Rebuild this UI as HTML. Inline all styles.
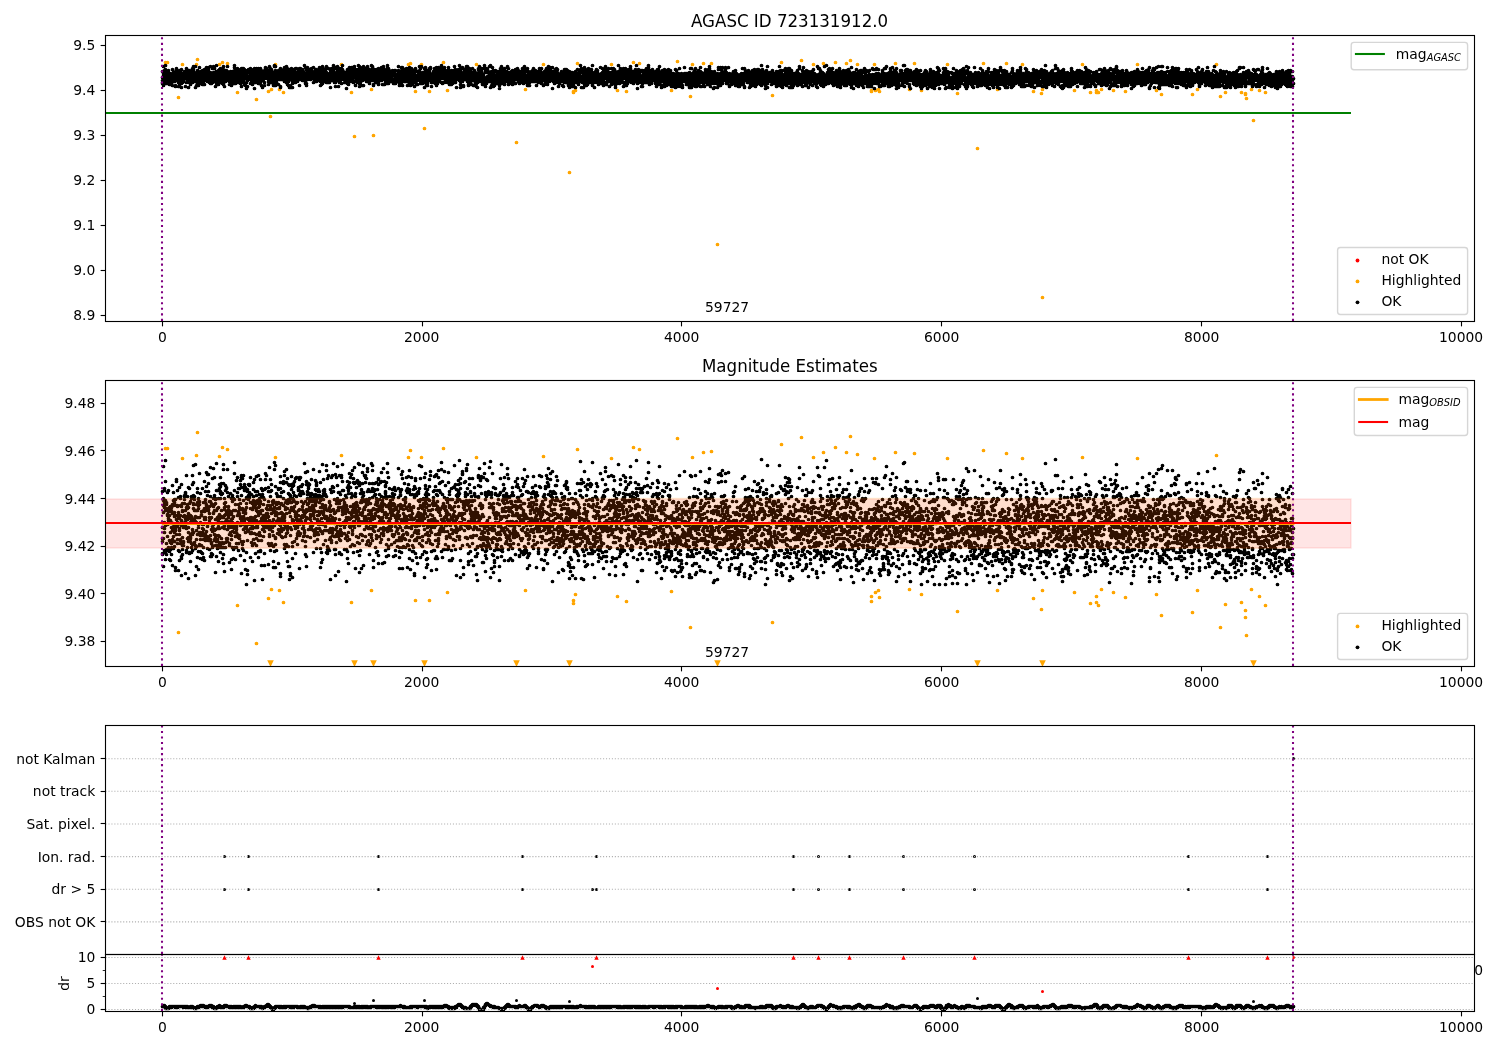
<!DOCTYPE html>
<html><head><meta charset="utf-8"><title>AGASC ID 723131912.0</title>
<style>html,body{margin:0;padding:0;background:#fff}body{width:1500px;height:1050px;overflow:hidden}</style></head>
<body>
<svg width="1500" height="1050" viewBox="0 0 1500 1050" style="display:block;will-change:transform;font-family:'DejaVu Sans','Liberation Sans',sans-serif;font-size:13.889px">
<rect width="1500" height="1050" fill="#fff"/>
<defs>
<clipPath id="c1"><rect x="105.5" y="35.5" width="1369.0" height="286.0"/></clipPath>
<clipPath id="c2"><rect x="105.5" y="380.5" width="1369.0" height="286.0"/></clipPath>
<clipPath id="c3"><rect x="105.5" y="725.5" width="1369.0" height="229.0"/></clipPath>
<clipPath id="c4"><rect x="105.5" y="954.5" width="1369.0" height="57.0"/></clipPath>
</defs>
<g clip-path="url(#c1)">
<g transform="translate(.5 .5)">
<path d="M165 62h0m2 0h0m11 35h0m4-33h0m14 0h0m1-5h0m22 5h0m3-2h0m5 1h0m10 29h0m19 7h0m12-8h0m2 25h0m1-27h0m4-25h0m4 25h0m4 3h0m58-28h0m10 28h0m3 44h0m17-47h0m2 46h0m35-71h0m2-1h0m5 28h0m6-27h0m3 64h0m5-37h0m14-29h0m4 28h0m29-26h0m40 78h0m9-53h0m18-25h0m26 108h0m4-81h0m0 1h0m2-2h0m2-27h0m34 1h0m6 26h0m9 1h0m7-29h0m6 1h0m32 27h0m6-29h0m13 35h0m2-32h0m11-1h0m8 0h0m6 181h0m55-149h0m9-33h0m20-2h0m12 4h0m10-1h0m12-1h0m11 1h0m4-3h0m7 4h0m14 26h0m0 1h0m3-27h0m1 26h0m3-1h0m1 2h0m16-28h0m14 26h0m5-26h0m7 27h0m26-26h0m10 29h0m20 55h0m6-85h0m14 26h0m9-26h0m16 1h0m11 27h0m8 2h0m1-4h0m0 208h0m32-207h0m8-26h0m8 28h0m6-2h0m0 2h0m2 0h0m3-3h0m12 1h0m12 1h0m12-27h0m19 26h0m5 4h0m31 0h0m5-5h0m19-25h0m4 32h0m5-4h0m16 0h0m4 1h0m0 1h0m1 4h0m5-9h0m2 31h0m6-30h0m6 2h0" stroke="#ffa500" stroke-width="3.74" stroke-linecap="round" fill="none"/>
<path d="M162 71h0m0 6h0m0 3h0m0 2h0m0 1h0m1-17h0m0 6h0m0 1h0m0 2h0m0 5h0m0 5h0m1-15h0m0 3h0m0 1h0m0 3h0m0 1h0m0 4h0m1-17h0m0 4h0m0 3h0m0 2h0m0 3h0m0 5h0m0 1h0m1-10h0m0 1h0m0 7h0m0 1h0m0 1h0m1-12h0m0 4h0m0 2h0m0 2h0m0 3h0m1-12h0m0 4h0m0 1h0m0 1h0m0 5h0m1-7h0m0 1h0m0 2h0m0 3h0m0 2h0m0 2h0m1-11h0m0 1h0m0 2h0m0 2h0m0 2h0m0 2h0m0 2h0m1-10h0m0 3h0m0 4h0m0 2h0m1-14h0m0 4h0m0 2h0m0 3h0m0 2h0m0 5h0m1-14h0m0 1h0m0 1h0m0 4h0m0 2h0m0 2h0m1-9h0m0 1h0m0 2h0m0 2h0m0 1h0m0 2h0m0 1h0m1-9h0m0 3h0m0 2h0m0 1h0m0 7h0m0 1h0m1-18h0m0 1h0m0 4h0m0 3h0m0 1h0m0 2h0m1-9h0m0 3h0m0 2h0m0 2h0m0 3h0m1-8h0m0 3h0m0 1h0m0 1h0m0 5h0m0 4h0m1-16h0m0 6h0m0 2h0m0 1h0m0 3h0m0 2h0m1-12h0m0 1h0m0 2h0m0 5h0m1-11h0m0 5h0m0 2h0m0 1h0m0 6h0m0 4h0m1-14h0m0 1h0m0 3h0m0 2h0m0 2h0m0 1h0m1-7h0m0 2h0m0 3h0m0 1h0m1-10h0m0 1h0m0 1h0m0 2h0m0 2h0m1-6h0m0 3h0m0 2h0m0 1h0m0 9h0m1-18h0m0 6h0m0 1h0m0 3h0m0 4h0m1-10h0m0 1h0m0 1h0m0 2h0m0 4h0m0 1h0m1-11h0m0 4h0m0 1h0m0 2h0m0 1h0m0 1h0m0 1h0m0 7h0m1-17h0m0 3h0m0 2h0m0 1h0m0 4h0m0 2h0m1-10h0m0 3h0m0 2h0m0 2h0m0 1h0m0 4h0m1-12h0m0 3h0m0 1h0m0 4h0m0 1h0m0 1h0m1-14h0m0 1h0m0 7h0m0 2h0m0 1h0m0 2h0m0 1h0m1-16h0m0 3h0m0 2h0m0 2h0m0 1h0m0 4h0m1-6h0m0 2h0m0 2h0m0 4h0m0 1h0m1-15h0m0 8h0m0 1h0m0 1h0m0 5h0m0 6h0m1-14h0m0 4h0m0 1h0m0 2h0m0 1h0m0 4h0m1-15h0m0 1h0m0 2h0m0 1h0m0 2h0m0 3h0m0 4h0m1-11h0m0 1h0m0 1h0m0 3h0m0 5h0m0 3h0m1-18h0m0 6h0m0 3h0m0 2h0m0 3h0m1-10h0m0 6h0m0 1h0m0 1h0m0 1h0m0 2h0m0 1h0m1-9h0m0 1h0m0 2h0m0 2h0m0 2h0m0 1h0m1-12h0m0 7h0m0 1h0m0 1h0m0 3h0m0 2h0m1-11h0m0 1h0m0 3h0m0 1h0m0 2h0m0 1h0m0 2h0m1-14h0m0 5h0m0 2h0m0 3h0m0 5h0m1-13h0m0 1h0m0 1h0m0 3h0m0 3h0m0 1h0m1-13h0m0 3h0m0 3h0m0 1h0m0 4h0m0 1h0m1-11h0m0 3h0m0 3h0m0 3h0m0 2h0m0 2h0m1-14h0m0 2h0m0 2h0m0 3h0m0 5h0m0 1h0m1-7h0m0 1h0m0 1h0m0 1h0m0 1h0m0 5h0m1-16h0m0 6h0m0 1h0m0 3h0m0 3h0m0 1h0m0 3h0m1-10h0m0 3h0m0 2h0m0 2h0m0 2h0m0 1h0m1-15h0m0 5h0m0 4h0m0 1h0m0 3h0m0 1h0m1-16h0m0 6h0m0 1h0m0 1h0m0 1h0m0 2h0m0 1h0m1-10h0m0 4h0m0 1h0m0 1h0m0 4h0m0 1h0m0 1h0m1-8h0m0 1h0m0 3h0m0 2h0m0 1h0m0 2h0m0 5h0m1-21h0m0 6h0m0 3h0m0 5h0m0 1h0m0 1h0m0 2h0m1-9h0m0 2h0m0 2h0m0 2h0m0 1h0m1-11h0m0 2h0m0 2h0m0 1h0m0 1h0m0 1h0m0 2h0m0 5h0m1-15h0m0 1h0m0 5h0m0 1h0m0 2h0m0 1h0m0 1h0m1-12h0m0 2h0m0 1h0m0 1h0m0 9h0m0 1h0m1-13h0m0 2h0m0 3h0m0 1h0m0 1h0m0 4h0m1-9h0m0 5h0m0 1h0m0 1h0m0 2h0m0 1h0m0 2h0m1-17h0m0 3h0m0 6h0m0 6h0m0 2h0m0 1h0m1-12h0m0 1h0m0 1h0m0 1h0m0 2h0m0 1h0m0 8h0m1-16h0m0 3h0m0 2h0m0 1h0m0 4h0m0 1h0m1-11h0m0 4h0m0 1h0m0 1h0m0 4h0m1-14h0m0 5h0m0 4h0m0 1h0m0 2h0m0 2h0m1-8h0m0 2h0m0 1h0m0 1h0m0 1h0m1 0h0m0 2h0m0 1h0m0 1h0m0 3h0m1-13h0m0 3h0m0 1h0m0 2h0m0 1h0m0 1h0m1-7h0m0 3h0m0 1h0m0 1h0m0 2h0m0 1h0m0 4h0m0 1h0m1-14h0m0 2h0m0 3h0m0 2h0m0 3h0m1-9h0m0 2h0m0 1h0m0 2h0m0 5h0m0 1h0m1-18h0m0 2h0m0 3h0m0 2h0m0 5h0m0 1h0m0 1h0m0 2h0m1-8h0m0 1h0m0 3h0m0 2h0m0 4h0m1-14h0m0 8h0m0 1h0m0 2h0m0 1h0m1-13h0m0 3h0m0 1h0m0 3h0m0 2h0m0 2h0m1-9h0m0 3h0m0 1h0m0 1h0m0 4h0m0 2h0m0 1h0m1-12h0m0 2h0m0 2h0m0 1h0m0 4h0m0 1h0m1-11h0m0 4h0m0 1h0m0 1h0m0 1h0m0 1h0m0 6h0m1-15h0m0 2h0m0 1h0m0 3h0m0 2h0m0 4h0m0 6h0m1-18h0m0 2h0m0 4h0m0 2h0m0 1h0m0 4h0m1-13h0m0 4h0m0 3h0m0 1h0m0 2h0m0 2h0m0 2h0m1-13h0m0 1h0m0 4h0m0 2h0m0 2h0m0 6h0m1-14h0m0 4h0m0 1h0m0 2h0m0 1h0m0 7h0m1-13h0m0 1h0m0 1h0m0 3h0m0 1h0m0 4h0m0 6h0m1-18h0m0 1h0m0 5h0m0 1h0m0 1h0m0 2h0m0 6h0m1-17h0m0 2h0m0 1h0m0 4h0m0 2h0m1-9h0m0 2h0m0 1h0m0 4h0m1-8h0m0 5h0m0 1h0m0 2h0m0 1h0m0 1h0m0 1h0m0 4h0m1-12h0m0 2h0m0 3h0m0 1h0m0 1h0m0 1h0m0 1h0m1-7h0m0 1h0m0 2h0m0 1h0m0 1h0m0 3h0m0 3h0m1-15h0m0 1h0m0 2h0m0 2h0m0 3h0m0 1h0m0 2h0m1-12h0m0 8h0m0 3h0m0 1h0m0 8h0m1-17h0m0 2h0m0 1h0m0 1h0m0 2h0m0 5h0m1-14h0m0 3h0m0 3h0m0 2h0m0 1h0m0 2h0m0 1h0m0 1h0m1-10h0m0 1h0m0 1h0m0 2h0m0 2h0m0 1h0m0 1h0m1-11h0m0 6h0m0 1h0m0 1h0m0 4h0m0 2h0m0 1h0m1-12h0m0 1h0m0 1h0m0 1h0m0 4h0m0 1h0m1-11h0m0 5h0m0 2h0m0 1h0m0 3h0m0 3h0m1-12h0m0 2h0m0 2h0m0 2h0m0 1h0m0 3h0m0 5h0m1-14h0m0 3h0m0 2h0m0 1h0m0 1h0m0 9h0m1-15h0m0 1h0m0 2h0m0 1h0m0 1h0m0 1h0m0 1h0m1-9h0m0 2h0m0 3h0m0 2h0m0 1h0m0 4h0m0 3h0m1-18h0m0 1h0m0 2h0m0 6h0m0 1h0m1-9h0m0 6h0m0 1h0m0 1h0m0 1h0m1-4h0m0 1h0m0 1h0m0 1h0m0 1h0m0 1h0m1-8h0m0 1h0m0 2h0m0 2h0m0 2h0m0 4h0m0 3h0m1-18h0m0 7h0m0 1h0m0 2h0m0 2h0m0 1h0m0 2h0m1-13h0m0 3h0m0 1h0m0 2h0m0 3h0m0 1h0m0 4h0m1-13h0m0 1h0m0 4h0m0 1h0m0 1h0m0 1h0m0 4h0m1-8h0m0 1h0m0 3h0m0 1h0m0 3h0m1-9h0m0 1h0m0 2h0m0 1h0m0 3h0m0 2h0m0 3h0m0 1h0m1-20h0m0 1h0m0 8h0m0 3h0m0 5h0m1-16h0m0 4h0m0 5h0m0 4h0m0 1h0m0 1h0m0 4h0m1-14h0m0 2h0m0 2h0m0 1h0m0 6h0m1-11h0m0 1h0m0 1h0m0 1h0m0 2h0m0 3h0m1-9h0m0 3h0m0 3h0m0 2h0m0 1h0m0 5h0m1-11h0m0 1h0m0 1h0m0 1h0m0 1h0m0 1h0m0 1h0m1-11h0m0 1h0m0 1h0m0 2h0m0 5h0m0 1h0m0 8h0m0 1h0m1-16h0m0 2h0m0 2h0m0 1h0m0 2h0m0 1h0m1-4h0m0 1h0m0 1h0m0 1h0m0 1h0m1-10h0m0 2h0m0 1h0m0 1h0m0 2h0m0 3h0m1-11h0m0 1h0m0 7h0m0 1h0m0 1h0m0 4h0m1-12h0m0 4h0m0 1h0m0 3h0m0 2h0m0 2h0m1-15h0m0 3h0m0 3h0m0 3h0m0 4h0m0 2h0m0 1h0m1-14h0m0 4h0m0 1h0m0 1h0m0 3h0m0 1h0m0 6h0m1-15h0m0 2h0m0 1h0m0 5h0m0 4h0m0 4h0m1-16h0m0 2h0m0 1h0m0 1h0m0 2h0m0 10h0m0 2h0m1-16h0m0 1h0m0 2h0m0 1h0m0 2h0m0 2h0m0 7h0m0 1h0m1-19h0m0 1h0m0 1h0m0 3h0m0 1h0m0 4h0m1-8h0m0 2h0m0 4h0m0 4h0m0 1h0m0 2h0m0 4h0m1-18h0m0 1h0m0 1h0m0 1h0m0 1h0m0 1h0m0 2h0m1-7h0m0 2h0m0 2h0m0 1h0m0 3h0m0 3h0m1-12h0m0 7h0m0 2h0m0 1h0m0 4h0m1-14h0m0 4h0m0 1h0m0 2h0m0 1h0m0 4h0m1-7h0m0 3h0m0 1h0m0 2h0m0 2h0m1-11h0m0 4h0m0 1h0m0 1h0m0 2h0m1-10h0m0 3h0m0 3h0m0 3h0m0 2h0m0 6h0m1-17h0m0 2h0m0 1h0m0 5h0m0 1h0m0 2h0m1-9h0m0 1h0m0 2h0m0 2h0m0 1h0m1-7h0m0 2h0m0 3h0m0 1h0m0 1h0m0 2h0m0 2h0m1-9h0m0 2h0m0 1h0m0 1h0m0 2h0m0 2h0m1-14h0m0 9h0m0 1h0m0 3h0m0 1h0m1-12h0m0 6h0m0 2h0m0 1h0m0 4h0m0 1h0m0 2h0m1-14h0m0 5h0m0 1h0m0 1h0m0 7h0m0 2h0m1-18h0m0 4h0m0 1h0m0 1h0m0 1h0m0 2h0m0 3h0m1-10h0m0 1h0m0 1h0m0 2h0m0 5h0m1-9h0m0 2h0m0 1h0m0 2h0m1-3h0m0 1h0m0 3h0m0 1h0m0 1h0m0 2h0m1-11h0m0 3h0m0 2h0m0 3h0m0 2h0m1-7h0m0 1h0m0 1h0m0 1h0m0 1h0m0 2h0m1-10h0m0 5h0m0 2h0m0 1h0m0 3h0m0 4h0m1-10h0m0 2h0m0 2h0m0 2h0m0 1h0m0 1h0m1-11h0m0 1h0m0 1h0m0 2h0m0 2h0m0 3h0m1-9h0m0 1h0m0 1h0m0 1h0m0 1h0m0 5h0m0 3h0m1-10h0m0 1h0m0 3h0m0 1h0m0 2h0m0 1h0m0 1h0m1-10h0m0 1h0m0 1h0m0 3h0m0 2h0m0 2h0m1-12h0m0 4h0m0 2h0m0 2h0m0 1h0m0 1h0m0 1h0m1-9h0m0 3h0m0 2h0m0 3h0m0 1h0m0 3h0m0 4h0m1-13h0m0 2h0m0 2h0m0 2h0m0 4h0m0 2h0m1-18h0m0 7h0m0 1h0m0 1h0m0 2h0m0 2h0m0 4h0m1-15h0m0 2h0m0 1h0m0 1h0m0 3h0m0 6h0m1-11h0m0 1h0m0 3h0m0 2h0m0 2h0m1-7h0m0 2h0m0 1h0m0 1h0m0 1h0m0 1h0m0 3h0m1-14h0m0 1h0m0 5h0m0 3h0m0 1h0m0 2h0m0 4h0m1-14h0m0 6h0m0 2h0m0 5h0m0 1h0m1-14h0m0 6h0m0 2h0m0 2h0m0 3h0m1-8h0m0 1h0m0 3h0m0 1h0m0 2h0m0 2h0m1-12h0m0 3h0m0 2h0m0 1h0m0 2h0m0 1h0m0 8h0m1-19h0m0 3h0m0 3h0m0 2h0m0 4h0m1-12h0m0 2h0m0 6h0m0 2h0m0 1h0m1-14h0m0 5h0m0 1h0m0 3h0m0 2h0m0 2h0m1-6h0m0 3h0m0 1h0m0 1h0m0 2h0m0 3h0m1-15h0m0 8h0m0 1h0m0 2h0m0 1h0m0 3h0m0 4h0m1-18h0m0 4h0m0 1h0m0 4h0m0 1h0m0 1h0m0 1h0m1-14h0m0 3h0m0 3h0m0 1h0m0 1h0m0 3h0m0 1h0m1-7h0m0 3h0m0 3h0m0 2h0m0 7h0m1-18h0m0 3h0m0 2h0m0 3h0m0 4h0m0 2h0m1-11h0m0 1h0m0 2h0m0 3h0m0 1h0m0 2h0m1-12h0m0 6h0m0 4h0m0 1h0m0 4h0m1-18h0m0 4h0m0 1h0m0 4h0m0 1h0m0 2h0m1-6h0m0 1h0m0 2h0m0 2h0m0 1h0m1-4h0m0 4h0m0 2h0m0 3h0m1-10h0m0 1h0m0 1h0m0 1h0m0 1h0m0 1h0m0 3h0m1-8h0m0 1h0m0 2h0m0 1h0m0 3h0m0 3h0m0 6h0m1-19h0m0 1h0m0 4h0m0 5h0m0 1h0m0 2h0m0 1h0m1-14h0m0 1h0m0 1h0m0 4h0m0 1h0m0 2h0m0 6h0m1-17h0m0 2h0m0 6h0m0 1h0m0 1h0m0 3h0m1-12h0m0 2h0m0 3h0m0 3h0m0 1h0m0 1h0m0 3h0m1-14h0m0 4h0m0 1h0m0 3h0m0 1h0m0 1h0m1-10h0m0 4h0m0 3h0m0 1h0m0 3h0m0 1h0m0 2h0m1-13h0m0 1h0m0 4h0m0 1h0m0 1h0m0 1h0m0 6h0m1-16h0m0 3h0m0 6h0m0 1h0m0 1h0m0 4h0m1-12h0m0 2h0m0 1h0m0 1h0m0 1h0m0 11h0m1-15h0m0 3h0m0 1h0m0 1h0m0 1h0m0 3h0m1-10h0m0 4h0m0 2h0m0 1h0m0 4h0m0 2h0m1-17h0m0 4h0m0 6h0m0 1h0m0 1h0m0 2h0m1-13h0m0 3h0m0 1h0m0 4h0m0 3h0m0 3h0m0 3h0m0 3h0m1-15h0m0 2h0m0 2h0m0 1h0m0 3h0m0 3h0m1-12h0m0 1h0m0 1h0m0 1h0m0 6h0m0 6h0m1-18h0m0 2h0m0 3h0m0 3h0m0 2h0m0 2h0m0 1h0m1-14h0m0 5h0m0 1h0m0 2h0m0 2h0m0 9h0m1-17h0m0 5h0m0 1h0m0 2h0m0 2h0m1-10h0m0 1h0m0 3h0m0 2h0m0 1h0m0 4h0m1-11h0m0 4h0m0 1h0m0 3h0m0 1h0m0 4h0m1-15h0m0 1h0m0 4h0m0 2h0m0 4h0m0 3h0m1-10h0m0 2h0m0 2h0m0 1h0m0 1h0m0 1h0m0 1h0m0 2h0m1-11h0m0 3h0m0 1h0m0 4h0m0 1h0m0 1h0m0 2h0m0 2h0m1-12h0m0 2h0m0 2h0m0 1h0m0 1h0m0 3h0m1-15h0m0 9h0m0 1h0m0 3h0m0 1h0m1-13h0m0 1h0m0 2h0m0 1h0m0 2h0m0 4h0m0 2h0m0 2h0m1-9h0m0 3h0m0 1h0m0 1h0m0 1h0m0 1h0m0 6h0m0 1h0m1-16h0m0 1h0m0 1h0m0 1h0m0 2h0m0 2h0m0 2h0m1-7h0m0 2h0m0 1h0m0 1h0m0 2h0m0 4h0m1-12h0m0 3h0m0 1h0m0 4h0m0 2h0m0 3h0m1-12h0m0 2h0m0 1h0m0 1h0m0 8h0m1-14h0m0 1h0m0 6h0m0 3h0m0 5h0m0 1h0m1-13h0m0 1h0m0 2h0m0 2h0m0 3h0m1-10h0m0 4h0m0 3h0m0 2h0m0 2h0m1-13h0m0 2h0m0 3h0m0 1h0m0 1h0m0 3h0m0 2h0m0 1h0m1-8h0m0 1h0m0 1h0m0 2h0m0 8h0m1-18h0m0 6h0m0 4h0m0 1h0m0 1h0m0 1h0m1-10h0m0 4h0m0 2h0m0 3h0m0 6h0m1-14h0m0 1h0m0 1h0m0 3h0m0 7h0m1-13h0m0 3h0m0 1h0m0 3h0m0 2h0m0 3h0m0 2h0m1-18h0m0 2h0m0 6h0m0 2h0m0 3h0m1-10h0m0 8h0m0 1h0m0 1h0m0 2h0m0 1h0m0 1h0m0 1h0m1-13h0m0 2h0m0 1h0m0 1h0m0 2h0m0 1h0m1-5h0m0 2h0m0 1h0m0 1h0m0 1h0m0 1h0m1-5h0m0 2h0m0 2h0m0 1h0m0 3h0m1-11h0m0 1h0m0 1h0m0 1h0m0 2h0m0 4h0m1-8h0m0 1h0m0 1h0m0 1h0m0 5h0m0 4h0m1-13h0m0 1h0m0 2h0m0 2h0m0 4h0m0 1h0m1-10h0m0 4h0m0 2h0m0 1h0m0 5h0m0 1h0m1-9h0m0 2h0m0 1h0m0 1h0m0 2h0m1-5h0m0 1h0m0 2h0m0 2h0m0 1h0m1-15h0m0 4h0m0 2h0m0 1h0m0 1h0m0 2h0m0 3h0m1-4h0m0 2h0m0 2h0m0 1h0m0 1h0m0 1h0m0 1h0m0 2h0m1-14h0m0 2h0m0 1h0m0 3h0m1-10h0m0 3h0m0 3h0m0 1h0m0 2h0m0 4h0m0 2h0m1-15h0m0 1h0m0 10h0m0 1h0m0 1h0m0 1h0m0 4h0m1-13h0m0 2h0m0 1h0m0 1h0m0 1h0m0 2h0m0 2h0m1-12h0m0 4h0m0 2h0m0 1h0m0 4h0m1-8h0m0 1h0m0 3h0m0 2h0m0 2h0m0 1h0m1-13h0m0 2h0m0 4h0m0 1h0m0 1h0m0 1h0m0 1h0m1-8h0m0 1h0m0 5h0m0 3h0m0 2h0m0 4h0m1-17h0m0 1h0m0 2h0m0 2h0m0 1h0m0 3h0m0 4h0m1-14h0m0 3h0m0 1h0m0 2h0m0 2h0m0 5h0m0 2h0m0 1h0m1-12h0m0 3h0m0 1h0m0 1h0m0 9h0m1-17h0m0 6h0m0 1h0m0 1h0m0 1h0m0 1h0m0 1h0m1-8h0m0 4h0m0 2h0m0 2h0m0 2h0m0 1h0m0 2h0m1-14h0m0 3h0m0 1h0m0 2h0m0 5h0m0 1h0m1-12h0m0 2h0m0 4h0m0 2h0m0 2h0m0 6h0m1-18h0m0 1h0m0 1h0m0 1h0m0 6h0m0 1h0m0 2h0m0 2h0m1-11h0m0 4h0m0 2h0m0 3h0m0 3h0m1-12h0m0 4h0m0 1h0m0 1h0m0 2h0m0 5h0m1-13h0m0 1h0m0 2h0m0 1h0m0 1h0m0 2h0m0 1h0m1-13h0m0 4h0m0 3h0m0 2h0m0 1h0m0 1h0m0 2h0m0 1h0m1-12h0m0 4h0m0 1h0m0 2h0m0 1h0m0 7h0m1-17h0m0 7h0m0 1h0m0 1h0m0 1h0m0 5h0m1-9h0m0 2h0m0 2h0m0 1h0m0 2h0m0 1h0m0 1h0m0 2h0m1-11h0m0 1h0m0 2h0m0 2h0m1-9h0m0 6h0m0 1h0m0 1h0m0 2h0m0 4h0m0 5h0m1-20h0m0 3h0m0 1h0m0 1h0m0 3h0m0 2h0m0 2h0m1-8h0m0 1h0m0 1h0m0 1h0m0 6h0m0 2h0m0 2h0m0 1h0m1-15h0m0 5h0m0 2h0m0 1h0m0 5h0m0 2h0m1-14h0m0 1h0m0 1h0m0 1h0m0 2h0m0 1h0m0 2h0m0 1h0m1-12h0m0 2h0m0 2h0m0 1h0m0 3h0m0 1h0m0 2h0m0 1h0m1-13h0m0 1h0m0 6h0m0 1h0m0 1h0m0 2h0m0 2h0m1-4h0m0 1h0m0 1h0m0 4h0m0 4h0m1-13h0m0 1h0m0 1h0m0 1h0m0 1h0m0 4h0m1-10h0m0 1h0m0 1h0m0 4h0m0 5h0m1-14h0m0 2h0m0 6h0m0 2h0m0 4h0m1-14h0m0 2h0m0 3h0m0 3h0m0 1h0m0 2h0m0 1h0m0 3h0m1-16h0m0 4h0m0 2h0m0 1h0m0 5h0m0 4h0m0 2h0m1-15h0m0 1h0m0 2h0m0 3h0m0 1h0m0 4h0m0 2h0m1-16h0m0 1h0m0 6h0m0 3h0m0 2h0m0 1h0m0 1h0m1-12h0m0 1h0m0 4h0m0 1h0m0 3h0m0 1h0m1-10h0m0 2h0m0 3h0m0 1h0m0 2h0m0 1h0m1-13h0m0 2h0m0 9h0m0 1h0m0 1h0m0 4h0m1-13h0m0 2h0m0 2h0m0 3h0m0 1h0m0 6h0m1-10h0m0 1h0m0 2h0m0 2h0m0 4h0m1-15h0m0 5h0m0 2h0m0 2h0m0 2h0m0 4h0m1-12h0m0 3h0m0 1h0m0 1h0m0 2h0m0 4h0m1-9h0m0 2h0m0 1h0m0 2h0m0 2h0m0 1h0m1-8h0m0 1h0m0 2h0m0 1h0m0 1h0m0 1h0m0 4h0m1-15h0m0 2h0m0 3h0m0 4h0m0 3h0m0 2h0m1-10h0m0 2h0m0 1h0m0 1h0m0 1h0m0 3h0m0 5h0m1-12h0m0 1h0m0 3h0m0 1h0m0 2h0m1-9h0m0 2h0m0 2h0m0 2h0m0 2h0m0 4h0m0 2h0m1-12h0m0 2h0m0 1h0m0 1h0m0 3h0m0 4h0m1-13h0m0 5h0m0 1h0m0 2h0m0 2h0m0 1h0m1-15h0m0 4h0m0 3h0m0 1h0m0 4h0m1-9h0m0 4h0m0 2h0m0 1h0m0 1h0m0 3h0m0 2h0m1-12h0m0 2h0m0 4h0m0 1h0m0 1h0m0 9h0m1-16h0m0 1h0m0 4h0m0 2h0m0 1h0m1-10h0m0 1h0m0 1h0m0 3h0m0 1h0m0 3h0m1-13h0m0 6h0m0 1h0m0 3h0m0 1h0m0 2h0m0 1h0m0 1h0m1-12h0m0 1h0m0 1h0m0 7h0m0 4h0m0 3h0m0 3h0m1-15h0m0 3h0m0 2h0m0 1h0m1-11h0m0 1h0m0 7h0m0 1h0m0 5h0m1-9h0m0 1h0m0 1h0m0 2h0m0 1h0m0 8h0m0 1h0m1-17h0m0 3h0m0 1h0m0 1h0m0 1h0m0 1h0m0 2h0m1-9h0m0 2h0m0 1h0m0 5h0m0 2h0m1-13h0m0 1h0m0 4h0m0 1h0m0 1h0m0 1h0m0 5h0m1-13h0m0 4h0m0 1h0m0 2h0m0 4h0m0 2h0m0 2h0m1-8h0m0 3h0m0 1h0m0 1h0m0 4h0m0 2h0m0 1h0m1-17h0m0 1h0m0 3h0m0 1h0m0 1h0m0 3h0m0 4h0m1-10h0m0 3h0m0 1h0m0 1h0m0 1h0m0 2h0m0 3h0m1-10h0m0 1h0m0 2h0m0 1h0m0 3h0m0 5h0m1-16h0m0 4h0m0 1h0m0 2h0m0 2h0m0 2h0m0 1h0m1-5h0m0 1h0m0 2h0m0 1h0m0 6h0m1-15h0m0 1h0m0 1h0m0 3h0m0 1h0m0 1h0m1-5h0m0 2h0m0 1h0m0 2h0m0 5h0m0 1h0m1-8h0m0 1h0m0 1h0m0 2h0m0 4h0m0 3h0m1-11h0m0 1h0m0 1h0m0 1h0m0 3h0m0 1h0m0 5h0m1-19h0m0 1h0m0 3h0m0 3h0m0 1h0m1-10h0m0 7h0m0 3h0m0 1h0m0 1h0m0 2h0m1-12h0m0 2h0m0 3h0m0 3h0m0 1h0m0 2h0m0 2h0m1-13h0m0 3h0m0 3h0m0 1h0m0 4h0m0 1h0m0 1h0m1-8h0m0 1h0m0 1h0m0 2h0m0 1h0m0 1h0m0 3h0m0 2h0m1-16h0m0 7h0m0 2h0m0 1h0m0 1h0m0 1h0m0 4h0m1-19h0m0 2h0m0 10h0m0 1h0m0 2h0m0 1h0m1-10h0m0 1h0m0 7h0m0 1h0m0 2h0m0 1h0m0 3h0m1-18h0m0 4h0m0 5h0m0 4h0m0 1h0m0 1h0m1-14h0m0 7h0m0 1h0m0 1h0m0 1h0m0 1h0m1-9h0m0 8h0m0 1h0m0 1h0m1-15h0m0 7h0m0 1h0m0 2h0m0 2h0m0 3h0m1-16h0m0 9h0m0 3h0m0 1h0m0 3h0m0 6h0m1-16h0m0 1h0m0 1h0m0 4h0m0 3h0m0 5h0m1-18h0m0 11h0m0 2h0m0 3h0m1-13h0m0 3h0m0 1h0m0 1h0m0 4h0m0 4h0m0 3h0m1-11h0m0 2h0m0 1h0m0 4h0m0 2h0m0 1h0m1-15h0m0 1h0m0 4h0m0 1h0m0 3h0m1-4h0m0 1h0m0 3h0m0 2h0m0 1h0m1-11h0m0 2h0m0 2h0m0 4h0m0 1h0m0 1h0m0 2h0m1-12h0m0 1h0m0 3h0m0 2h0m0 1h0m0 2h0m0 2h0m1-11h0m0 2h0m0 5h0m0 2h0m0 5h0m0 3h0m1-20h0m0 3h0m0 4h0m0 1h0m0 1h0m0 2h0m0 1h0m1-14h0m0 10h0m0 1h0m0 1h0m0 3h0m0 1h0m0 1h0m1-11h0m0 2h0m0 4h0m0 3h0m0 1h0m1-13h0m0 1h0m0 2h0m0 1h0m0 1h0m0 1h0m0 3h0m1-10h0m0 2h0m0 2h0m0 1h0m0 2h0m0 3h0m0 6h0m1-12h0m0 2h0m0 1h0m0 3h0m0 1h0m0 2h0m1-10h0m0 1h0m0 4h0m0 3h0m0 1h0m1-14h0m0 1h0m0 6h0m0 3h0m0 1h0m0 1h0m0 1h0m0 1h0m1-12h0m0 4h0m0 2h0m0 1h0m0 6h0m0 1h0m0 2h0m1-12h0m0 2h0m0 3h0m0 1h0m0 1h0m1-6h0m0 1h0m0 2h0m0 3h0m0 1h0m0 1h0m0 2h0m1-12h0m0 2h0m0 1h0m0 3h0m0 2h0m1-9h0m0 1h0m0 4h0m0 1h0m0 5h0m0 3h0m1-13h0m0 2h0m0 4h0m0 1h0m0 1h0m0 2h0m1-8h0m0 2h0m0 1h0m0 1h0m0 1h0m0 1h0m1-10h0m0 4h0m0 2h0m0 2h0m0 1h0m0 5h0m1-13h0m0 4h0m0 1h0m0 1h0m0 1h0m0 2h0m1-11h0m0 1h0m0 3h0m0 2h0m0 1h0m0 4h0m1-9h0m0 2h0m0 3h0m0 1h0m0 3h0m0 2h0m1-7h0m0 2h0m0 1h0m0 5h0m0 1h0m1-12h0m0 2h0m0 1h0m0 1h0m0 1h0m0 4h0m1-9h0m0 3h0m0 2h0m0 2h0m0 2h0m0 2h0m1-14h0m0 3h0m0 4h0m0 1h0m0 2h0m0 2h0m0 2h0m1-12h0m0 3h0m0 1h0m0 1h0m0 1h0m0 2h0m0 5h0m1-17h0m0 3h0m0 4h0m0 2h0m0 1h0m0 5h0m0 1h0m1-13h0m0 6h0m0 1h0m0 1h0m0 1h0m0 3h0m1-10h0m0 4h0m0 1h0m0 1h0m0 2h0m0 3h0m1-14h0m0 3h0m0 5h0m0 1h0m0 1h0m0 1h0m0 4h0m0 2h0m1-14h0m0 1h0m0 2h0m0 2h0m0 1h0m0 3h0m0 1h0m0 2h0m1-10h0m0 1h0m0 5h0m0 1h0m0 2h0m0 3h0m1-12h0m0 1h0m0 1h0m0 1h0m0 1h0m0 1h0m1-7h0m0 1h0m0 1h0m0 3h0m0 1h0m0 1h0m1-8h0m0 1h0m0 3h0m0 3h0m0 4h0m1-13h0m0 3h0m0 2h0m0 3h0m0 2h0m0 2h0m0 1h0m1-10h0m0 2h0m0 1h0m0 1h0m0 1h0m0 3h0m0 2h0m1-11h0m0 1h0m0 1h0m0 4h0m0 2h0m0 3h0m1-10h0m0 1h0m0 1h0m0 1h0m0 1h0m0 2h0m0 8h0m1-14h0m0 3h0m0 2h0m0 2h0m0 2h0m1-6h0m0 1h0m0 3h0m0 3h0m0 1h0m1-14h0m0 2h0m0 4h0m0 1h0m0 2h0m0 1h0m1-8h0m0 3h0m0 2h0m0 1h0m0 2h0m0 1h0m1-11h0m0 5h0m0 2h0m0 1h0m0 4h0m0 3h0m1-10h0m0 1h0m0 1h0m0 2h0m0 2h0m0 1h0m1-8h0m0 1h0m0 1h0m0 3h0m0 1h0m0 7h0m1-14h0m0 1h0m0 2h0m0 2h0m0 1h0m0 1h0m0 6h0m1-14h0m0 2h0m0 8h0m0 2h0m0 1h0m1-15h0m0 7h0m0 2h0m0 2h0m0 1h0m0 2h0m1-14h0m0 1h0m0 6h0m0 1h0m0 1h0m0 5h0m0 2h0m1-18h0m0 3h0m0 1h0m0 1h0m0 2h0m0 3h0m0 2h0m1-5h0m0 2h0m0 2h0m0 1h0m0 2h0m0 1h0m1-14h0m0 1h0m0 3h0m0 2h0m0 2h0m0 1h0m1-4h0m0 1h0m0 1h0m0 1h0m0 3h0m0 1h0m0 1h0m1-13h0m0 4h0m0 1h0m0 4h0m0 1h0m0 11h0m1-17h0m0 4h0m0 1h0m0 3h0m0 1h0m0 1h0m1-10h0m0 2h0m0 1h0m0 3h0m0 1h0m0 2h0m0 1h0m0 2h0m1-14h0m0 2h0m0 1h0m0 1h0m0 2h0m0 1h0m1-8h0m0 2h0m0 2h0m0 6h0m0 2h0m0 1h0m0 1h0m1-13h0m0 3h0m0 3h0m0 1h0m0 1h0m0 2h0m0 1h0m1-5h0m0 2h0m0 1h0m0 1h0m0 2h0m0 5h0m1-10h0m0 1h0m0 1h0m0 2h0m0 3h0m1-10h0m0 2h0m0 2h0m0 1h0m0 2h0m0 1h0m1-10h0m0 3h0m0 1h0m0 1h0m0 1h0m0 3h0m1-8h0m0 2h0m0 3h0m0 2h0m0 2h0m0 4h0m1-13h0m0 1h0m0 3h0m0 2h0m0 2h0m0 6h0m1-17h0m0 3h0m0 1h0m0 1h0m0 5h0m0 3h0m1-13h0m0 5h0m0 2h0m0 2h0m0 1h0m0 3h0m1-13h0m0 1h0m0 5h0m0 1h0m0 3h0m0 2h0m1-11h0m0 3h0m0 1h0m0 2h0m0 1h0m0 1h0m0 1h0m1-7h0m0 2h0m0 2h0m0 8h0m0 1h0m1-14h0m0 4h0m0 1h0m0 4h0m0 1h0m0 3h0m0 3h0m1-13h0m0 2h0m0 1h0m0 2h0m0 1h0m0 3h0m0 2h0m0 1h0m1-14h0m0 3h0m0 2h0m0 1h0m0 2h0m0 3h0m1-11h0m0 2h0m0 1h0m0 3h0m0 2h0m0 6h0m1-13h0m0 2h0m0 2h0m0 1h0m0 1h0m0 1h0m0 5h0m1-11h0m0 1h0m0 2h0m0 2h0m0 1h0m0 1h0m0 1h0m1-11h0m0 1h0m0 3h0m0 2h0m0 2h0m0 1h0m0 7h0m1-14h0m0 2h0m0 2h0m0 2h0m0 1h0m0 1h0m0 1h0m1-13h0m0 4h0m0 2h0m0 4h0m0 2h0m0 1h0m1-9h0m0 1h0m0 5h0m0 2h0m0 2h0m0 1h0m1-13h0m0 3h0m0 1h0m0 1h0m0 1h0m0 1h0m0 3h0m1-16h0m0 4h0m0 1h0m0 1h0m0 6h0m0 2h0m0 1h0m0 1h0m1-13h0m0 1h0m0 7h0m0 1h0m0 2h0m0 8h0m1-15h0m0 5h0m0 1h0m0 2h0m0 2h0m1-13h0m0 6h0m0 1h0m0 1h0m0 2h0m0 3h0m0 5h0m1-20h0m0 6h0m0 1h0m0 2h0m0 3h0m0 4h0m0 1h0m1-14h0m0 5h0m0 3h0m0 1h0m0 2h0m0 4h0m1-14h0m0 1h0m0 3h0m0 1h0m0 6h0m0 3h0m1-16h0m0 1h0m0 4h0m0 4h0m0 1h0m0 1h0m0 4h0m1-16h0m0 5h0m0 3h0m0 1h0m0 3h0m0 2h0m1-10h0m0 5h0m0 1h0m0 2h0m1-11h0m0 1h0m0 4h0m0 3h0m0 2h0m0 1h0m0 1h0m0 1h0m1-13h0m0 9h0m0 3h0m0 1h0m1-17h0m0 7h0m0 2h0m0 8h0m0 3h0m1-12h0m0 2h0m0 2h0m0 2h0m0 1h0m0 1h0m1-7h0m0 3h0m0 1h0m0 1h0m0 1h0m0 1h0m0 1h0m0 5h0m1-16h0m0 1h0m0 4h0m0 1h0m0 2h0m0 1h0m1-11h0m0 3h0m0 1h0m0 1h0m0 1h0m0 3h0m0 1h0m1-9h0m0 2h0m0 1h0m0 2h0m0 3h0m0 1h0m0 1h0m0 2h0m1-8h0m0 1h0m0 2h0m0 4h0m0 2h0m0 1h0m1-10h0m0 2h0m0 3h0m0 2h0m0 1h0m0 1h0m1-16h0m0 9h0m0 1h0m0 2h0m0 1h0m0 1h0m0 1h0m1-9h0m0 4h0m0 1h0m0 2h0m0 1h0m0 2h0m1-15h0m0 4h0m0 3h0m0 3h0m0 4h0m1-11h0m0 1h0m0 2h0m0 3h0m0 4h0m0 2h0m0 2h0m1-14h0m0 1h0m0 3h0m0 2h0m0 1h0m0 5h0m1-17h0m0 1h0m0 2h0m0 1h0m0 4h0m0 3h0m0 1h0m0 4h0m1-8h0m0 2h0m0 1h0m0 5h0m0 1h0m0 1h0m1-14h0m0 3h0m0 2h0m0 2h0m0 1h0m0 3h0m1-13h0m0 5h0m0 4h0m0 2h0m1-7h0m0 2h0m0 2h0m0 5h0m0 5h0m1-13h0m0 1h0m0 2h0m0 1h0m0 1h0m0 3h0m1-13h0m0 4h0m0 5h0m0 1h0m0 1h0m0 5h0m1-11h0m0 1h0m0 2h0m0 2h0m0 5h0m1-15h0m0 2h0m0 2h0m0 1h0m0 3h0m0 2h0m0 2h0m0 3h0m1-14h0m0 2h0m0 2h0m0 2h0m0 4h0m1-8h0m0 2h0m0 1h0m0 4h0m0 2h0m0 5h0m0 2h0m1-15h0m0 2h0m0 1h0m0 1h0m0 1h0m0 6h0m1-10h0m0 2h0m0 1h0m0 3h0m0 2h0m1-16h0m0 6h0m0 2h0m0 2h0m0 1h0m0 2h0m1-7h0m0 2h0m0 1h0m0 1h0m0 1h0m0 4h0m0 3h0m1-15h0m0 1h0m0 9h0m0 2h0m0 1h0m0 1h0m1-9h0m0 3h0m0 1h0m0 1h0m0 4h0m1-10h0m0 2h0m0 4h0m0 3h0m0 1h0m1-14h0m0 3h0m0 1h0m0 2h0m0 1h0m0 1h0m0 10h0m1-14h0m0 1h0m0 3h0m0 1h0m0 5h0m0 3h0m1-17h0m0 1h0m0 1h0m0 1h0m0 1h0m0 1h0m0 5h0m0 6h0m1-14h0m0 1h0m0 3h0m0 2h0m0 1h0m0 4h0m0 4h0m1-10h0m0 1h0m0 3h0m0 1h0m0 1h0m0 2h0m1-14h0m0 3h0m0 5h0m0 1h0m0 1h0m0 1h0m1-9h0m0 1h0m0 1h0m0 3h0m0 2h0m1-12h0m0 2h0m0 1h0m0 3h0m0 2h0m0 1h0m0 4h0m0 2h0m1-9h0m0 2h0m0 3h0m0 2h0m0 2h0m0 1h0m1-11h0m0 1h0m0 3h0m0 1h0m0 2h0m0 1h0m0 2h0m0 1h0m1-11h0m0 1h0m0 5h0m0 1h0m0 2h0m0 3h0m1-8h0m0 1h0m0 1h0m0 1h0m0 1h0m1-10h0m0 3h0m0 1h0m0 1h0m0 3h0m0 2h0m0 1h0m1-15h0m0 5h0m0 1h0m0 2h0m0 2h0m0 1h0m0 5h0m1-10h0m0 2h0m0 3h0m0 4h0m0 3h0m0 5h0m1-19h0m0 3h0m0 3h0m0 1h0m0 2h0m0 2h0m1-10h0m0 3h0m0 2h0m0 2h0m0 1h0m0 2h0m0 2h0m1-12h0m0 1h0m0 5h0m0 2h0m0 1h0m0 1h0m0 1h0m0 1h0m1-12h0m0 6h0m0 1h0m0 1h0m0 3h0m0 5h0m1-16h0m0 1h0m0 4h0m0 1h0m0 2h0m0 2h0m0 3h0m0 3h0m1-14h0m0 2h0m0 2h0m0 1h0m0 1h0m0 1h0m0 1h0m1-10h0m0 3h0m0 3h0m0 1h0m0 3h0m1-7h0m0 1h0m0 2h0m0 1h0m0 4h0m0 1h0m1-14h0m0 5h0m0 2h0m0 2h0m0 1h0m0 1h0m1-9h0m0 1h0m0 3h0m0 1h0m0 6h0m0 1h0m1-17h0m0 2h0m0 7h0m0 2h0m0 3h0m1-6h0m0 5h0m0 1h0m0 2h0m0 3h0m1-14h0m0 4h0m0 1h0m0 1h0m0 2h0m0 1h0m0 1h0m1-7h0m0 1h0m0 3h0m0 1h0m0 3h0m0 2h0m1-14h0m0 3h0m0 1h0m0 1h0m0 1h0m0 1h0m0 1h0m1-6h0m0 2h0m0 1h0m0 2h0m0 1h0m0 1h0m0 1h0m1-6h0m0 1h0m0 2h0m0 2h0m0 2h0m1-9h0m0 6h0m0 1h0m0 2h0m0 1h0m0 1h0m0 1h0m1-12h0m0 2h0m0 2h0m0 1h0m0 5h0m0 1h0m0 4h0m1-17h0m0 1h0m0 2h0m0 4h0m0 1h0m0 7h0m1-15h0m0 2h0m0 1h0m0 2h0m0 6h0m0 2h0m1-16h0m0 5h0m0 3h0m0 4h0m0 5h0m0 1h0m1-10h0m0 2h0m0 1h0m0 1h0m0 3h0m0 3h0m1-11h0m0 1h0m0 1h0m0 4h0m0 1h0m0 7h0m1-17h0m0 2h0m0 1h0m0 4h0m0 1h0m0 2h0m0 5h0m1-11h0m0 1h0m0 2h0m0 1h0m0 1h0m0 2h0m1-12h0m0 2h0m0 3h0m0 2h0m0 7h0m0 3h0m1-11h0m0 1h0m0 3h0m0 1h0m0 1h0m1-11h0m0 3h0m0 4h0m0 4h0m0 1h0m0 1h0m0 2h0m1-10h0m0 1h0m0 3h0m0 2h0m0 2h0m1-14h0m0 2h0m0 5h0m0 1h0m0 4h0m0 1h0m1-11h0m0 1h0m0 4h0m0 4h0m0 2h0m0 1h0m0 1h0m1-14h0m0 5h0m0 2h0m0 2h0m0 1h0m0 3h0m1-8h0m0 3h0m0 4h0m0 1h0m0 3h0m1-13h0m0 3h0m0 3h0m0 1h0m0 6h0m1-13h0m0 2h0m0 1h0m0 3h0m0 1h0m1-3h0m0 2h0m0 1h0m0 3h0m0 3h0m1-17h0m0 7h0m0 1h0m0 3h0m0 2h0m0 5h0m1-17h0m0 3h0m0 1h0m0 1h0m0 2h0m0 4h0m0 2h0m1-9h0m0 2h0m0 3h0m0 1h0m0 1h0m0 5h0m1-13h0m0 3h0m0 1h0m0 3h0m0 1h0m0 1h0m0 2h0m1-16h0m0 6h0m0 1h0m0 1h0m0 1h0m0 2h0m0 1h0m0 5h0m1-5h0m0 2h0m0 4h0m1-13h0m0 2h0m0 1h0m0 3h0m0 2h0m0 3h0m0 1h0m1-11h0m0 1h0m0 1h0m0 2h0m0 1h0m0 6h0m0 2h0m1-13h0m0 3h0m0 1h0m0 1h0m0 2h0m1-14h0m0 6h0m0 3h0m0 1h0m0 1h0m0 1h0m0 2h0m1-8h0m0 2h0m0 1h0m0 1h0m0 2h0m0 2h0m1-8h0m0 1h0m0 1h0m0 5h0m0 1h0m0 3h0m1-11h0m0 4h0m0 2h0m0 4h0m1-7h0m0 1h0m0 1h0m0 1h0m0 1h0m0 2h0m1-10h0m0 2h0m0 2h0m0 1h0m0 4h0m0 5h0m0 1h0m1-19h0m0 7h0m0 3h0m0 5h0m1-15h0m0 7h0m0 1h0m0 3h0m0 3h0m0 5h0m1-14h0m0 1h0m0 3h0m0 1h0m0 1h0m0 4h0m0 2h0m1-13h0m0 1h0m0 4h0m0 2h0m0 1h0m0 1h0m0 2h0m1-13h0m0 3h0m0 4h0m0 1h0m0 2h0m0 1h0m0 3h0m1-16h0m0 5h0m0 1h0m0 3h0m0 1h0m0 3h0m0 5h0m1-14h0m0 4h0m0 3h0m0 2h0m0 1h0m0 2h0m0 2h0m1-14h0m0 2h0m0 1h0m0 2h0m0 2h0m0 1h0m1-10h0m0 5h0m0 2h0m0 1h0m0 1h0m1-4h0m0 2h0m0 2h0m0 1h0m0 2h0m0 3h0m1-18h0m0 4h0m0 2h0m0 1h0m0 2h0m0 10h0m1-14h0m0 4h0m0 1h0m0 3h0m0 1h0m0 5h0m1-12h0m0 1h0m0 2h0m0 1h0m0 2h0m0 2h0m1-9h0m0 3h0m0 2h0m0 5h0m1-10h0m0 2h0m0 2h0m0 2h0m0 1h0m0 6h0m1-17h0m0 2h0m0 1h0m0 1h0m0 4h0m0 3h0m0 1h0m0 1h0m1-10h0m0 4h0m0 1h0m0 2h0m0 3h0m1-11h0m0 3h0m0 3h0m0 1h0m0 3h0m0 1h0m0 2h0m1-15h0m0 4h0m0 3h0m0 3h0m0 1h0m1-14h0m0 2h0m0 4h0m0 2h0m0 3h0m0 2h0m0 3h0m1-6h0m0 1h0m0 1h0m0 1h0m0 4h0m0 3h0m1-15h0m0 3h0m0 1h0m0 1h0m0 1h0m0 1h0m1-6h0m0 5h0m0 1h0m0 1h0m0 1h0m1-8h0m0 2h0m0 1h0m0 4h0m0 3h0m0 1h0m0 5h0m1-17h0m0 7h0m0 1h0m0 1h0m0 7h0m1-14h0m0 3h0m0 3h0m0 1h0m0 1h0m0 1h0m1-8h0m0 2h0m0 1h0m0 2h0m0 2h0m0 2h0m1-10h0m0 2h0m0 4h0m0 1h0m0 1h0m0 1h0m0 5h0m1-20h0m0 2h0m0 5h0m0 1h0m0 2h0m0 1h0m0 7h0m1-8h0m0 1h0m0 2h0m0 1h0m0 3h0m1-17h0m0 6h0m0 2h0m0 4h0m0 1h0m0 2h0m0 3h0m1-17h0m0 1h0m0 3h0m0 1h0m0 3h0m0 1h0m0 4h0m1-14h0m0 6h0m0 1h0m0 1h0m0 3h0m0 3h0m0 2h0m1-11h0m0 1h0m0 3h0m0 2h0m0 2h0m1-9h0m0 3h0m0 1h0m0 3h0m0 2h0m1-13h0m0 2h0m0 4h0m0 2h0m0 1h0m0 1h0m0 1h0m0 2h0m1-8h0m0 2h0m0 3h0m0 1h0m0 1h0m0 1h0m0 3h0m1-9h0m0 1h0m0 2h0m0 2h0m0 1h0m0 3h0m1-16h0m0 8h0m0 1h0m0 1h0m0 1h0m0 1h0m0 1h0m0 1h0m1-8h0m0 4h0m0 1h0m0 1h0m0 6h0m0 1h0m1-11h0m0 1h0m0 2h0m0 1h0m0 1h0m0 1h0m1-4h0m0 2h0m0 2h0m0 2h0m0 1h0m1-11h0m0 4h0m0 1h0m0 1h0m0 2h0m0 1h0m1-11h0m0 1h0m0 3h0m0 1h0m0 1h0m0 2h0m0 2h0m1-10h0m0 5h0m0 3h0m0 1h0m0 2h0m0 1h0m1-13h0m0 5h0m0 3h0m0 1h0m0 1h0m0 5h0m1-12h0m0 2h0m0 1h0m0 1h0m0 8h0m1-11h0m0 1h0m0 3h0m0 1h0m0 2h0m0 2h0m1-8h0m0 2h0m0 2h0m0 2h0m0 1h0m0 1h0m0 3h0m1-11h0m0 3h0m0 1h0m0 2h0m0 4h0m0 1h0m1-12h0m0 2h0m0 2h0m0 4h0m1-9h0m0 4h0m0 1h0m0 1h0m0 3h0m0 2h0m1-16h0m0 6h0m0 2h0m0 1h0m0 1h0m0 1h0m0 1h0m0 1h0m1-8h0m0 2h0m0 4h0m0 1h0m0 1h0m0 2h0m1-15h0m0 5h0m0 1h0m0 1h0m0 2h0m0 9h0m0 1h0m1-17h0m0 2h0m0 2h0m0 3h0m0 1h0m0 2h0m1-8h0m0 2h0m0 1h0m0 1h0m0 4h0m1-8h0m0 1h0m0 2h0m0 1h0m0 1h0m0 5h0m1-12h0m0 2h0m0 1h0m0 3h0m0 1h0m0 2h0m0 1h0m1-8h0m0 1h0m0 2h0m0 1h0m0 6h0m0 5h0m1-15h0m0 3h0m0 3h0m0 2h0m0 5h0m0 1h0m1-14h0m0 1h0m0 2h0m0 1h0m0 2h0m0 1h0m0 2h0m1-11h0m0 2h0m0 2h0m0 2h0m0 3h0m0 3h0m0 3h0m1-13h0m0 2h0m0 1h0m0 3h0m0 2h0m0 3h0m1-14h0m0 4h0m0 6h0m0 2h0m0 2h0m0 1h0m1-8h0m0 1h0m0 1h0m0 1h0m0 3h0m0 4h0m1-15h0m0 5h0m0 3h0m0 1h0m0 4h0m1-15h0m0 3h0m0 1h0m0 2h0m0 3h0m0 2h0m0 1h0m0 2h0m1-14h0m0 6h0m0 2h0m0 1h0m0 3h0m1-10h0m0 2h0m0 1h0m0 1h0m0 3h0m1-8h0m0 2h0m0 2h0m0 3h0m0 4h0m0 3h0m1-19h0m0 8h0m0 2h0m0 4h0m0 1h0m0 1h0m0 3h0m0 1h0m1-16h0m0 5h0m0 2h0m0 1h0m0 2h0m1-8h0m0 3h0m0 2h0m0 1h0m0 2h0m1-5h0m0 1h0m0 1h0m0 1h0m0 1h0m0 3h0m0 2h0m1-8h0m0 5h0m0 3h0m0 1h0m0 1h0m0 3h0m1-18h0m0 1h0m0 1h0m0 1h0m0 7h0m0 2h0m1-16h0m0 11h0m0 1h0m0 3h0m0 2h0m0 4h0m1-12h0m0 2h0m0 1h0m0 1h0m0 1h0m0 1h0m1-9h0m0 1h0m0 1h0m0 1h0m0 2h0m0 1h0m0 2h0m1-8h0m0 2h0m0 3h0m0 1h0m0 1h0m0 1h0m1-8h0m0 3h0m0 4h0m0 1h0m0 1h0m0 3h0m1-14h0m0 3h0m0 2h0m0 1h0m0 1h0m0 4h0m1-8h0m0 1h0m0 2h0m0 3h0m0 2h0m0 2h0m1-10h0m0 1h0m0 2h0m0 2h0m0 1h0m0 3h0m0 1h0m1-10h0m0 2h0m0 1h0m0 3h0m0 1h0m0 2h0m1-11h0m0 5h0m0 1h0m0 3h0m0 6h0m1-12h0m0 1h0m0 2h0m0 2h0m0 5h0m1-13h0m0 1h0m0 1h0m0 1h0m0 4h0m0 1h0m0 4h0m0 2h0m1-19h0m0 7h0m0 2h0m0 1h0m0 1h0m0 5h0m1-12h0m0 4h0m0 1h0m0 2h0m0 2h0m0 1h0m0 5h0m1-15h0m0 3h0m0 1h0m0 2h0m0 6h0m0 2h0m0 2h0m1-12h0m0 2h0m0 1h0m0 1h0m0 1h0m0 1h0m0 7h0m1-17h0m0 6h0m0 1h0m0 1h0m0 1h0m0 1h0m0 4h0m1-14h0m0 5h0m0 1h0m0 1h0m0 3h0m0 2h0m0 1h0m1-15h0m0 1h0m0 2h0m0 2h0m0 4h0m0 1h0m0 1h0m1-8h0m0 4h0m0 1h0m0 4h0m0 1h0m0 1h0m0 3h0m1-16h0m0 7h0m0 4h0m0 1h0m0 1h0m0 1h0m1-15h0m0 2h0m0 1h0m0 1h0m0 3h0m0 1h0m0 1h0m1-9h0m0 1h0m0 5h0m0 2h0m0 1h0m0 6h0m0 4h0m1-16h0m0 3h0m0 1h0m0 5h0m0 1h0m0 1h0m0 5h0m1-17h0m0 2h0m0 4h0m0 1h0m0 1h0m0 4h0m0 2h0m1-9h0m0 2h0m0 1h0m0 9h0m1-14h0m0 2h0m0 1h0m0 2h0m0 2h0m0 5h0m1-12h0m0 3h0m0 2h0m0 2h0m0 1h0m0 1h0m1-8h0m0 3h0m0 2h0m0 2h0m1-9h0m0 2h0m0 3h0m0 3h0m0 3h0m1-13h0m0 6h0m0 1h0m0 2h0m0 2h0m0 3h0m0 1h0m1-12h0m0 1h0m0 2h0m0 1h0m0 1h0m0 1h0m0 3h0m1-16h0m0 2h0m0 7h0m0 5h0m0 3h0m0 1h0m1-10h0m0 3h0m0 2h0m1-5h0m0 2h0m0 1h0m0 1h0m0 1h0m0 2h0m0 2h0m1-13h0m0 3h0m0 3h0m0 3h0m0 3h0m0 4h0m1-19h0m0 6h0m0 1h0m0 2h0m0 4h0m0 2h0m1-10h0m0 1h0m0 1h0m0 4h0m0 3h0m0 1h0m1-11h0m0 4h0m0 3h0m0 1h0m0 4h0m0 2h0m1-15h0m0 1h0m0 6h0m0 1h0m0 6h0m0 1h0m1-12h0m0 1h0m0 3h0m0 2h0m0 1h0m0 2h0m1-11h0m0 4h0m0 1h0m0 1h0m0 1h0m0 1h0m0 1h0m0 7h0m1-13h0m0 4h0m0 3h0m0 1h0m1-5h0m0 1h0m0 2h0m0 1h0m0 1h0m0 2h0m1-13h0m0 1h0m0 1h0m0 1h0m0 1h0m0 2h0m0 3h0m1-9h0m0 1h0m0 4h0m0 2h0m0 7h0m1-16h0m0 5h0m0 3h0m0 2h0m0 2h0m1-8h0m0 3h0m0 1h0m0 2h0m0 1h0m0 1h0m0 1h0m0 1h0m1-9h0m0 1h0m0 2h0m0 2h0m0 2h0m1-6h0m0 2h0m0 1h0m0 2h0m0 2h0m0 1h0m0 3h0m1-20h0m0 10h0m0 1h0m0 1h0m0 4h0m0 5h0m1-19h0m0 6h0m0 2h0m0 1h0m0 1h0m0 2h0m0 1h0m0 1h0m1-14h0m0 7h0m0 1h0m0 2h0m0 2h0m1-10h0m0 2h0m0 3h0m0 2h0m0 1h0m0 4h0m0 2h0m1-12h0m0 2h0m0 2h0m0 3h0m0 2h0m0 2h0m0 2h0m1-13h0m0 2h0m0 1h0m0 1h0m0 2h0m0 1h0m1-6h0m0 2h0m0 1h0m0 2h0m0 1h0m0 4h0m0 3h0m1-20h0m0 11h0m0 2h0m0 1h0m0 2h0m0 1h0m1-8h0m0 1h0m0 1h0m0 2h0m0 3h0m0 1h0m0 1h0m1-19h0m0 9h0m0 1h0m0 2h0m0 1h0m0 1h0m0 2h0m0 1h0m1-10h0m0 1h0m0 2h0m0 2h0m0 1h0m0 2h0m0 2h0m1-13h0m0 8h0m0 1h0m0 1h0m0 4h0m1-15h0m0 5h0m0 1h0m0 1h0m0 1h0m0 3h0m1-8h0m0 1h0m0 1h0m0 2h0m0 3h0m0 3h0m0 1h0m1-11h0m0 1h0m0 2h0m0 2h0m0 1h0m0 3h0m0 2h0m1-14h0m0 6h0m0 3h0m0 1h0m0 1h0m0 2h0m0 2h0m1-11h0m0 1h0m0 3h0m0 2h0m0 1h0m0 1h0m0 5h0m1-12h0m0 1h0m0 2h0m0 1h0m1-5h0m0 1h0m0 4h0m0 2h0m0 1h0m0 3h0m0 1h0m1-14h0m0 6h0m0 2h0m0 2h0m0 1h0m0 1h0m0 2h0m1-13h0m0 1h0m0 3h0m0 1h0m0 4h0m0 6h0m1-14h0m0 1h0m0 3h0m0 3h0m0 2h0m0 2h0m0 1h0m1-16h0m0 1h0m0 2h0m0 4h0m0 2h0m0 3h0m0 5h0m1-11h0m0 3h0m0 2h0m0 2h0m0 3h0m0 1h0m0 2h0m1-12h0m0 2h0m0 1h0m0 1h0m0 2h0m1-10h0m0 3h0m0 2h0m0 4h0m0 1h0m0 2h0m1-13h0m0 2h0m0 3h0m0 3h0m0 2h0m0 1h0m1-6h0m0 1h0m0 2h0m0 2h0m0 1h0m0 4h0m1-12h0m0 1h0m0 1h0m0 1h0m0 1h0m0 5h0m1-12h0m0 2h0m0 1h0m0 3h0m0 2h0m0 7h0m1-12h0m0 4h0m0 1h0m0 1h0m0 1h0m0 3h0m1-14h0m0 3h0m0 1h0m0 2h0m0 2h0m0 3h0m0 3h0m1-12h0m0 1h0m0 5h0m0 1h0m0 2h0m0 2h0m1-8h0m0 2h0m0 1h0m0 2h0m0 5h0m1-17h0m0 6h0m0 3h0m0 1h0m0 4h0m0 4h0m0 2h0m1-12h0m0 1h0m0 1h0m0 1h0m0 1h0m0 2h0m0 1h0m1-10h0m0 3h0m0 2h0m0 2h0m0 2h0m0 7h0m1-16h0m0 1h0m0 2h0m0 2h0m0 2h0m0 2h0m0 1h0m0 1h0m1-7h0m0 1h0m0 1h0m0 2h0m0 2h0m1-13h0m0 4h0m0 4h0m0 7h0m0 1h0m1-12h0m0 1h0m0 2h0m0 1h0m0 3h0m0 1h0m1-10h0m0 10h0m0 3h0m0 2h0m1-15h0m0 5h0m0 1h0m0 2h0m0 1h0m0 1h0m0 3h0m1-14h0m0 4h0m0 1h0m0 1h0m0 1h0m0 1h0m0 6h0m1-14h0m0 2h0m0 3h0m0 2h0m0 7h0m1-12h0m0 4h0m0 2h0m0 2h0m0 1h0m0 3h0m0 1h0m1-13h0m0 4h0m0 4h0m0 1h0m0 6h0m1-19h0m0 3h0m0 1h0m0 4h0m0 1h0m0 2h0m0 1h0m1-8h0m0 3h0m0 1h0m0 7h0m1-13h0m0 5h0m0 1h0m0 3h0m0 1h0m0 3h0m1-8h0m0 3h0m0 1h0m0 2h0m0 1h0m0 4h0m1-15h0m0 4h0m0 1h0m0 1h0m0 2h0m0 1h0m1-10h0m0 4h0m0 2h0m0 4h0m0 1h0m0 1h0m0 1h0m0 3h0m1-10h0m0 1h0m0 1h0m0 1h0m0 6h0m1-9h0m0 2h0m0 2h0m0 6h0m1-18h0m0 6h0m0 2h0m0 2h0m0 3h0m0 1h0m0 1h0m1-14h0m0 7h0m0 1h0m0 1h0m0 2h0m0 2h0m0 1h0m1-9h0m0 1h0m0 1h0m0 4h0m0 1h0m0 7h0m1-19h0m0 6h0m0 1h0m0 1h0m0 1h0m0 1h0m1-11h0m0 5h0m0 1h0m0 5h0m0 1h0m0 1h0m0 2h0m1-9h0m0 2h0m0 1h0m0 1h0m0 3h0m1-12h0m0 4h0m0 1h0m0 2h0m0 3h0m0 1h0m0 2h0m1-8h0m0 2h0m0 1h0m0 1h0m0 7h0m0 1h0m1-10h0m0 2h0m0 1h0m0 1h0m0 1h0m0 5h0m1-12h0m0 1h0m0 1h0m0 2h0m0 1h0m1-9h0m0 2h0m0 5h0m0 1h0m0 1h0m0 4h0m0 2h0m1-9h0m0 2h0m0 3h0m0 2h0m0 1h0m0 1h0m1-17h0m0 5h0m0 2h0m0 1h0m0 1h0m0 5h0m0 3h0m1-17h0m0 6h0m0 2h0m0 1h0m0 3h0m0 3h0m1-17h0m0 9h0m0 1h0m0 3h0m0 2h0m0 2h0m1-10h0m0 2h0m0 2h0m0 1h0m0 4h0m0 1h0m1-7h0m0 8h0m0 2h0m1-14h0m0 5h0m0 1h0m0 1h0m0 1h0m0 2h0m0 4h0m1-18h0m0 1h0m0 4h0m0 1h0m0 1h0m0 1h0m0 6h0m1-6h0m0 3h0m0 1h0m0 5h0m1-18h0m0 5h0m0 2h0m0 2h0m0 1h0m0 3h0m0 3h0m1-8h0m0 1h0m0 1h0m0 3h0m0 4h0m1-14h0m0 4h0m0 4h0m0 3h0m0 1h0m1-12h0m0 1h0m0 2h0m0 1h0m0 2h0m0 3h0m0 1h0m1-12h0m0 4h0m0 3h0m0 2h0m0 8h0m0 3h0m1-14h0m0 4h0m0 2h0m0 2h0m1-7h0m0 2h0m0 1h0m0 1h0m0 4h0m0 4h0m1-13h0m0 1h0m0 1h0m0 1h0m0 1h0m0 1h0m0 6h0m1-15h0m0 3h0m0 2h0m0 2h0m0 2h0m0 1h0m1-10h0m0 3h0m0 2h0m0 2h0m0 1h0m0 2h0m1-7h0m0 1h0m0 1h0m0 2h0m0 1h0m0 2h0m0 3h0m0 2h0m1-20h0m0 8h0m0 3h0m0 2h0m0 2h0m0 2h0m1-17h0m0 8h0m0 2h0m0 2h0m0 2h0m0 7h0m1-16h0m0 2h0m0 2h0m0 2h0m0 2h0m0 2h0m0 2h0m1-13h0m0 5h0m0 1h0m0 2h0m0 1h0m0 1h0m1-10h0m0 1h0m0 1h0m0 2h0m0 1h0m0 4h0m0 2h0m0 3h0m1-12h0m0 3h0m0 1h0m0 1h0m0 1h0m0 1h0m1-8h0m0 4h0m0 1h0m0 1h0m0 8h0m0 2h0m1-16h0m0 1h0m0 5h0m0 1h0m0 1h0m0 2h0m0 8h0m1-16h0m0 2h0m0 1h0m0 2h0m0 1h0m0 2h0m1-6h0m0 1h0m0 1h0m0 2h0m0 1h0m1-7h0m0 2h0m0 2h0m0 4h0m0 3h0m1-12h0m0 4h0m0 1h0m0 1h0m0 1h0m0 3h0m0 3h0m1-13h0m0 2h0m0 3h0m0 2h0m0 1h0m0 2h0m0 1h0m1-13h0m0 4h0m0 2h0m0 1h0m0 9h0m1-15h0m0 7h0m0 1h0m0 2h0m1-8h0m0 1h0m0 2h0m0 1h0m0 3h0m0 1h0m0 2h0m0 2h0m1-10h0m0 1h0m0 1h0m0 1h0m0 1h0m0 4h0m1-12h0m0 4h0m0 5h0m0 2h0m0 1h0m0 1h0m0 3h0m1-11h0m0 1h0m0 3h0m0 1h0m0 2h0m0 1h0m0 5h0m1-14h0m0 1h0m0 1h0m0 2h0m0 6h0m0 1h0m0 1h0m1-10h0m0 2h0m0 2h0m0 1h0m0 3h0m0 1h0m1-13h0m0 3h0m0 2h0m0 2h0m0 1h0m0 2h0m1-12h0m0 7h0m0 1h0m0 2h0m0 2h0m0 3h0m1-14h0m0 3h0m0 1h0m0 3h0m0 1h0m0 4h0m1-8h0m0 1h0m0 2h0m0 2h0m0 8h0m1-13h0m0 1h0m0 3h0m0 3h0m0 1h0m0 1h0m1-11h0m0 4h0m0 2h0m0 1h0m0 2h0m0 4h0m1-17h0m0 2h0m0 6h0m0 4h0m0 2h0m0 2h0m1-12h0m0 2h0m0 3h0m0 1h0m0 2h0m0 1h0m1-8h0m0 2h0m0 1h0m0 1h0m0 1h0m0 1h0m0 7h0m1-16h0m0 1h0m0 4h0m0 6h0m0 1h0m0 2h0m1-12h0m0 1h0m0 1h0m0 5h0m0 2h0m0 2h0m0 4h0m1-14h0m0 1h0m0 2h0m0 3h0m0 1h0m0 2h0m0 2h0m1-13h0m0 2h0m0 2h0m0 1h0m0 3h0m0 3h0m1-16h0m0 5h0m0 4h0m0 1h0m0 1h0m1-10h0m0 1h0m0 4h0m0 2h0m0 1h0m0 2h0m0 6h0m1-14h0m0 5h0m0 1h0m0 3h0m0 2h0m0 1h0m0 6h0m1-13h0m0 2h0m0 4h0m0 1h0m0 1h0m1-8h0m0 3h0m0 2h0m0 1h0m0 1h0m0 1h0m1-8h0m0 3h0m0 2h0m0 1h0m0 1h0m1-14h0m0 4h0m0 3h0m0 1h0m0 2h0m0 4h0m1-12h0m0 2h0m0 2h0m0 2h0m0 5h0m0 1h0m0 2h0m1-16h0m0 9h0m0 1h0m0 1h0m0 1h0m0 2h0m0 6h0m1-13h0m0 2h0m0 2h0m0 3h0m0 5h0m1-16h0m0 1h0m0 5h0m0 1h0m0 1h0m0 2h0m1-9h0m0 2h0m0 1h0m0 4h0m0 2h0m0 1h0m1-10h0m0 5h0m0 2h0m0 3h0m0 3h0m0 1h0m0 1h0m1-9h0m0 1h0m0 1h0m0 1h0m0 2h0m0 1h0m1-12h0m0 5h0m0 1h0m0 1h0m0 1h0m0 1h0m0 2h0m1-10h0m0 5h0m0 4h0m0 1h0m0 3h0m0 2h0m1-20h0m0 5h0m0 2h0m0 2h0m1-4h0m0 2h0m0 1h0m0 1h0m0 2h0m0 2h0m0 2h0m1-10h0m0 3h0m0 2h0m0 3h0m0 6h0m1-17h0m0 2h0m0 3h0m0 3h0m0 2h0m0 1h0m0 3h0m1-12h0m0 3h0m0 4h0m0 1h0m0 6h0m0 2h0m1-16h0m0 4h0m0 3h0m0 1h0m0 4h0m0 2h0m1-15h0m0 1h0m0 3h0m0 2h0m0 4h0m0 5h0m1-16h0m0 4h0m0 1h0m0 3h0m0 3h0m1-11h0m0 2h0m0 3h0m0 1h0m0 2h0m0 2h0m0 3h0m1-14h0m0 3h0m0 1h0m0 5h0m0 2h0m1-12h0m0 3h0m0 1h0m0 3h0m0 3h0m0 1h0m1-9h0m0 3h0m0 3h0m0 1h0m0 3h0m0 4h0m1-7h0m0 1h0m0 2h0m0 1h0m0 3h0m0 1h0m0 1h0m1-20h0m0 5h0m0 1h0m0 1h0m0 5h0m0 2h0m0 8h0m1-18h0m0 7h0m0 2h0m0 1h0m0 3h0m0 3h0m1-19h0m0 5h0m0 3h0m0 2h0m0 3h0m1-4h0m0 1h0m0 1h0m0 1h0m0 1h0m0 1h0m0 2h0m1-11h0m0 4h0m0 2h0m0 2h0m0 1h0m0 1h0m1-7h0m0 1h0m0 2h0m0 1h0m0 2h0m0 2h0m0 1h0m1-10h0m0 3h0m0 1h0m0 3h0m0 2h0m0 3h0m1-12h0m0 4h0m0 1h0m0 4h0m0 4h0m1-20h0m0 7h0m0 4h0m0 2h0m0 1h0m0 1h0m0 1h0m1-11h0m0 1h0m0 2h0m0 1h0m0 1h0m0 2h0m0 2h0m0 1h0m1-9h0m0 2h0m0 2h0m0 1h0m0 5h0m1-9h0m0 4h0m0 1h0m0 2h0m0 2h0m0 3h0m1-14h0m0 1h0m0 1h0m0 2h0m0 2h0m0 1h0m0 1h0m1-5h0m0 2h0m0 4h0m0 2h0m0 1h0m0 1h0m1-17h0m0 8h0m0 1h0m0 1h0m0 1h0m1-6h0m0 3h0m0 3h0m0 2h0m0 1h0m0 3h0m1-15h0m0 2h0m0 2h0m0 1h0m0 7h0m0 1h0m1-10h0m0 1h0m0 1h0m0 1h0m0 2h0m0 4h0m1-9h0m0 3h0m0 1h0m0 2h0m0 3h0m0 2h0m1-7h0m0 1h0m0 1h0m0 2h0m0 1h0m0 1h0m0 2h0m1-14h0m0 2h0m0 4h0m0 1h0m0 3h0m0 1h0m0 1h0m1-9h0m0 1h0m0 6h0m0 1h0m0 1h0m0 1h0m0 3h0m1-19h0m0 3h0m0 4h0m0 3h0m0 2h0m0 4h0m1-8h0m0 1h0m0 3h0m0 1h0m0 1h0m0 6h0m1-13h0m0 1h0m0 2h0m0 1h0m0 2h0m1-9h0m0 1h0m0 3h0m0 2h0m0 6h0m1-12h0m0 2h0m0 3h0m0 1h0m0 7h0m1-13h0m0 1h0m0 3h0m0 3h0m0 3h0m0 1h0m0 4h0m1-18h0m0 5h0m0 1h0m0 2h0m0 3h0m0 2h0m0 1h0m1-10h0m0 2h0m0 3h0m0 1h0m0 2h0m0 1h0m0 2h0m1-14h0m0 3h0m0 4h0m0 1h0m0 4h0m0 1h0m1-11h0m0 4h0m0 2h0m0 1h0m0 3h0m0 5h0m1-15h0m0 4h0m0 2h0m0 3h0m0 1h0m0 2h0m1-14h0m0 5h0m0 2h0m0 1h0m0 1h0m0 5h0m0 4h0m1-21h0m0 2h0m0 6h0m0 1h0m0 2h0m0 1h0m1-4h0m0 1h0m0 2h0m0 1h0m0 1h0m0 1h0m0 1h0m0 1h0m1-13h0m0 1h0m0 3h0m0 5h0m0 3h0m0 2h0m1-13h0m0 4h0m0 1h0m0 1h0m0 2h0m0 3h0m0 1h0m1-13h0m0 1h0m0 3h0m0 3h0m0 3h0m0 2h0m0 3h0m1-10h0m0 1h0m0 4h0m0 3h0m0 1h0m0 1h0m0 2h0m1-16h0m0 1h0m0 4h0m0 1h0m0 3h0m0 3h0m1-7h0m0 1h0m0 2h0m0 1h0m0 2h0m0 5h0m1-13h0m0 1h0m0 2h0m0 1h0m0 3h0m0 1h0m0 1h0m1-9h0m0 2h0m0 1h0m0 1h0m0 1h0m0 5h0m1-7h0m0 1h0m0 1h0m0 4h0m1-11h0m0 4h0m0 1h0m0 2h0m0 1h0m0 4h0m0 3h0m1-19h0m0 2h0m0 9h0m0 1h0m0 3h0m0 2h0m0 1h0m1-13h0m0 3h0m0 4h0m0 2h0m0 3h0m1-11h0m0 2h0m0 1h0m0 1h0m0 2h0m0 1h0m1-6h0m0 3h0m0 2h0m0 1h0m0 1h0m0 1h0m1-10h0m0 1h0m0 8h0m1-12h0m0 1h0m0 5h0m0 1h0m0 3h0m0 2h0m1-8h0m0 1h0m0 1h0m0 4h0m0 1h0m0 1h0m1-10h0m0 4h0m0 1h0m0 1h0m0 1h0m0 1h0m0 4h0m1-17h0m0 2h0m0 2h0m0 1h0m0 1h0m0 1h0m0 5h0m1-6h0m0 2h0m0 3h0m0 3h0m0 4h0m0 1h0m1-12h0m0 3h0m0 1h0m0 3h0m0 1h0m0 1h0m0 3h0m1-13h0m0 2h0m0 1h0m0 2h0m0 1h0m0 4h0m1-9h0m0 3h0m0 1h0m0 2h0m0 5h0m0 1h0m1-18h0m0 7h0m0 1h0m0 5h0m1-12h0m0 2h0m0 1h0m0 2h0m0 4h0m0 1h0m0 6h0m1-13h0m0 2h0m0 1h0m0 6h0m1-9h0m0 1h0m0 1h0m0 1h0m0 4h0m1-4h0m0 2h0m0 1h0m0 1h0m0 2h0m0 3h0m0 1h0m1-10h0m0 1h0m0 1h0m0 1h0m0 4h0m0 3h0m1-12h0m0 5h0m0 2h0m0 3h0m0 3h0m1-13h0m0 1h0m0 4h0m0 3h0m0 3h0m1-15h0m0 3h0m0 1h0m0 2h0m0 2h0m0 1h0m0 3h0m1-9h0m0 1h0m0 3h0m0 1h0m0 3h0m0 1h0m0 6h0m1-12h0m0 1h0m0 1h0m0 1h0m0 1h0m0 3h0m1-12h0m0 1h0m0 1h0m0 1h0m0 2h0m0 1h0m1-3h0m0 1h0m0 2h0m0 1h0m0 1h0m0 4h0m0 1h0m0 2h0m1-11h0m0 1h0m0 2h0m0 3h0m0 1h0m0 1h0m1-11h0m0 5h0m0 1h0m0 4h0m0 1h0m0 1h0m1-7h0m0 1h0m0 4h0m0 1h0m0 1h0m0 1h0m0 1h0m1-16h0m0 4h0m0 1h0m0 2h0m0 1h0m0 4h0m1-11h0m0 2h0m0 3h0m0 2h0m0 3h0m0 1h0m0 1h0m0 4h0m1-11h0m0 1h0m0 1h0m0 2h0m0 1h0m0 6h0m1-16h0m0 4h0m0 1h0m0 2h0m0 2h0m0 5h0m1-19h0m0 8h0m0 2h0m0 2h0m0 5h0m0 2h0m1-13h0m0 3h0m0 2h0m0 1h0m0 5h0m0 3h0m0 2h0m1-14h0m0 1h0m0 2h0m0 4h0m0 1h0m0 1h0m0 2h0m1-9h0m0 2h0m0 1h0m0 3h0m0 1h0m0 2h0m1-11h0m0 3h0m0 1h0m0 2h0m0 3h0m0 1h0m1-8h0m0 1h0m0 3h0m0 3h0m1-11h0m0 2h0m0 1h0m0 1h0m0 1h0m0 2h0m0 2h0m1-10h0m0 3h0m0 1h0m0 4h0m0 2h0m0 2h0m0 3h0m1-12h0m0 2h0m0 1h0m0 1h0m0 1h0m1-4h0m0 1h0m0 2h0m0 1h0m0 2h0m0 2h0m0 4h0m1-21h0m0 3h0m0 7h0m0 1h0m0 2h0m0 2h0m1-7h0m0 4h0m0 2h0m0 1h0m0 1h0m0 1h0m0 1h0m1-15h0m0 6h0m0 2h0m0 1h0m0 1h0m0 1h0m0 2h0m1-11h0m0 6h0m0 2h0m0 1h0m0 2h0m0 3h0m1-11h0m0 1h0m0 1h0m0 1h0m0 2h0m0 1h0m0 1h0m1-9h0m0 1h0m0 5h0m0 1h0m0 1h0m0 2h0m0 5h0m1-12h0m0 1h0m0 1h0m0 1h0m0 1h0m0 1h0m0 1h0m0 7h0m1-17h0m0 8h0m0 1h0m0 6h0m0 1h0m0 2h0m1-19h0m0 4h0m0 3h0m0 2h0m0 3h0m0 6h0m1-15h0m0 2h0m0 3h0m0 3h0m0 1h0m0 3h0m1-10h0m0 2h0m0 1h0m0 4h0m0 1h0m0 2h0m0 1h0m1-8h0m0 1h0m0 1h0m0 1h0m0 3h0m0 1h0m0 1h0m1-13h0m0 1h0m0 2h0m0 1h0m0 2h0m0 2h0m0 3h0m1-10h0m0 4h0m0 1h0m0 2h0m0 5h0m0 1h0m1-11h0m0 1h0m0 3h0m0 4h0m1-10h0m0 2h0m0 1h0m0 3h0m0 2h0m0 1h0m0 2h0m0 2h0m1-18h0m0 2h0m0 2h0m0 3h0m0 1h0m0 1h0m0 5h0m1-11h0m0 2h0m0 1h0m0 3h0m0 2h0m0 1h0m0 4h0m1-7h0m0 1h0m0 1h0m0 1h0m0 3h0m1-8h0m0 2h0m0 1h0m0 1h0m0 4h0m1-11h0m0 7h0m0 1h0m0 1h0m0 1h0m1-10h0m0 5h0m0 1h0m0 2h0m0 2h0m1-12h0m0 3h0m0 1h0m0 4h0m0 8h0m1-15h0m0 1h0m0 2h0m0 1h0m0 2h0m0 2h0m0 2h0m1-11h0m0 5h0m0 1h0m0 1h0m0 3h0m0 1h0m1-10h0m0 1h0m0 1h0m0 2h0m0 2h0m0 1h0m0 5h0m1-12h0m0 5h0m0 1h0m0 1h0m0 1h0m0 4h0m1-9h0m0 1h0m0 1h0m0 1h0m0 1h0m0 2h0m0 2h0m1-8h0m0 1h0m0 1h0m0 1h0m0 2h0m0 1h0m0 1h0m0 2h0m1-11h0m0 3h0m0 2h0m0 2h0m0 2h0m0 6h0m1-20h0m0 9h0m0 1h0m0 1h0m0 1h0m0 4h0m0 2h0m1-16h0m0 2h0m0 6h0m0 2h0m0 1h0m0 3h0m0 1h0m1-12h0m0 1h0m0 1h0m0 5h0m0 3h0m0 4h0m1-16h0m0 2h0m0 4h0m0 1h0m0 1h0m0 2h0m1-9h0m0 1h0m0 2h0m0 1h0m0 10h0m1-14h0m0 4h0m0 1h0m0 2h0m0 3h0m0 5h0m1-9h0m0 1h0m0 1h0m0 1h0m0 1h0m0 2h0m1-7h0m0 3h0m0 1h0m0 1h0m1-9h0m0 1h0m0 1h0m0 2h0m0 3h0m0 1h0m0 2h0m0 1h0m1-10h0m0 1h0m0 1h0m0 1h0m0 2h0m0 1h0m0 5h0m1-12h0m0 2h0m0 3h0m0 2h0m0 6h0m0 1h0m1-15h0m0 2h0m0 2h0m0 2h0m0 1h0m0 1h0m0 1h0m1-6h0m0 3h0m0 1h0m0 2h0m0 1h0m1-7h0m0 2h0m0 2h0m0 1h0m0 2h0m0 2h0m1-14h0m0 6h0m0 2h0m0 1h0m0 3h0m0 2h0m1-14h0m0 5h0m0 3h0m0 1h0m0 4h0m1-9h0m0 2h0m0 1h0m0 1h0m0 2h0m0 1h0m0 1h0m0 4h0m1-15h0m0 1h0m0 5h0m0 1h0m0 4h0m0 1h0m0 2h0m1-12h0m0 2h0m0 3h0m0 2h0m0 3h0m0 2h0m1-16h0m0 4h0m0 4h0m0 1h0m0 1h0m0 4h0m1-12h0m0 3h0m0 2h0m0 1h0m0 7h0m0 1h0m1-13h0m0 2h0m0 2h0m0 1h0m0 5h0m0 2h0m0 1h0m0 1h0m1-12h0m0 1h0m0 3h0m0 3h0m0 1h0m0 3h0m1-14h0m0 4h0m0 1h0m0 1h0m0 5h0m1-7h0m0 2h0m0 2h0m0 3h0m0 7h0m1-20h0m0 5h0m0 3h0m0 2h0m0 1h0m0 2h0m0 1h0m0 4h0m1-17h0m0 6h0m0 2h0m0 2h0m0 6h0m1-10h0m0 1h0m0 1h0m0 1h0m0 1h0m0 6h0m1-14h0m0 1h0m0 1h0m0 1h0m0 1h0m0 8h0m1-14h0m0 3h0m0 5h0m0 1h0m0 1h0m0 2h0m0 4h0m1-16h0m0 1h0m0 6h0m0 3h0m0 2h0m0 2h0m1-17h0m0 1h0m0 3h0m0 2h0m0 5h0m0 1h0m0 2h0m0 1h0m1-11h0m0 1h0m0 2h0m0 3h0m0 1h0m0 2h0m0 3h0m0 4h0m1-14h0m0 5h0m0 2h0m0 1h0m1-9h0m0 1h0m0 4h0m0 1h0m0 2h0m1-8h0m0 2h0m0 1h0m0 2h0m0 1h0m0 5h0m1-10h0m0 4h0m0 2h0m0 1h0m0 1h0m0 5h0m0 1h0m1-16h0m0 3h0m0 4h0m0 1h0m0 1h0m0 3h0m1-9h0m0 4h0m0 1h0m0 2h0m0 1h0m0 2h0m1-10h0m0 3h0m0 1h0m0 1h0m0 5h0m0 1h0m0 1h0m1-11h0m0 1h0m0 1h0m0 1h0m0 1h0m0 1h0m1-9h0m0 2h0m0 2h0m0 1h0m0 2h0m0 2h0m0 1h0m0 2h0m1-10h0m0 5h0m0 2h0m0 2h0m0 1h0m0 1h0m0 2h0m1-10h0m0 1h0m0 1h0m0 3h0m0 1h0m1-8h0m0 2h0m0 1h0m0 2h0m0 1h0m0 3h0m1-8h0m0 1h0m0 1h0m0 2h0m0 1h0m0 2h0m1-9h0m0 4h0m0 1h0m0 1h0m0 4h0m0 2h0m0 4h0m1-16h0m0 2h0m0 2h0m0 1h0m0 5h0m0 1h0m1-8h0m0 2h0m0 3h0m0 3h0m0 3h0m1-15h0m0 2h0m0 1h0m0 1h0m0 2h0m0 5h0m0 3h0m1-11h0m0 1h0m0 1h0m0 1h0m0 1h0m0 2h0m1-9h0m0 5h0m0 2h0m0 3h0m0 2h0m1-14h0m0 2h0m0 1h0m0 1h0m0 3h0m0 2h0m0 5h0m1-12h0m0 3h0m0 1h0m0 3h0m0 1h0m0 2h0m1-6h0m0 1h0m0 1h0m0 1h0m0 2h0m0 2h0m1-10h0m0 2h0m0 1h0m0 1h0m0 1h0m0 3h0m0 3h0m1-8h0m0 1h0m0 6h0m0 3h0m1-17h0m0 4h0m0 3h0m0 2h0m0 1h0m0 1h0m1-7h0m0 4h0m0 1h0m0 1h0m0 1h0m0 1h0m0 1h0m1-8h0m0 3h0m0 1h0m0 1h0m0 1h0m0 1h0m0 4h0m1-13h0m0 4h0m0 5h0m0 1h0m0 1h0m0 2h0m1-14h0m0 4h0m0 2h0m0 1h0m0 1h0m0 1h0m0 1h0m0 2h0m1-11h0m0 4h0m0 1h0m0 3h0m0 1h0m0 2h0m1-13h0m0 1h0m0 3h0m0 3h0m0 1h0m1-10h0m0 7h0m0 1h0m0 3h0m0 9h0m0 1h0m1-15h0m0 1h0m0 1h0m0 2h0m0 4h0m0 4h0m1-10h0m0 1h0m0 1h0m0 1h0m0 3h0m0 2h0m1-13h0m0 5h0m0 1h0m0 3h0m0 3h0m1-14h0m0 4h0m0 2h0m0 1h0m0 2h0m1-8h0m0 5h0m0 3h0m0 4h0m0 6h0m1-14h0m0 2h0m0 2h0m0 3h0m0 1h0m0 1h0m1-15h0m0 8h0m0 1h0m0 1h0m0 1h0m0 2h0m0 1h0m1-9h0m0 2h0m0 2h0m0 2h0m0 1h0m0 3h0m1-16h0m0 6h0m0 1h0m0 2h0m0 12h0m1-15h0m0 1h0m0 10h0m0 1h0m0 2h0m0 2h0m1-16h0m0 4h0m0 1h0m0 2h0m0 1h0m0 3h0m1-17h0m0 5h0m0 1h0m0 2h0m0 2h0m0 4h0m1-14h0m0 6h0m0 5h0m0 3h0m0 1h0m0 2h0m0 1h0m1-12h0m0 3h0m0 1h0m0 1h0m0 1h0m0 4h0m1-9h0m0 2h0m0 2h0m0 2h0m0 3h0m0 2h0m1-12h0m0 2h0m0 2h0m0 1h0m0 4h0m0 3h0m1-9h0m0 3h0m0 2h0m0 2h0m0 1h0m0 1h0m1-17h0m0 4h0m0 5h0m0 1h0m0 2h0m0 2h0m1-4h0m0 1h0m0 1h0m0 1h0m0 2h0m0 1h0m1-12h0m0 3h0m0 1h0m0 5h0m0 5h0m1-14h0m0 2h0m0 2h0m0 1h0m0 1h0m0 2h0m0 4h0m1-13h0m0 4h0m0 1h0m0 6h0m0 4h0m1-18h0m0 9h0m0 2h0m0 2h0m0 6h0m1-13h0m0 2h0m0 1h0m0 5h0m0 1h0m1-13h0m0 2h0m0 4h0m0 1h0m0 3h0m0 1h0m1-12h0m0 1h0m0 2h0m0 4h0m0 2h0m0 1h0m0 5h0m1-15h0m0 5h0m0 3h0m0 1h0m0 2h0m0 1h0m0 2h0m0 5h0m1-13h0m0 1h0m0 1h0m0 3h0m0 1h0m0 7h0m1-19h0m0 3h0m0 2h0m0 1h0m0 1h0m0 2h0m0 6h0m1-11h0m0 1h0m0 2h0m0 1h0m0 2h0m0 4h0m0 1h0m1-10h0m0 6h0m0 1h0m0 1h0m0 1h0m1-10h0m0 4h0m0 1h0m0 5h0m0 1h0m0 1h0m1-11h0m0 1h0m0 2h0m0 1h0m0 3h0m0 1h0m1-9h0m0 1h0m0 6h0m0 1h0m0 5h0m1-11h0m0 3h0m0 3h0m0 1h0m0 1h0m0 1h0m1-11h0m0 1h0m0 4h0m0 1h0m0 1h0m0 1h0m1-11h0m0 4h0m0 7h0m0 1h0m0 4h0m0 1h0m0 1h0m1-16h0m0 2h0m0 2h0m0 3h0m0 1h0m0 1h0m1-7h0m0 2h0m0 4h0m0 1h0m0 2h0m0 3h0m1-16h0m0 7h0m0 2h0m0 1h0m0 1h0m0 1h0m1-8h0m0 3h0m0 1h0m0 2h0m0 3h0m0 4h0m1-16h0m0 5h0m0 1h0m0 2h0m0 2h0m0 2h0m0 1h0m1-10h0m0 2h0m0 1h0m0 1h0m0 4h0m0 3h0m0 1h0m1-12h0m0 1h0m0 1h0m0 3h0m0 2h0m0 2h0m1-7h0m0 1h0m0 2h0m0 1h0m0 2h0m0 1h0m1-8h0m0 1h0m0 2h0m0 2h0m0 1h0m0 1h0m1-12h0m0 6h0m0 1h0m0 2h0m0 1h0m0 1h0m1-9h0m0 2h0m0 1h0m0 1h0m0 3h0m0 2h0m1-13h0m0 7h0m0 1h0m0 3h0m0 2h0m0 1h0m0 1h0m1-9h0m0 1h0m0 1h0m0 3h0m0 4h0m0 2h0m0 1h0m0 1h0m1-14h0m0 1h0m0 4h0m0 1h0m1-7h0m0 2h0m0 3h0m0 1h0m0 3h0m0 3h0m1-14h0m0 3h0m0 2h0m0 1h0m0 2h0m0 2h0m1-5h0m0 2h0m0 2h0m0 1h0m0 1h0m1-7h0m0 1h0m0 1h0m0 3h0m0 1h0m0 2h0m1-4h0m0 1h0m0 1h0m0 2h0m0 1h0m0 3h0m1-14h0m0 4h0m0 1h0m0 2h0m0 2h0m0 3h0m1-16h0m0 7h0m0 1h0m0 1h0m0 3h0m0 4h0m1-12h0m0 1h0m0 2h0m0 3h0m0 3h0m0 1h0m0 3h0m1-9h0m0 3h0m0 3h0m0 1h0m0 1h0m0 2h0m1-11h0m0 3h0m0 1h0m0 1h0m0 1h0m0 1h0m1-8h0m0 2h0m0 4h0m0 1h0m0 1h0m0 1h0m0 1h0m1-9h0m0 3h0m0 1h0m0 1h0m0 1h0m0 4h0m0 3h0m1-17h0m0 5h0m0 2h0m0 1h0m0 1h0m0 1h0m1-14h0m0 9h0m0 2h0m0 1h0m0 3h0m0 3h0m1-13h0m0 4h0m0 1h0m0 2h0m0 3h0m0 3h0m0 2h0m1-14h0m0 5h0m0 1h0m0 2h0m0 3h0m0 3h0m1-11h0m0 3h0m0 1h0m0 2h0m0 2h0m0 3h0m1-12h0m0 2h0m0 2h0m0 1h0m0 1h0m0 4h0m1-9h0m0 3h0m0 1h0m0 2h0m0 1h0m0 1h0m0 3h0m1-16h0m0 2h0m0 2h0m0 2h0m0 1h0m0 1h0m1-4h0m0 2h0m0 1h0m0 2h0m0 2h0m1-6h0m0 5h0m0 1h0m0 4h0m1-14h0m0 2h0m0 1h0m0 4h0m0 1h0m0 1h0m0 2h0m1-10h0m0 1h0m0 2h0m0 4h0m0 3h0m0 5h0m1-11h0m0 1h0m0 1h0m0 1h0m0 1h0m0 6h0m1-15h0m0 9h0m0 2h0m0 1h0m0 4h0m1-11h0m0 1h0m0 2h0m0 2h0m0 1h0m0 1h0m1-10h0m0 1h0m0 1h0m0 1h0m0 1h0m0 9h0m1-14h0m0 1h0m0 4h0m0 3h0m0 1h0m0 1h0m1-4h0m0 3h0m0 1h0m0 1h0m0 1h0m0 3h0m1-14h0m0 2h0m0 1h0m0 3h0m0 1h0m1-7h0m0 3h0m0 1h0m0 2h0m0 2h0m0 3h0m1-12h0m0 2h0m0 1h0m0 1h0m0 1h0m0 2h0m0 3h0m0 2h0m1-8h0m0 3h0m0 3h0m0 1h0m0 1h0m0 1h0m1-13h0m0 1h0m0 1h0m0 4h0m0 2h0m0 6h0m0 1h0m1-16h0m0 2h0m0 2h0m0 4h0m0 1h0m0 2h0m0 1h0m0 1h0m1-14h0m0 4h0m0 3h0m0 1h0m0 2h0m0 1h0m1-6h0m0 2h0m0 1h0m0 4h0m0 1h0m0 1h0m0 2h0m1-19h0m0 1h0m0 7h0m0 1h0m0 2h0m0 2h0m0 1h0m0 1h0m1-15h0m0 7h0m0 2h0m0 1h0m0 2h0m0 1h0m0 2h0m1-5h0m0 4h0m0 1h0m0 2h0m0 1h0m0 1h0m1-12h0m0 2h0m0 2h0m0 2h0m0 2h0m0 1h0m1-16h0m0 5h0m0 1h0m0 2h0m0 4h0m0 1h0m0 1h0m1-3h0m0 3h0m0 1h0m0 1h0m1-6h0m0 1h0m0 1h0m0 2h0m0 1h0m0 2h0m0 2h0m1-15h0m0 3h0m0 7h0m0 1h0m1-8h0m0 1h0m0 1h0m0 1h0m0 5h0m0 1h0m1-13h0m0 2h0m0 1h0m0 2h0m0 6h0m0 1h0m0 1h0m1-11h0m0 3h0m0 1h0m0 2h0m0 1h0m0 1h0m1-7h0m0 3h0m0 1h0m0 1h0m0 1h0m0 4h0m1-10h0m0 1h0m0 1h0m0 1h0m0 1h0m0 1h0m0 5h0m1-9h0m0 4h0m0 2h0m0 2h0m0 3h0m0 1h0m1-17h0m0 7h0m0 1h0m0 6h0m0 1h0m1-14h0m0 4h0m0 2h0m0 2h0m0 1h0m0 1h0m1-10h0m0 3h0m0 1h0m0 1h0m0 4h0m1-5h0m0 4h0m0 1h0m0 5h0m0 1h0m0 1h0m1-17h0m0 7h0m0 4h0m0 5h0m1-16h0m0 7h0m0 4h0m0 3h0m0 2h0m1-10h0m0 2h0m0 2h0m0 2h0m0 1h0m0 3h0m0 1h0m1-12h0m0 2h0m0 1h0m0 4h0m0 1h0m1-11h0m0 6h0m0 3h0m0 1h0m0 3h0m1-17h0m0 2h0m0 3h0m0 1h0m0 3h0m0 3h0m0 2h0m1-7h0m0 2h0m0 1h0m0 1h0m0 2h0m0 2h0m0 1h0m1-8h0m0 5h0m0 1h0m0 1h0m0 5h0m1-13h0m0 1h0m0 1h0m0 1h0m0 2h0m0 2h0m0 1h0m1-8h0m0 2h0m0 1h0m0 1h0m0 2h0m0 4h0m1-16h0m0 7h0m0 2h0m0 1h0m0 2h0m0 2h0m0 2h0m1-11h0m0 4h0m0 1h0m0 1h0m0 1h0m0 2h0m1-10h0m0 3h0m0 3h0m0 3h0m0 1h0m0 2h0m0 1h0m1-12h0m0 1h0m0 1h0m0 3h0m0 3h0m0 1h0m0 2h0m1-9h0m0 1h0m0 1h0m0 2h0m0 5h0m0 2h0m1-10h0m0 1h0m0 3h0m0 1h0m0 2h0m1-9h0m0 2h0m0 1h0m0 1h0m0 1h0m0 3h0m0 3h0m1-11h0m0 2h0m0 1h0m0 1h0m0 3h0m0 1h0m0 1h0m0 2h0m1-11h0m0 2h0m0 3h0m0 2h0m0 2h0m0 1h0m0 3h0m1-16h0m0 1h0m0 2h0m0 5h0m0 2h0m0 1h0m1-8h0m0 2h0m0 3h0m0 3h0m0 3h0m0 1h0m0 2h0m1-16h0m0 6h0m0 4h0m0 3h0m1-14h0m0 2h0m0 3h0m0 4h0m0 2h0m0 1h0m0 1h0m1-12h0m0 3h0m0 2h0m0 9h0m1-10h0m0 1h0m0 1h0m0 1h0m0 3h0m0 2h0m1-14h0m0 4h0m0 2h0m0 3h0m0 1h0m0 3h0m1-11h0m0 3h0m0 3h0m0 1h0m0 1h0m0 1h0m0 1h0m1-7h0m0 2h0m0 1h0m0 2h0m0 2h0m1-9h0m0 1h0m0 2h0m0 1h0m0 1h0m0 1h0m0 5h0m1-13h0m0 6h0m0 1h0m0 6h0m0 1h0m1-8h0m0 2h0m0 1h0m0 1h0m0 4h0m0 1h0m1-16h0m0 2h0m0 2h0m0 6h0m0 1h0m0 3h0m0 1h0m1-12h0m0 1h0m0 4h0m0 1h0m0 3h0m0 1h0m1-13h0m0 7h0m0 1h0m0 1h0m0 5h0m0 2h0m1-10h0m0 1h0m0 3h0m0 1h0m0 4h0m1-14h0m0 5h0m0 2h0m0 1h0m0 1h0m0 3h0m0 3h0m1-8h0m0 5h0" stroke="#000" stroke-width="3.74" stroke-linecap="round" fill="none"/>
</g>
<path d="M105.5 113H1351" stroke="#008000" stroke-width="2.083"/>
<path d="M162 320.9V35.5" stroke="#800080" stroke-width="2.083" stroke-dasharray="2.083 3.4375" fill="none"/>
<path d="M1293 320.9V35.5" stroke="#800080" stroke-width="2.083" stroke-dasharray="2.083 3.4375" fill="none"/>
</g>
<rect x="105.5" y="35.5" width="1369.0" height="286.0" fill="none" stroke="#000" stroke-width="1.111"/>
<path d="M162.5 321.5v4.861" stroke="#000" stroke-width="1.111"/>
<text x="158" y="342">0</text>
<path d="M422.5 321.5v4.861" stroke="#000" stroke-width="1.111"/>
<text x="404" y="342">2000</text>
<path d="M681.5 321.5v4.861" stroke="#000" stroke-width="1.111"/>
<text x="664" y="342">4000</text>
<path d="M941.5 321.5v4.861" stroke="#000" stroke-width="1.111"/>
<text x="924" y="342">6000</text>
<path d="M1201.5 321.5v4.861" stroke="#000" stroke-width="1.111"/>
<text x="1184" y="342">8000</text>
<path d="M1461.5 321.5v4.861" stroke="#000" stroke-width="1.111"/>
<text x="1439" y="342">10000</text>
<path d="M105.5 45.5h-4.861" stroke="#000" stroke-width="1.111"/>
<text x="95.3" y="50" text-anchor="end">9.5</text>
<path d="M105.5 90.5h-4.861" stroke="#000" stroke-width="1.111"/>
<text x="95.3" y="95" text-anchor="end">9.4</text>
<path d="M105.5 135.5h-4.861" stroke="#000" stroke-width="1.111"/>
<text x="95.3" y="140" text-anchor="end">9.3</text>
<path d="M105.5 180.5h-4.861" stroke="#000" stroke-width="1.111"/>
<text x="95.3" y="185" text-anchor="end">9.2</text>
<path d="M105.5 225.5h-4.861" stroke="#000" stroke-width="1.111"/>
<text x="95.3" y="230" text-anchor="end">9.1</text>
<path d="M105.5 270.5h-4.861" stroke="#000" stroke-width="1.111"/>
<text x="95.3" y="275" text-anchor="end">9.0</text>
<path d="M105.5 315.5h-4.861" stroke="#000" stroke-width="1.111"/>
<text x="95.3" y="320" text-anchor="end">8.9</text>
<text transform="translate(691 27) scale(1 1.08)" font-size="16.667">AGASC ID 723131912.0</text>
<text x="705" y="312">59727</text>
<rect x="1351.2" y="42.4" width="116.4" height="27.3" rx="2.78" fill="#fff" fill-opacity="0.8" stroke="#ccc" stroke-opacity="0.8" stroke-width="1.389"/>
<path d="M1354.9 54H1384.9" stroke="#008000" stroke-width="2.083"/>
<text x="1395.8" y="58.8">mag<tspan font-size="9.9" font-style="italic" dy="1.9">AGASC</tspan></text>
<rect x="1337.6" y="247.5" width="130" height="67" rx="2.78" fill="#fff" fill-opacity="0.8" stroke="#ccc" stroke-opacity="0.8" stroke-width="1.389"/>
<circle cx="1357.5" cy="260.5" r="1.9" fill="#f00"/>
<text x="1381.4" y="264.3">not OK</text>
<circle cx="1357.5" cy="281.4" r="1.9" fill="#ffa500"/>
<text x="1381.4" y="285.2">Highlighted</text>
<circle cx="1357.5" cy="302.3" r="1.9" fill="#000"/>
<text x="1381.4" y="306.1">OK</text>
<g clip-path="url(#c2)">
<g transform="translate(.5 .5)">
<path d="M165 448h0m2 0h0m11 184h0m4-174h0m14-3h0m1-23h0m22 24h0m3-9h0m5 2h0m10 156h0m19 38h0m12-45h0m3-9h0m4-132h0m4 133h0m4 12h0m58-147h0m10 147h0m20-12h0m37-133h0m2-7h0m5 150h0m6-143h0m8 143h0m14-152h0m4 144h0m29-135h0m49 133h0m18-134h0m30 144h0m0 3h0m2-9h0m2-145h0m34 9h0m6 138h0m9 5h0m7-154h0m6 2h0m32 142h0m6-153h0m13 189h0m2-170h0m11-5h0m8-1h0m61 171h0m9-178h0m20-7h0m12 20h0m10-5h0m12-5h0m11 5h0m4-16h0m7 18h0m14 142h0m0 5h0m3-143h0m1 134h0m3-2h0m1 7h0m16-145h0m14 137h0m5-136h0m7 141h0m26-136h0m10 153h0m26-161h0m14 140h0m9-137h0m16 5h0m11 140h0m8 11h0m1-19h0m32 2h0m8-135h0m8 146h0m6-7h0m0 6h0m2 3h0m3-16h0m12 3h0m12 5h0m12-139h0m19 136h0m5 21h0m31-3h0m5-22h0m19-135h0m4 172h0m5-23h0m16-2h0m4 8h0m0 7h0m1 18h0m5-46h0m8 7h0m6 9h0" stroke="#ffa500" stroke-width="3.74" stroke-linecap="round" fill="none"/>
<path d="M162 491h0m0 31h0m0 5h0m0 11h0m0 3h0m0 12h0m0 1h0m1-88h0m0 32h0m0 2h0m0 5h0m0 7h0m0 26h0m0 28h0m1-78h0m0 2h0m0 12h0m0 5h0m0 15h0m0 6h0m0 4h0m0 18h0m1-90h0m0 21h0m0 19h0m0 10h0m0 13h0m0 2h0m0 27h0m0 7h0m1-57h0m0 1h0m0 1h0m0 4h0m0 35h0m0 6h0m0 5h0m1-62h0m0 22h0m0 1h0m0 8h0m0 1h0m0 12h0m0 14h0m1-60h0m0 19h0m0 2h0m0 4h0m0 3h0m0 2h0m0 27h0m1-40h0m0 2h0m0 6h0m0 8h0m0 17h0m0 11h0m0 8h0m1-53h0m0 5h0m0 9h0m0 12h0m0 10h0m0 7h0m0 11h0m1-53h0m0 3h0m0 12h0m0 5h0m0 16h0m0 4h0m0 1h0m0 6h0m1-69h0m0 19h0m0 9h0m0 15h0m0 2h0m0 9h0m0 2h0m0 24h0m1-73h0m0 8h0m0 5h0m0 18h0m0 3h0m0 10h0m0 12h0m1-49h0m0 3h0m0 10h0m0 4h0m0 9h0m0 7h0m0 9h0m0 5h0m1-47h0m0 16h0m0 11h0m0 1h0m0 2h0m0 1h0m0 37h0m0 3h0m1-91h0m0 2h0m0 24h0m0 14h0m0 7h0m0 8h0m1-44h0m0 15h0m0 1h0m0 9h0m0 7h0m0 3h0m0 14h0m0 4h0m1-46h0m0 15h0m0 5h0m0 1h0m0 5h0m0 27h0m0 20h0m1-83h0m0 31h0m0 10h0m0 2h0m0 4h0m0 17h0m0 9h0m1-64h0m0 2h0m0 7h0m0 10h0m0 24h0m0 1h0m0 3h0m1-59h0m0 22h0m0 14h0m0 1h0m0 4h0m0 31h0m0 2h0m0 17h0m1-72h0m0 7h0m0 1h0m0 13h0m0 13h0m0 8h0m0 4h0m0 5h0m1-38h0m0 7h0m0 2h0m0 2h0m0 14h0m0 1h0m0 3h0m1-50h0m0 1h0m0 3h0m0 4h0m0 12h0m0 11h0m0 1h0m1-35h0m0 1h0m0 17h0m0 8h0m0 3h0m0 4h0m0 48h0m1-98h0m0 32h0m0 9h0m0 12h0m0 22h0m0 2h0m1-56h0m0 8h0m0 4h0m0 11h0m0 19h0m0 9h0m1-60h0m0 20h0m0 6h0m0 14h0m0 5h0m0 5h0m0 4h0m0 37h0m1-90h0m0 15h0m0 12h0m0 3h0m0 22h0m0 12h0m0 1h0m1-52h0m0 14h0m0 7h0m0 12h0m0 3h0m0 1h0m0 3h0m0 20h0m1-65h0m0 2h0m0 18h0m0 3h0m0 24h0m0 4h0m0 5h0m1-77h0m0 9h0m0 37h0m0 8h0m0 3h0m0 2h0m0 10h0m0 6h0m1-85h0m0 17h0m0 13h0m0 8h0m0 1h0m0 4h0m0 24h0m1-36h0m0 3h0m0 11h0m0 8h0m0 24h0m0 2h0m1-80h0m0 46h0m0 6h0m0 1h0m0 4h0m0 24h0m0 3h0m0 27h0m1-71h0m0 18h0m0 8h0m0 9h0m0 7h0m0 20h0m1-78h0m0 4h0m0 10h0m0 8h0m0 7h0m0 17h0m0 23h0m1-59h0m0 3h0m0 4h0m0 3h0m0 16h0m0 3h0m0 24h0m0 18h0m1-96h0m0 28h0m0 3h0m0 13h0m0 15h0m0 12h0m0 1h0m1-52h0m0 29h0m0 1h0m0 9h0m0 3h0m0 4h0m0 12h0m0 7h0m1-47h0m0 3h0m0 1h0m0 8h0m0 12h0m0 10h0m0 7h0m1-64h0m0 36h0m0 4h0m0 4h0m0 3h0m0 18h0m0 6h0m1-57h0m0 8h0m0 14h0m0 5h0m0 10h0m0 8h0m0 10h0m1-76h0m0 27h0m0 1h0m0 2h0m0 6h0m0 2h0m0 16h0m0 25h0m1-69h0m0 8h0m0 3h0m0 15h0m0 2h0m0 14h0m0 4h0m0 3h0m1-68h0m0 14h0m0 18h0m0 1h0m0 4h0m0 22h0m0 5h0m1-62h0m0 21h0m0 13h0m0 2h0m0 16h0m0 10h0m0 12h0m1-74h0m0 9h0m0 8h0m0 18h0m0 1h0m0 27h0m0 1h0m0 2h0m1-39h0m0 5h0m0 7h0m0 4h0m0 3h0m0 3h0m0 26h0m1-82h0m0 29h0m0 5h0m0 17h0m0 17h0m0 4h0m0 17h0m1-53h0m0 14h0m0 12h0m0 13h0m0 1h0m0 10h0m0 3h0m1-78h0m0 27h0m0 21h0m0 5h0m0 14h0m0 2h0m0 7h0m1-86h0m0 30h0m0 8h0m0 6h0m0 1h0m0 11h0m0 4h0m1-51h0m0 18h0m0 9h0m0 6h0m0 20h0m0 4h0m0 5h0m0 1h0m1-42h0m0 1h0m0 4h0m0 16h0m0 10h0m0 8h0m0 8h0m0 27h0m1-109h0m0 27h0m0 20h0m0 25h0m0 6h0m0 4h0m0 11h0m1-48h0m0 9h0m0 2h0m0 9h0m0 11h0m0 6h0m0 3h0m1-58h0m0 8h0m0 9h0m0 9h0m0 5h0m0 5h0m0 9h0m0 26h0m1-77h0m0 4h0m0 26h0m0 4h0m0 10h0m0 8h0m0 6h0m1-65h0m0 9h0m0 5h0m0 2h0m0 5h0m0 46h0m0 3h0m0 5h0m1-69h0m0 11h0m0 16h0m0 6h0m0 1h0m0 5h0m0 16h0m1-45h0m0 24h0m0 5h0m0 5h0m0 15h0m0 5h0m0 11h0m1-94h0m0 5h0m0 14h0m0 34h0m0 26h0m0 4h0m0 7h0m0 9h0m1-65h0m0 5h0m0 4h0m0 2h0m0 6h0m0 10h0m0 3h0m0 43h0m1-86h0m0 5h0m0 12h0m0 4h0m0 8h0m0 7h0m0 21h0m0 5h0m1-60h0m0 1h0m0 23h0m0 2h0m0 6h0m0 19h0m0 3h0m1-72h0m0 23h0m0 20h0m0 9h0m0 8h0m0 9h0m0 3h0m1-45h0m0 10h0m0 3h0m0 6h0m0 2h0m0 4h0m0 3h0m0 2h0m1-4h0m0 3h0m0 2h0m0 7h0m0 9h0m0 2h0m0 17h0m1-69h0m0 18h0m0 2h0m0 1h0m0 10h0m0 1h0m0 7h0m0 2h0m1-36h0m0 15h0m0 6h0m0 7h0m0 9h0m0 4h0m0 20h0m0 10h0m1-74h0m0 6h0m0 17h0m0 4h0m0 5h0m0 4h0m0 16h0m1-49h0m0 12h0m0 6h0m0 7h0m0 26h0m0 9h0m1-96h0m0 11h0m0 17h0m0 9h0m0 26h0m0 3h0m0 4h0m0 15h0m1-43h0m0 6h0m0 17h0m0 9h0m0 23h0m1-79h0m0 44h0m0 2h0m0 1h0m0 2h0m0 3h0m0 11h0m0 4h0m1-70h0m0 15h0m0 4h0m0 19h0m0 7h0m0 1h0m0 11h0m0 1h0m1-47h0m0 16h0m0 7h0m0 2h0m0 24h0m0 6h0m0 7h0m1-62h0m0 11h0m0 8h0m0 1h0m0 5h0m0 22h0m0 3h0m1-58h0m0 4h0m0 19h0m0 6h0m0 7h0m0 2h0m0 7h0m0 30h0m1-80h0m0 2h0m0 10h0m0 8h0m0 14h0m0 12h0m0 20h0m0 32h0m1-95h0m0 9h0m0 21h0m0 10h0m0 6h0m0 20h0m0 4h0m1-73h0m0 25h0m0 12h0m0 4h0m0 1h0m0 12h0m0 12h0m0 9h0m1-66h0m0 6h0m0 20h0m0 8h0m0 2h0m0 8h0m0 32h0m1-73h0m0 22h0m0 3h0m0 1h0m0 13h0m0 6h0m0 37h0m1-72h0m0 1h0m0 5h0m0 4h0m0 19h0m0 2h0m0 24h0m0 32h0m1-95h0m0 2h0m0 27h0m0 6h0m0 7h0m0 9h0m0 30h0m0 4h0m1-90h0m0 11h0m0 2h0m0 2h0m0 20h0m0 11h0m0 1h0m1-47h0m0 1h0m0 7h0m0 5h0m0 21h0m0 4h0m1-45h0m0 25h0m0 6h0m0 9h0m0 7h0m0 4h0m0 5h0m0 24h0m1-63h0m0 8h0m0 15h0m0 3h0m0 4h0m0 8h0m0 1h0m0 9h0m1-39h0m0 6h0m0 11h0m0 6h0m0 2h0m0 17h0m0 16h0m1-79h0m0 7h0m0 7h0m0 4h0m0 6h0m0 17h0m0 4h0m0 12h0m1-60h0m0 38h0m0 2h0m0 1h0m0 13h0m0 10h0m0 37h0m1-89h0m0 10h0m0 3h0m0 3h0m0 9h0m0 11h0m0 26h0m1-77h0m0 19h0m0 15h0m0 10h0m0 6h0m0 8h0m0 4h0m0 7h0m1-54h0m0 9h0m0 2h0m0 1h0m0 8h0m0 14h0m0 2h0m0 7h0m1-59h0m0 32h0m0 6h0m0 2h0m0 7h0m0 18h0m0 11h0m0 6h0m1-63h0m0 4h0m0 4h0m0 4h0m0 5h0m0 21h0m0 3h0m1-56h0m0 22h0m0 2h0m0 10h0m0 8h0m0 14h0m0 15h0m0 1h0m1-63h0m0 9h0m0 13h0m0 8h0m0 3h0m0 2h0m0 17h0m0 25h0m1-75h0m0 4h0m0 16h0m0 7h0m0 7h0m0 5h0m0 50h0m1-82h0m0 7h0m0 11h0m0 4h0m0 3h0m0 3h0m0 3h0m0 8h0m1-47h0m0 10h0m0 16h0m0 7h0m0 4h0m0 5h0m0 22h0m0 12h0m1-92h0m0 6h0m0 9h0m0 30h0m0 3h0m0 3h0m1-49h0m0 33h0m0 5h0m0 3h0m0 1h0m0 4h0m0 5h0m0 1h0m1-22h0m0 4h0m0 4h0m0 3h0m0 1h0m0 6h0m0 2h0m0 2h0m1-40h0m0 4h0m0 10h0m0 15h0m0 8h0m0 19h0m0 21h0m1-97h0m0 38h0m0 4h0m0 11h0m0 9h0m0 5h0m0 2h0m0 9h0m1-66h0m0 12h0m0 5h0m0 11h0m0 2h0m0 17h0m0 2h0m0 22h0m1-66h0m0 6h0m0 19h0m0 4h0m0 9h0m0 4h0m0 17h0m1-42h0m0 3h0m0 5h0m0 13h0m0 5h0m0 4h0m0 14h0m1-45h0m0 2h0m0 10h0m0 7h0m0 16h0m0 11h0m0 15h0m0 6h0m1-105h0m0 7h0m0 38h0m0 3h0m0 15h0m0 26h0m1-86h0m0 21h0m0 29h0m0 22h0m0 1h0m0 6h0m0 23h0m1-74h0m0 9h0m0 2h0m0 8h0m0 3h0m0 6h0m0 29h0m1-55h0m0 1h0m0 7h0m0 5h0m0 12h0m0 2h0m0 11h0m1-45h0m0 1h0m0 13h0m0 16h0m0 11h0m0 4h0m0 30h0m1-60h0m0 4h0m0 1h0m0 5h0m0 7h0m0 4h0m0 7h0m0 3h0m1-58h0m0 6h0m0 6h0m0 8h0m0 29h0m0 4h0m0 44h0m0 3h0m1-84h0m0 11h0m0 1h0m0 8h0m0 6h0m0 10h0m0 3h0m0 5h0m1-23h0m0 3h0m0 2h0m0 3h0m0 1h0m0 6h0m0 9h0m1-56h0m0 2h0m0 8h0m0 7h0m0 7h0m0 9h0m0 14h0m0 1h0m1-58h0m0 4h0m0 41h0m0 1h0m0 3h0m0 4h0m0 20h0m0 4h0m1-66h0m0 20h0m0 5h0m0 2h0m0 18h0m0 9h0m0 10h0m1-77h0m0 13h0m0 18h0m0 13h0m0 20h0m0 11h0m0 1h0m0 7h0m1-74h0m0 23h0m0 2h0m0 5h0m0 18h0m0 3h0m0 3h0m0 29h0m1-77h0m0 9h0m0 6h0m0 1h0m0 23h0m0 23h0m0 20h0m1-81h0m0 9h0m0 5h0m0 1h0m0 2h0m0 10h0m0 54h0m0 13h0m1-84h0m0 1h0m0 14h0m0 6h0m0 11h0m0 8h0m0 38h0m0 2h0m1-99h0m0 8h0m0 5h0m0 13h0m0 5h0m0 2h0m0 20h0m1-43h0m0 12h0m0 21h0m0 1h0m0 22h0m0 4h0m0 12h0m0 19h0m1-94h0m0 2h0m0 7h0m0 7h0m0 2h0m0 7h0m0 2h0m0 10h0m1-39h0m0 14h0m0 6h0m0 5h0m0 5h0m0 14h0m0 16h0m1-63h0m0 36h0m0 2h0m0 10h0m0 2h0m0 25h0m1-76h0m0 19h0m0 6h0m0 1h0m0 9h0m0 6h0m0 1h0m0 19h0m1-36h0m0 17h0m0 1h0m0 4h0m0 3h0m0 6h0m0 2h0m0 9h0m1-57h0m0 2h0m0 1h0m0 20h0m0 5h0m0 6h0m0 10h0m1-54h0m0 2h0m0 15h0m0 15h0m0 14h0m0 1h0m0 11h0m0 33h0m1-91h0m0 9h0m0 5h0m0 4h0m0 24h0m0 4h0m0 10h0m1-47h0m0 7h0m0 8h0m0 15h0m0 5h0m1-37h0m0 7h0m0 15h0m0 3h0m0 6h0m0 2h0m0 11h0m0 12h0m1-47h0m0 10h0m0 8h0m0 5h0m0 8h0m0 3h0m0 9h0m1-73h0m0 48h0m0 3h0m0 2h0m0 14h0m0 2h0m0 3h0m1-63h0m0 29h0m0 11h0m0 8h0m0 21h0m0 5h0m0 8h0m1-73h0m0 3h0m0 25h0m0 2h0m0 6h0m0 39h0m0 10h0m1-95h0m0 20h0m0 3h0m0 4h0m0 6h0m0 6h0m0 8h0m0 18h0m1-53h0m0 3h0m0 2h0m0 6h0m0 9h0m0 26h0m1-45h0m0 9h0m0 1h0m0 6h0m0 7h0m0 2h0m0 1h0m1-16h0m0 1h0m0 2h0m0 17h0m0 2h0m0 3h0m0 7h0m0 11h0m1-58h0m0 14h0m0 1h0m0 7h0m0 21h0m0 6h0m0 1h0m1-35h0m0 4h0m0 7h0m0 3h0m0 2h0m0 5h0m0 10h0m1-56h0m0 32h0m0 7h0m0 4h0m0 1h0m0 2h0m0 15h0m0 22h0m1-56h0m0 2h0m0 12h0m0 8h0m0 14h0m0 2h0m0 1h0m0 6h0m1-61h0m0 9h0m0 5h0m0 9h0m0 2h0m0 6h0m0 18h0m1-47h0m0 2h0m0 1h0m0 5h0m0 9h0m0 2h0m0 27h0m0 20h0m1-53h0m0 2h0m0 18h0m0 4h0m0 1h0m0 12h0m0 2h0m0 5h0m1-50h0m0 2h0m0 5h0m0 15h0m0 4h0m0 9h0m0 10h0m1-63h0m0 20h0m0 4h0m0 7h0m0 12h0m0 7h0m0 3h0m0 4h0m1-46h0m0 17h0m0 1h0m0 7h0m0 16h0m0 7h0m0 18h0m0 19h0m1-71h0m0 1h0m0 14h0m0 7h0m0 13h0m0 21h0m0 10h0m1-98h0m0 40h0m0 3h0m0 5h0m0 10h0m0 2h0m0 9h0m0 26h0m1-80h0m0 11h0m0 3h0m0 6h0m0 12h0m0 1h0m0 2h0m0 30h0m1-55h0m0 2h0m0 4h0m0 14h0m0 8h0m0 13h0m1-36h0m0 11h0m0 2h0m0 9h0m0 2h0m0 8h0m0 14h0m1-75h0m0 5h0m0 26h0m0 20h0m0 2h0m0 12h0m0 22h0m1-74h0m0 32h0m0 8h0m0 3h0m0 25h0m0 3h0m0 4h0m1-78h0m0 34h0m0 9h0m0 12h0m0 18h0m1-47h0m0 1h0m0 5h0m0 15h0m0 9h0m0 1h0m0 7h0m0 11h0m1-61h0m0 16h0m0 6h0m0 4h0m0 4h0m0 9h0m0 9h0m0 42h0m1-102h0m0 15h0m0 18h0m0 12h0m0 18h0m0 2h0m1-67h0m0 11h0m0 31h0m0 11h0m0 1h0m0 3h0m0 3h0m1-72h0m0 24h0m0 4h0m0 18h0m0 1h0m0 9h0m0 10h0m1-30h0m0 14h0m0 7h0m0 3h0m0 13h0m0 13h0m1-75h0m0 38h0m0 6h0m0 11h0m0 7h0m0 13h0m0 5h0m0 21h0m1-98h0m0 23h0m0 3h0m0 24h0m0 7h0m0 8h0m1-76h0m0 19h0m0 13h0m0 3h0m0 2h0m0 7h0m0 14h0m0 7h0m1-39h0m0 15h0m0 3h0m0 14h0m0 10h0m0 2h0m0 35h0m1-96h0m0 17h0m0 11h0m0 16h0m0 20h0m0 13h0m0 1h0m1-59h0m0 6h0m0 7h0m0 18h0m0 4h0m0 3h0m0 8h0m1-65h0m0 2h0m0 30h0m0 25h0m0 1h0m0 2h0m0 19h0m1-90h0m0 17h0m0 9h0m0 20h0m0 1h0m0 3h0m0 10h0m1-34h0m0 9h0m0 7h0m0 2h0m0 3h0m0 11h0m0 2h0m1-22h0m0 1h0m0 1h0m0 19h0m0 4h0m0 6h0m0 16h0m1-54h0m0 11h0m0 3h0m0 2h0m0 2h0m0 7h0m0 4h0m0 14h0m1-41h0m0 8h0m0 1h0m0 11h0m0 3h0m0 15h0m0 14h0m0 32h0m1-100h0m0 6h0m0 22h0m0 2h0m0 25h0m0 4h0m0 11h0m0 7h0m1-73h0m0 5h0m0 3h0m0 24h0m0 1h0m0 14h0m0 31h0m1-90h0m0 9h0m0 30h0m0 6h0m0 1h0m0 7h0m0 13h0m1-62h0m0 10h0m0 19h0m0 12h0m0 5h0m0 3h0m0 1h0m0 19h0m1-72h0m0 19h0m0 4h0m0 17h0m0 3h0m0 8h0m1-55h0m0 25h0m0 15h0m0 2h0m0 18h0m0 3h0m0 1h0m0 10h0m1-66h0m0 4h0m0 22h0m0 3h0m0 5h0m0 9h0m0 31h0m1-85h0m0 16h0m0 33h0m0 5h0m0 3h0m0 3h0m0 18h0m1-63h0m0 11h0m0 3h0m0 7h0m0 4h0m0 3h0m0 1h0m0 57h0m1-81h0m0 15h0m0 1h0m0 3h0m0 4h0m0 3h0m0 5h0m0 18h0m1-56h0m0 25h0m0 10h0m0 2h0m0 25h0m0 9h0m1-88h0m0 20h0m0 28h0m0 7h0m0 2h0m0 5h0m0 12h0m1-73h0m0 18h0m0 3h0m0 23h0m0 17h0m0 18h0m0 12h0m0 17h0m1-79h0m0 9h0m0 11h0m0 1h0m0 7h0m0 13h0m0 16h0m1-61h0m0 3h0m0 8h0m0 2h0m0 32h0m0 34h0m1-96h0m0 11h0m0 14h0m0 15h0m0 3h0m0 7h0m0 13h0m0 5h0m1-75h0m0 27h0m0 3h0m0 4h0m0 10h0m0 12h0m0 44h0m1-90h0m0 26h0m0 6h0m0 2h0m0 9h0m0 11h0m1-54h0m0 2h0m0 5h0m0 19h0m0 5h0m0 10h0m0 20h0m1-58h0m0 21h0m0 3h0m0 2h0m0 14h0m0 3h0m0 5h0m0 18h0m1-76h0m0 3h0m0 20h0m0 13h0m0 18h0m0 5h0m0 14h0m1-52h0m0 11h0m0 10h0m0 4h0m0 4h0m0 9h0m0 1h0m0 12h0m1-57h0m0 15h0m0 5h0m0 20h0m0 5h0m0 6h0m0 11h0m0 9h0m1-63h0m0 12h0m0 9h0m0 6h0m0 2h0m0 2h0m0 2h0m0 19h0m1-80h0m0 47h0m0 3h0m0 2h0m0 13h0m0 6h0m0 3h0m1-72h0m0 5h0m0 13h0m0 5h0m0 9h0m0 22h0m0 9h0m0 12h0m1-49h0m0 17h0m0 8h0m0 2h0m0 7h0m0 5h0m0 30h0m0 7h0m1-84h0m0 6h0m0 1h0m0 5h0m0 14h0m0 9h0m0 13h0m1-37h0m0 10h0m0 5h0m0 4h0m0 2h0m0 11h0m0 21h0m1-65h0m0 16h0m0 3h0m0 1h0m0 21h0m0 12h0m0 3h0m0 14h0m1-63h0m0 12h0m0 1h0m0 3h0m0 4h0m0 2h0m0 40h0m1-73h0m0 1h0m0 5h0m0 32h0m0 14h0m0 25h0m0 8h0m1-69h0m0 5h0m0 8h0m0 3h0m0 7h0m0 4h0m0 15h0m1-54h0m0 23h0m0 13h0m0 3h0m0 1h0m0 6h0m0 14h0m1-70h0m0 9h0m0 15h0m0 7h0m0 4h0m0 15h0m0 11h0m0 6h0m1-39h0m0 2h0m0 4h0m0 3h0m0 2h0m0 6h0m0 3h0m0 43h0m1-95h0m0 29h0m0 24h0m0 6h0m0 3h0m0 3h0m0 2h0m1-54h0m0 23h0m0 10h0m0 14h0m0 1h0m0 33h0m1-77h0m0 1h0m0 5h0m0 1h0m0 1h0m0 3h0m0 16h0m0 38h0m1-68h0m0 14h0m0 2h0m0 8h0m0 11h0m0 11h0m0 16h0m0 12h0m1-93h0m0 9h0m0 33h0m0 9h0m0 14h0m0 3h0m1-54h0m0 44h0m0 1h0m0 5h0m0 12h0m0 7h0m0 2h0m0 7h0m1-67h0m0 8h0m0 7h0m0 1h0m0 4h0m0 10h0m0 3h0m0 5h0m1-26h0m0 7h0m0 3h0m0 2h0m0 6h0m0 9h0m0 3h0m1-27h0m0 1h0m0 11h0m0 10h0m0 1h0m0 4h0m0 14h0m1-55h0m0 4h0m0 3h0m0 3h0m0 6h0m0 8h0m0 21h0m0 1h0m1-40h0m0 2h0m0 6h0m0 2h0m0 4h0m0 1h0m0 26h0m0 20h0m1-69h0m0 1h0m0 6h0m0 10h0m0 11h0m0 19h0m0 8h0m1-52h0m0 17h0m0 1h0m0 9h0m0 6h0m0 3h0m0 24h0m0 5h0m1-48h0m0 2h0m0 11h0m0 1h0m0 1h0m0 9h0m0 9h0m1-27h0m0 1h0m0 8h0m0 6h0m0 1h0m0 11h0m0 6h0m1-78h0m0 20h0m0 9h0m0 8h0m0 6h0m0 6h0m0 1h0m0 15h0m1-18h0m0 9h0m0 13h0m0 3h0m0 7h0m0 4h0m0 6h0m0 11h0m1-77h0m0 3h0m0 1h0m0 9h0m0 4h0m0 19h0m1-53h0m0 15h0m0 16h0m0 2h0m0 12h0m0 1h0m0 20h0m0 12h0m1-81h0m0 7h0m0 52h0m0 5h0m0 3h0m0 9h0m0 21h0m1-69h0m0 10h0m0 4h0m0 8h0m0 1h0m0 1h0m0 11h0m0 12h0m1-63h0m0 22h0m0 10h0m0 2h0m0 1h0m0 2h0m0 18h0m1-41h0m0 1h0m0 3h0m0 1h0m0 18h0m0 7h0m0 12h0m0 8h0m1-70h0m0 13h0m0 17h0m0 1h0m0 8h0m0 5h0m0 5h0m0 6h0m1-44h0m0 4h0m0 27h0m0 14h0m0 1h0m0 10h0m0 23h0m1-91h0m0 8h0m0 7h0m0 15h0m0 4h0m0 17h0m0 18h0m1-75h0m0 19h0m0 2h0m0 13h0m0 11h0m0 25h0m0 9h0m0 9h0m1-64h0m0 13h0m0 8h0m0 1h0m0 3h0m0 50h0m1-92h0m0 33h0m0 6h0m0 1h0m0 2h0m0 7h0m0 2h0m0 8h0m1-42h0m0 19h0m0 10h0m0 1h0m0 11h0m0 10h0m0 6h0m0 9h0m1-71h0m0 17h0m0 1h0m0 12h0m0 28h0m0 4h0m1-65h0m0 11h0m0 21h0m0 14h0m0 8h0m0 33h0m0 2h0m1-97h0m0 2h0m0 8h0m0 6h0m0 32h0m0 4h0m0 9h0m0 14h0m1-58h0m0 21h0m0 6h0m0 3h0m0 1h0m0 14h0m0 17h0m1-65h0m0 22h0m0 6h0m0 4h0m0 9h0m0 4h0m0 26h0m1-72h0m0 2h0m0 7h0m0 8h0m0 4h0m0 9h0m0 9h0m0 3h0m1-68h0m0 23h0m0 13h0m0 16h0m0 4h0m0 4h0m0 12h0m0 6h0m1-65h0m0 21h0m0 6h0m0 8h0m0 2h0m0 3h0m0 39h0m1-91h0m0 40h0m0 1h0m0 7h0m0 3h0m0 1h0m0 3h0m0 24h0m1-46h0m0 9h0m0 12h0m0 2h0m0 14h0m0 4h0m0 6h0m0 8h0m1-56h0m0 5h0m0 1h0m0 10h0m0 1h0m0 10h0m1-48h0m0 29h0m0 4h0m0 2h0m0 6h0m0 11h0m0 22h0m0 26h0m1-104h0m0 12h0m0 3h0m0 6h0m0 6h0m0 13h0m0 11h0m0 10h0m1-42h0m0 5h0m0 6h0m0 4h0m0 35h0m0 10h0m0 7h0m0 8h0m1-78h0m0 27h0m0 11h0m0 5h0m0 26h0m0 6h0m1-70h0m0 5h0m0 6h0m0 5h0m0 10h0m0 5h0m0 10h0m0 4h0m1-60h0m0 7h0m0 14h0m0 5h0m0 15h0m0 6h0m0 9h0m0 5h0m1-69h0m0 4h0m0 35h0m0 4h0m0 6h0m0 10h0m0 13h0m1-24h0m0 3h0m0 2h0m0 1h0m0 2h0m0 5h0m0 19h0m0 19h0m1-67h0m0 6h0m0 6h0m0 4h0m0 1h0m0 1h0m0 3h0m0 20h0m1-53h0m0 6h0m0 3h0m0 5h0m0 17h0m0 28h0m1-74h0m0 14h0m0 28h0m0 2h0m0 1h0m0 6h0m0 23h0m1-75h0m0 11h0m0 17h0m0 17h0m0 5h0m0 9h0m0 6h0m0 18h0m1-84h0m0 20h0m0 11h0m0 4h0m0 25h0m0 22h0m0 13h0m1-79h0m0 5h0m0 6h0m0 5h0m0 15h0m0 3h0m0 22h0m0 12h0m1-88h0m0 7h0m0 34h0m0 12h0m0 10h0m0 5h0m0 2h0m0 3h0m1-60h0m0 7h0m0 18h0m0 4h0m0 18h0m0 3h0m0 1h0m1-52h0m0 10h0m0 17h0m0 6h0m0 9h0m0 4h0m0 1h0m1-67h0m0 7h0m0 50h0m0 7h0m0 4h0m0 1h0m0 20h0m1-70h0m0 13h0m0 12h0m0 13h0m0 3h0m0 1h0m0 34h0m1-54h0m0 1h0m0 3h0m0 12h0m0 9h0m0 21h0m1-78h0m0 26h0m0 10h0m0 1h0m0 9h0m0 4h0m0 10h0m0 18h0m1-64h0m0 21h0m0 3h0m0 1h0m0 6h0m0 9h0m0 19h0m1-45h0m0 11h0m0 3h0m0 3h0m0 9h0m0 11h0m0 2h0m1-40h0m0 4h0m0 10h0m0 2h0m0 5h0m0 5h0m0 7h0m0 18h0m1-77h0m0 10h0m0 17h0m0 21h0m0 16h0m0 10h0m0 2h0m1-57h0m0 3h0m0 11h0m0 2h0m0 7h0m0 7h0m0 13h0m0 26h0m1-61h0m0 7h0m0 13h0m0 4h0m0 2h0m0 12h0m1-49h0m0 11h0m0 10h0m0 8h0m0 12h0m0 21h0m0 10h0m1-61h0m0 9h0m0 8h0m0 1h0m0 1h0m0 1h0m0 14h0m0 25h0m1-71h0m0 27h0m0 6h0m0 10h0m0 1h0m0 8h0m0 6h0m1-80h0m0 21h0m0 20h0m0 5h0m0 19h0m1-46h0m0 18h0m0 14h0m0 6h0m0 1h0m0 2h0m0 15h0m0 9h0m1-60h0m0 6h0m0 24h0m0 8h0m0 4h0m0 1h0m0 43h0m1-81h0m0 2h0m0 3h0m0 1h0m0 1h0m0 16h0m0 13h0m0 6h0m1-56h0m0 4h0m0 6h0m0 1h0m0 4h0m0 11h0m0 9h0m0 14h0m1-69h0m0 33h0m0 6h0m0 14h0m0 9h0m0 7h0m0 7h0m0 3h0m1-61h0m0 5h0m0 5h0m0 38h0m0 22h0m0 12h0m0 17h0m1-76h0m0 12h0m0 1h0m0 1h0m0 7h0m0 2h0m0 4h0m1-57h0m0 2h0m0 1h0m0 39h0m0 1h0m0 4h0m0 27h0m1-44h0m0 3h0m0 3h0m0 12h0m0 5h0m0 43h0m0 7h0m1-92h0m0 19h0m0 4h0m0 1h0m0 3h0m0 4h0m0 6h0m0 11h0m1-49h0m0 11h0m0 2h0m0 2h0m0 27h0m0 1h0m0 1h0m0 12h0m1-69h0m0 2h0m0 24h0m0 6h0m0 4h0m0 6h0m0 27h0m1-73h0m0 24h0m0 6h0m0 7h0m0 23h0m0 3h0m0 11h0m0 6h0m1-42h0m0 3h0m0 16h0m0 4h0m0 3h0m0 25h0m0 8h0m0 3h0m1-86h0m0 6h0m0 16h0m0 1h0m0 7h0m0 16h0m0 22h0m1-55h0m0 1h0m0 18h0m0 3h0m0 8h0m0 6h0m0 9h0m0 15h0m1-55h0m0 9h0m0 10h0m0 3h0m0 1h0m0 17h0m0 1h0m0 23h0m1-82h0m0 22h0m0 1h0m0 11h0m0 4h0m0 6h0m0 15h0m0 6h0m1-30h0m0 2h0m0 3h0m0 1h0m0 10h0m0 6h0m0 30h0m1-78h0m0 6h0m0 1h0m0 6h0m0 12h0m0 8h0m0 3h0m0 3h0m1-30h0m0 12h0m0 3h0m0 3h0m0 8h0m0 27h0m0 7h0m1-44h0m0 5h0m0 10h0m0 8h0m0 21h0m0 18h0m1-62h0m0 5h0m0 5h0m0 7h0m0 17h0m0 1h0m0 6h0m0 27h0m1-105h0m0 1h0m0 1h0m0 8h0m0 11h0m0 1h0m0 18h0m0 6h0m1-53h0m0 37h0m0 14h0m0 3h0m0 7h0m0 9h0m1-59h0m0 1h0m0 6h0m0 17h0m0 15h0m0 7h0m0 12h0m0 8h0m1-69h0m0 17h0m0 15h0m0 8h0m0 17h0m0 6h0m0 7h0m1-41h0m0 2h0m0 7h0m0 11h0m0 6h0m0 2h0m0 16h0m0 13h0m1-85h0m0 39h0m0 8h0m0 8h0m0 4h0m0 7h0m0 19h0m1-99h0m0 10h0m0 52h0m0 2h0m0 1h0m0 4h0m0 7h0m0 6h0m1-53h0m0 2h0m0 5h0m0 38h0m0 2h0m0 12h0m0 4h0m0 16h0m1-92h0m0 17h0m0 26h0m0 23h0m0 2h0m0 3h0m0 8h0m1-78h0m0 40h0m0 3h0m0 3h0m0 4h0m0 7h0m0 4h0m1-50h0m0 3h0m0 39h0m0 5h0m0 5h0m0 3h0m1-79h0m0 36h0m0 4h0m0 10h0m0 12h0m0 16h0m1-84h0m0 46h0m0 17h0m0 4h0m0 20h0m0 29h0m1-85h0m0 2h0m0 3h0m0 7h0m0 19h0m0 1h0m0 15h0m0 29h0m1-95h0m0 54h0m0 1h0m0 2h0m0 8h0m0 4h0m0 12h0m1-67h0m0 16h0m0 4h0m0 2h0m0 3h0m0 25h0m0 18h0m0 17h0m1-58h0m0 11h0m0 4h0m0 1h0m0 20h0m0 10h0m0 2h0m0 4h0m1-78h0m0 5h0m0 1h0m0 21h0m0 1h0m0 2h0m0 4h0m0 16h0m1-26h0m0 3h0m0 3h0m0 15h0m0 11h0m0 3h0m0 2h0m1-54h0m0 8h0m0 11h0m0 20h0m0 6h0m0 4h0m0 13h0m1-62h0m0 4h0m0 14h0m0 9h0m0 4h0m0 6h0m0 7h0m0 10h0m1-55h0m0 10h0m0 28h0m0 6h0m0 1h0m0 27h0m0 14h0m1-102h0m0 14h0m0 24h0m0 3h0m0 6h0m0 9h0m0 5h0m1-75h0m0 54h0m0 9h0m0 3h0m0 16h0m0 3h0m0 1h0m0 6h0m1-56h0m0 8h0m0 1h0m0 2h0m0 18h0m0 19h0m0 3h0m1-67h0m0 6h0m0 5h0m0 3h0m0 4h0m0 8h0m0 6h0m0 12h0m1-51h0m0 11h0m0 11h0m0 4h0m0 13h0m0 15h0m0 1h0m0 28h0m1-64h0m0 11h0m0 4h0m0 5h0m0 11h0m0 7h0m0 9h0m1-50h0m0 6h0m0 18h0m0 5h0m0 13h0m0 2h0m0 4h0m1-73h0m0 6h0m0 28h0m0 19h0m0 3h0m0 5h0m0 9h0m1-60h0m0 18h0m0 11h0m0 3h0m0 5h0m0 29h0m0 5h0m0 11h0m1-63h0m0 14h0m0 12h0m0 2h0m0 6h0m0 4h0m0 3h0m1-37h0m0 7h0m0 13h0m0 12h0m0 7h0m0 4h0m0 2h0m0 12h0m1-63h0m0 6h0m0 2h0m0 4h0m0 4h0m0 12h0m0 2h0m0 8h0m1-46h0m0 5h0m0 20h0m0 3h0m0 6h0m0 27h0m0 12h0m1-65h0m0 10h0m0 20h0m0 4h0m0 1h0m0 6h0m0 1h0m0 6h0m1-37h0m0 9h0m0 7h0m0 5h0m0 1h0m0 3h0m0 3h0m0 3h0m1-56h0m0 20h0m0 4h0m0 10h0m0 8h0m0 8h0m0 23h0m1-68h0m0 23h0m0 4h0m0 8h0m0 2h0m0 1h0m0 12h0m1-58h0m0 6h0m0 13h0m0 4h0m0 5h0m0 7h0m0 2h0m0 18h0m1-46h0m0 10h0m0 2h0m0 16h0m0 1h0m0 1h0m0 18h0m0 9h0m1-37h0m0 11h0m0 6h0m0 1h0m0 24h0m0 6h0m0 1h0m1-66h0m0 11h0m0 4h0m0 2h0m0 8h0m0 6h0m0 17h0m1-43h0m0 13h0m0 12h0m0 1h0m0 8h0m0 11h0m0 11h0m0 1h0m1-74h0m0 16h0m0 21h0m0 4h0m0 11h0m0 8h0m0 14h0m1-66h0m0 17h0m0 7h0m0 2h0m0 1h0m0 7h0m0 7h0m0 27h0m1-85h0m0 14h0m0 20h0m0 12h0m0 3h0m0 28h0m0 4h0m0 3h0m1-73h0m0 34h0m0 4h0m0 5h0m0 9h0m0 15h0m1-56h0m0 25h0m0 1h0m0 8h0m0 8h0m0 2h0m0 15h0m0 2h0m1-76h0m0 15h0m0 27h0m0 5h0m0 6h0m0 4h0m0 24h0m0 11h0m1-76h0m0 7h0m0 7h0m0 12h0m0 4h0m0 17h0m0 4h0m0 12h0m1-52h0m0 3h0m0 29h0m0 3h0m0 15h0m0 12h0m1-61h0m0 1h0m0 5h0m0 3h0m0 8h0m0 4h0m0 6h0m1-38h0m0 4h0m0 5h0m0 4h0m0 12h0m0 6h0m0 5h0m0 1h0m1-43h0m0 5h0m0 15h0m0 2h0m0 14h0m0 1h0m0 22h0m1-70h0m0 15h0m0 11h0m0 19h0m0 8h0m0 3h0m0 8h0m0 8h0m1-55h0m0 11h0m0 6h0m0 2h0m0 7h0m0 17h0m0 8h0m1-59h0m0 10h0m0 2h0m0 20h0m0 5h0m0 6h0m0 16h0m1-52h0m0 8h0m0 4h0m0 4h0m0 7h0m0 9h0m0 1h0m0 42h0m1-72h0m0 15h0m0 9h0m0 2h0m0 8h0m0 2h0m0 11h0m1-33h0m0 1h0m0 2h0m0 1h0m0 14h0m0 21h0m0 3h0m0 2h0m1-78h0m0 11h0m0 23h0m0 4h0m0 12h0m0 3h0m0 3h0m1-44h0m0 19h0m0 7h0m0 2h0m0 3h0m0 13h0m0 5h0m1-60h0m0 28h0m0 8h0m0 4h0m0 5h0m0 21h0m0 17h0m1-58h0m0 7h0m0 6h0m0 11h0m0 11h0m0 2h0m1-42h0m0 8h0m0 7h0m0 14h0m0 5h0m0 38h0m0 1h0m1-75h0m0 3h0m0 14h0m0 9h0m0 7h0m0 2h0m0 31h0m1-74h0m0 2h0m0 10h0m0 1h0m0 41h0m0 9h0m0 5h0m1-79h0m0 37h0m0 13h0m0 8h0m0 7h0m0 9h0m0 2h0m1-73h0m0 4h0m0 31h0m0 6h0m0 8h0m0 22h0m0 14h0m1-95h0m0 16h0m0 2h0m0 8h0m0 12h0m0 12h0m0 12h0m1-24h0m0 8h0m0 11h0m0 3h0m0 3h0m0 1h0m0 7h0m0 5h0m1-71h0m0 6h0m0 12h0m0 4h0m0 6h0m0 3h0m0 11h0m0 6h0m1-25h0m0 6h0m0 7h0m0 1h0m0 5h0m0 16h0m0 7h0m0 4h0m1-71h0m0 22h0m0 4h0m0 2h0m0 23h0m0 4h0m0 55h0m1-90h0m0 22h0m0 1h0m0 6h0m0 13h0m0 3h0m0 6h0m0 5h0m1-55h0m0 12h0m0 5h0m0 14h0m0 6h0m0 11h0m0 6h0m0 8h0m1-69h0m0 8h0m0 7h0m0 4h0m0 9h0m0 5h0m1-42h0m0 9h0m0 12h0m0 32h0m0 10h0m0 5h0m0 7h0m1-71h0m0 19h0m0 1h0m0 14h0m0 3h0m0 10h0m0 10h0m0 3h0m1-24h0m0 8h0m0 7h0m0 2h0m0 14h0m0 25h0m1-55h0m0 5h0m0 2h0m0 7h0m0 7h0m0 2h0m0 3h0m0 14h0m1-56h0m0 4h0m0 10h0m0 9h0m0 3h0m0 3h0m0 9h0m0 7h0m1-53h0m0 16h0m0 5h0m0 4h0m0 7h0m0 13h0m0 3h0m1-44h0m0 11h0m0 15h0m0 3h0m0 9h0m0 10h0m0 24h0m1-70h0m0 5h0m0 17h0m0 8h0m0 3h0m0 8h0m0 3h0m0 27h0m1-85h0m0 11h0m0 2h0m0 5h0m0 5h0m0 25h0m0 19h0m1-68h0m0 24h0m0 11h0m0 11h0m0 6h0m0 2h0m0 13h0m1-70h0m0 1h0m0 6h0m0 25h0m0 4h0m0 3h0m0 17h0m0 11h0m1-61h0m0 2h0m0 15h0m0 7h0m0 10h0m0 3h0m0 7h0m0 4h0m1-36h0m0 9h0m0 1h0m0 1h0m0 9h0m0 43h0m0 3h0m1-72h0m0 21h0m0 4h0m0 2h0m0 19h0m0 7h0m0 18h0m0 14h0m1-67h0m0 6h0m0 6h0m0 11h0m0 7h0m0 16h0m0 10h0m0 4h0m1-73h0m0 18h0m0 8h0m0 3h0m0 4h0m0 7h0m0 21h0m1-61h0m0 12h0m0 3h0m0 3h0m0 15h0m0 10h0m0 34h0m1-72h0m0 10h0m0 3h0m0 8h0m0 7h0m0 3h0m0 7h0m0 26h0m1-56h0m0 4h0m0 11h0m0 10h0m0 7h0m0 4h0m0 2h0m0 2h0m1-58h0m0 6h0m0 18h0m0 9h0m0 8h0m0 4h0m0 40h0m1-77h0m0 12h0m0 11h0m0 12h0m0 2h0m0 8h0m0 5h0m1-68h0m0 19h0m0 12h0m0 23h0m0 7h0m0 9h0m1-49h0m0 6h0m0 1h0m0 23h0m0 11h0m0 10h0m0 5h0m1-70h0m0 17h0m0 6h0m0 4h0m0 3h0m0 7h0m0 4h0m0 14h0m1-84h0m0 22h0m0 7h0m0 5h0m0 32h0m0 7h0m0 4h0m0 5h0m1-64h0m0 4h0m0 35h0m0 1h0m0 6h0m0 8h0m0 45h0m1-81h0m0 27h0m0 1h0m0 3h0m0 1h0m0 3h0m0 9h0m0 8h0m1-67h0m0 31h0m0 6h0m0 5h0m0 11h0m0 2h0m0 14h0m0 28h0m1-108h0m0 33h0m0 4h0m0 13h0m0 13h0m0 2h0m0 19h0m0 6h0m1-75h0m0 25h0m0 17h0m0 10h0m0 7h0m0 1h0m0 20h0m1-71h0m0 5h0m0 13h0m0 2h0m0 3h0m0 1h0m0 30h0m0 16h0m1-81h0m0 5h0m0 22h0m0 16h0m0 9h0m0 5h0m0 1h0m0 22h0m1-85h0m0 25h0m0 1h0m0 16h0m0 5h0m0 13h0m0 14h0m1-54h0m0 26h0m0 2h0m0 3h0m0 12h0m0 1h0m1-60h0m0 3h0m0 20h0m0 21h0m0 6h0m0 10h0m0 4h0m0 6h0m1-69h0m0 45h0m0 1h0m0 18h0m0 1h0m1-87h0m0 36h0m0 2h0m0 6h0m0 1h0m0 43h0m0 3h0m0 11h0m1-60h0m0 12h0m0 7h0m0 13h0m0 2h0m0 1h0m0 5h0m0 1h0m1-35h0m0 15h0m0 6h0m0 6h0m0 2h0m0 7h0m0 5h0m0 26h0m1-86h0m0 5h0m0 22h0m0 5h0m0 13h0m0 6h0m0 1h0m1-60h0m0 14h0m0 9h0m0 5h0m0 4h0m0 14h0m0 4h0m1-47h0m0 13h0m0 4h0m0 11h0m0 14h0m0 9h0m0 4h0m0 8h0m1-38h0m0 4h0m0 11h0m0 21h0m0 7h0m0 7h0m1-54h0m0 11h0m0 3h0m0 12h0m0 13h0m0 4h0m0 7h0m1-84h0m0 44h0m0 8h0m0 10h0m0 3h0m0 1h0m0 8h0m0 3h0m1-49h0m0 23h0m0 4h0m0 14h0m0 3h0m0 13h0m1-79h0m0 18h0m0 1h0m0 18h0m0 12h0m0 2h0m0 1h0m0 21h0m1-57h0m0 3h0m0 11h0m0 14h0m0 2h0m0 18h0m0 13h0m0 12h0m1-77h0m0 5h0m0 20h0m0 6h0m0 7h0m0 1h0m0 26h0m1-89h0m0 4h0m0 13h0m0 6h0m0 17h0m0 17h0m0 4h0m0 23h0m1-44h0m0 1h0m0 12h0m0 5h0m0 1h0m0 25h0m0 5h0m0 5h0m1-72h0m0 16h0m0 9h0m0 13h0m0 1h0m0 3h0m0 15h0m1-70h0m0 27h0m0 1h0m0 18h0m0 13h0m0 1h0m1-36h0m0 10h0m0 8h0m0 4h0m0 26h0m0 26h0m1-69h0m0 3h0m0 10h0m0 9h0m0 3h0m0 17h0m1-72h0m0 25h0m0 25h0m0 4h0m0 5h0m0 27h0m1-56h0m0 2h0m0 11h0m0 2h0m0 9h0m0 2h0m0 1h0m0 25h0m1-81h0m0 13h0m0 11h0m0 2h0m0 19h0m0 8h0m0 13h0m0 16h0m1-78h0m0 15h0m0 10h0m0 8h0m0 3h0m0 20h0m0 1h0m1-45h0m0 14h0m0 2h0m0 3h0m0 18h0m0 13h0m0 24h0m0 9h0m1-77h0m0 10h0m0 1h0m0 4h0m0 7h0m0 5h0m0 1h0m0 32h0m1-56h0m0 4h0m0 8h0m0 3h0m0 20h0m0 11h0m1-84h0m0 30h0m0 11h0m0 1h0m0 10h0m0 6h0m0 6h0m1-36h0m0 10h0m0 1h0m0 7h0m0 4h0m0 7h0m0 19h0m0 16h0m1-77h0m0 5h0m0 46h0m0 1h0m0 7h0m0 7h0m0 5h0m0 3h0m1-49h0m0 2h0m0 12h0m0 7h0m0 3h0m0 4h0m0 16h0m1-49h0m0 8h0m0 2h0m0 20h0m0 17h0m0 2h0m0 3h0m1-76h0m0 18h0m0 4h0m0 9h0m0 5h0m0 2h0m0 4h0m0 57h0m1-77h0m0 5h0m0 15h0m0 5h0m0 1h0m0 27h0m0 14h0m1-87h0m0 4h0m0 8h0m0 5h0m0 6h0m0 2h0m0 28h0m0 33h0m1-76h0m0 7h0m0 15h0m0 10h0m0 3h0m0 2h0m0 19h0m0 23h0m1-54h0m0 3h0m0 1h0m0 5h0m0 16h0m0 1h0m0 7h0m0 9h0m1-70h0m0 16h0m0 24h0m0 4h0m0 6h0m0 3h0m0 3h0m1-46h0m0 6h0m0 1h0m0 5h0m0 14h0m0 1h0m0 8h0m1-63h0m0 11h0m0 5h0m0 14h0m0 14h0m0 5h0m0 21h0m0 12h0m1-52h0m0 12h0m0 14h0m0 14h0m0 9h0m0 3h0m0 2h0m1-58h0m0 7h0m0 15h0m0 6h0m0 11h0m0 2h0m0 13h0m0 3h0m1-56h0m0 4h0m0 4h0m0 21h0m0 9h0m0 7h0m0 19h0m1-41h0m0 3h0m0 7h0m0 5h0m0 3h0m0 1h0m1-53h0m0 16h0m0 7h0m0 3h0m0 15h0m0 3h0m0 7h0m0 7h0m1-80h0m0 28h0m0 4h0m0 2h0m0 12h0m0 8h0m0 5h0m0 24h0m1-48h0m0 9h0m0 13h0m0 22h0m0 3h0m0 17h0m0 22h0m1-97h0m0 15h0m0 14h0m0 1h0m0 6h0m0 8h0m0 10h0m1-50h0m0 18h0m0 9h0m0 9h0m0 5h0m0 2h0m0 8h0m0 15h0m1-66h0m0 4h0m0 29h0m0 7h0m0 7h0m0 4h0m0 8h0m0 6h0m1-63h0m0 27h0m0 8h0m0 7h0m0 11h0m0 27h0m1-82h0m0 4h0m0 20h0m0 7h0m0 9h0m0 11h0m0 19h0m0 12h0m1-70h0m0 7h0m0 12h0m0 4h0m0 2h0m0 3h0m0 5h0m0 7h0m1-54h0m0 15h0m0 19h0m0 2h0m0 19h0m0 2h0m1-42h0m0 3h0m0 5h0m0 12h0m0 4h0m0 2h0m0 17h0m0 5h0m1-71h0m0 27h0m0 9h0m0 12h0m0 2h0m0 4h0m0 1h0m1-48h0m0 7h0m0 16h0m0 2h0m0 3h0m0 34h0m0 6h0m1-91h0m0 10h0m0 35h0m0 10h0m0 2h0m0 1h0m0 1h0m0 15h0m1-30h0m0 23h0m0 2h0m0 1h0m0 3h0m0 1h0m0 10h0m0 13h0m1-72h0m0 21h0m0 7h0m0 4h0m0 11h0m0 5h0m0 6h0m1-40h0m0 9h0m0 1h0m0 11h0m0 8h0m0 16h0m0 8h0m1-71h0m0 13h0m0 7h0m0 6h0m0 1h0m0 5h0m0 2h0m0 6h0m1-29h0m0 8h0m0 7h0m0 9h0m0 6h0m0 5h0m0 3h0m0 2h0m1-33h0m0 5h0m0 5h0m0 8h0m0 9h0m0 13h0m0 1h0m1-48h0m0 30h0m0 8h0m0 11h0m0 3h0m0 5h0m0 6h0m1-64h0m0 11h0m0 12h0m0 2h0m0 26h0m0 9h0m0 19h0m1-92h0m0 7h0m0 10h0m0 22h0m0 4h0m0 4h0m0 36h0m1-81h0m0 12h0m0 4h0m0 12h0m0 29h0m0 3h0m0 10h0m0 1h0m1-87h0m0 27h0m0 14h0m0 22h0m0 1h0m0 26h0m0 3h0m0 3h0m1-54h0m0 12h0m0 6h0m0 2h0m0 17h0m0 2h0m0 14h0m1-56h0m0 5h0m0 1h0m0 2h0m0 23h0m0 6h0m0 36h0m1-88h0m0 6h0m0 5h0m0 1h0m0 23h0m0 7h0m0 6h0m0 28h0m1-60h0m0 7h0m0 11h0m0 5h0m0 2h0m0 4h0m0 2h0m0 7h0m1-61h0m0 8h0m0 18h0m0 13h0m0 33h0m0 3h0m0 12h0m1-55h0m0 4h0m0 15h0m0 7h0m0 2h0m0 5h0m1-61h0m0 16h0m0 2h0m0 21h0m0 22h0m0 4h0m0 3h0m0 12h0m1-51h0m0 1h0m0 18h0m0 1h0m0 9h0m0 1h0m0 10h0m1-72h0m0 11h0m0 22h0m0 8h0m0 19h0m0 2h0m0 2h0m0 2h0m1-55h0m0 1h0m0 3h0m0 19h0m0 22h0m0 11h0m0 7h0m0 1h0m1-70h0m0 27h0m0 11h0m0 6h0m0 9h0m0 14h0m1-41h0m0 1h0m0 13h0m0 3h0m0 19h0m0 2h0m0 2h0m0 15h0m1-68h0m0 17h0m0 2h0m0 1h0m0 13h0m0 6h0m0 2h0m0 28h0m1-70h0m0 1h0m0 10h0m0 6h0m0 15h0m0 4h0m0 2h0m0 4h0m1-18h0m0 8h0m0 5h0m0 3h0m0 18h0m0 11h0m1-88h0m0 37h0m0 1h0m0 3h0m0 15h0m0 4h0m0 7h0m0 27h0m1-88h0m0 17h0m0 3h0m0 3h0m0 14h0m0 2h0m0 19h0m0 12h0m1-48h0m0 7h0m0 18h0m0 2h0m0 3h0m0 3h0m0 29h0m1-70h0m0 17h0m0 7h0m0 14h0m0 3h0m0 9h0m0 1h0m0 7h0m1-85h0m0 33h0m0 6h0m0 5h0m0 7h0m0 11h0m0 1h0m0 28h0m1-26h0m0 1h0m0 2h0m0 7h0m0 4h0m0 17h0m1-66h0m0 9h0m0 5h0m0 17h0m0 8h0m0 16h0m0 3h0m0 6h0m1-59h0m0 2h0m0 5h0m0 4h0m0 8h0m0 5h0m0 33h0m0 9h0m1-67h0m0 1h0m0 13h0m0 8h0m0 1h0m0 5h0m0 8h0m1-74h0m0 31h0m0 19h0m0 3h0m0 8h0m0 5h0m0 8h0m1-42h0m0 9h0m0 2h0m0 7h0m0 3h0m0 1h0m0 10h0m0 8h0m1-42h0m0 4h0m0 6h0m0 3h0m0 26h0m0 4h0m0 2h0m0 17h0m1-59h0m0 21h0m0 8h0m0 1h0m0 1h0m0 19h0m0 2h0m1-39h0m0 5h0m0 3h0m0 4h0m0 2h0m0 4h0m0 5h0m0 9h0m1-52h0m0 12h0m0 2h0m0 8h0m0 5h0m0 22h0m0 28h0m0 3h0m1-102h0m0 37h0m0 16h0m0 1h0m0 1h0m0 2h0m0 24h0m1-80h0m0 38h0m0 3h0m0 18h0m0 2h0m0 13h0m0 1h0m0 26h0m1-72h0m0 2h0m0 4h0m0 15h0m0 2h0m0 9h0m0 17h0m0 11h0m1-69h0m0 7h0m0 21h0m0 14h0m0 4h0m0 2h0m0 12h0m1-68h0m0 17h0m0 18h0m0 4h0m0 11h0m0 4h0m0 6h0m0 15h0m1-88h0m0 27h0m0 9h0m0 13h0m0 5h0m0 1h0m0 14h0m0 30h0m1-78h0m0 23h0m0 19h0m0 7h0m0 4h0m0 4h0m0 10h0m0 9h0m1-75h0m0 14h0m0 1h0m0 14h0m0 7h0m0 7h0m0 1h0m1-52h0m0 24h0m0 3h0m0 11h0m0 2h0m0 4h0m1-19h0m0 2h0m0 9h0m0 1h0m0 8h0m0 6h0m0 12h0m0 14h0m1-95h0m0 22h0m0 10h0m0 4h0m0 3h0m0 10h0m0 50h0m1-70h0m0 18h0m0 1h0m0 1h0m0 4h0m0 14h0m0 10h0m0 22h0m1-62h0m0 6h0m0 10h0m0 6h0m0 8h0m0 1h0m0 1h0m0 8h0m1-42h0m0 12h0m0 10h0m0 3h0m0 25h0m0 1h0m1-52h0m0 8h0m0 12h0m0 2h0m0 7h0m0 4h0m0 33h0m1-90h0m0 10h0m0 5h0m0 7h0m0 21h0m0 16h0m0 3h0m0 8h0m1-53h0m0 19h0m0 9h0m0 9h0m0 14h0m0 1h0m0 1h0m0 1h0m1-59h0m0 18h0m0 16h0m0 3h0m0 14h0m0 4h0m0 11h0m1-77h0m0 20h0m0 18h0m0 1h0m0 14h0m0 6h0m1-73h0m0 11h0m0 19h0m0 8h0m0 17h0m0 13h0m0 15h0m0 1h0m1-32h0m0 5h0m0 6h0m0 2h0m0 21h0m0 18h0m1-78h0m0 1h0m0 16h0m0 1h0m0 7h0m0 5h0m0 4h0m0 1h0m1-32h0m0 30h0m0 3h0m0 1h0m0 1h0m0 2h0m0 4h0m0 3h0m1-41h0m0 10h0m0 3h0m0 24h0m0 15h0m0 5h0m0 25h0m1-89h0m0 37h0m0 7h0m0 2h0m0 3h0m0 38h0m1-74h0m0 14h0m0 17h0m0 1h0m0 2h0m0 6h0m0 7h0m1-43h0m0 1h0m0 11h0m0 5h0m0 10h0m0 10h0m0 11h0m1-52h0m0 8h0m0 23h0m0 1h0m0 6h0m0 5h0m0 30h0m1-105h0m0 8h0m0 25h0m0 4h0m0 1h0m0 15h0m0 3h0m0 35h0m1-43h0m0 2h0m0 1h0m0 1h0m0 6h0m0 10h0m0 2h0m0 18h0m1-89h0m0 33h0m0 9h0m0 23h0m0 4h0m0 8h0m0 17h0m1-92h0m0 6h0m0 15h0m0 6h0m0 18h0m0 2h0m0 2h0m0 19h0m1-73h0m0 33h0m0 6h0m0 1h0m0 3h0m0 16h0m0 15h0m0 15h0m1-63h0m0 5h0m0 16h0m0 4h0m0 7h0m0 11h0m0 3h0m1-47h0m0 12h0m0 7h0m0 2h0m0 12h0m0 3h0m0 7h0m0 5h0m1-70h0m0 8h0m0 23h0m0 12h0m0 2h0m0 9h0m0 1h0m0 11h0m1-39h0m0 11h0m0 13h0m0 7h0m0 5h0m0 4h0m0 14h0m1-47h0m0 1h0m0 2h0m0 2h0m0 10h0m0 12h0m0 5h0m0 20h0m1-87h0m0 43h0m0 4h0m0 8h0m0 4h0m0 3h0m0 5h0m0 9h0m1-42h0m0 16h0m0 3h0m0 6h0m0 2h0m0 34h0m0 3h0m1-54h0m0 5h0m0 10h0m0 5h0m0 1h0m0 2h0m0 8h0m1-23h0m0 1h0m0 1h0m0 9h0m0 9h0m0 3h0m0 11h0m0 6h0m1-63h0m0 22h0m0 8h0m0 6h0m0 7h0m0 7h0m1-59h0m0 4h0m0 16h0m0 8h0m0 5h0m0 10h0m0 12h0m1-56h0m0 29h0m0 14h0m0 4h0m0 5h0m0 6h0m0 4h0m0 4h0m1-71h0m0 28h0m0 14h0m0 4h0m0 2h0m0 1h0m0 6h0m0 27h0m1-67h0m0 11h0m0 8h0m0 2h0m0 4h0m0 42h0m1-61h0m0 6h0m0 16h0m0 2h0m0 7h0m0 9h0m0 10h0m1-43h0m0 10h0m0 1h0m0 9h0m0 11h0m0 4h0m0 5h0m0 20h0m1-60h0m0 1h0m0 15h0m0 3h0m0 11h0m0 23h0m0 1h0m0 3h0m1-65h0m0 1h0m0 1h0m0 2h0m0 11h0m0 9h0m0 22h0m1-47h0m0 21h0m0 6h0m0 3h0m0 3h0m0 13h0m0 13h0m1-86h0m0 32h0m0 9h0m0 7h0m0 4h0m0 4h0m0 7h0m0 6h0m1-44h0m0 11h0m0 23h0m0 5h0m0 2h0m0 4h0m0 6h0m1-78h0m0 26h0m0 7h0m0 1h0m0 6h0m0 7h0m0 50h0m0 3h0m1-87h0m0 8h0m0 1h0m0 2h0m0 10h0m0 16h0m0 4h0m0 11h0m1-40h0m0 7h0m0 1h0m0 7h0m0 5h0m0 19h0m1-42h0m0 7h0m0 10h0m0 2h0m0 5h0m0 5h0m0 25h0m0 1h0m1-65h0m0 9h0m0 6h0m0 14h0m0 3h0m0 3h0m0 11h0m0 8h0m1-43h0m0 1h0m0 4h0m0 8h0m0 6h0m0 35h0m0 25h0m1-82h0m0 19h0m0 15h0m0 2h0m0 6h0m0 2h0m0 26h0m0 9h0m1-77h0m0 1h0m0 7h0m0 10h0m0 4h0m0 12h0m0 5h0m0 8h0m1-55h0m0 8h0m0 10h0m0 2h0m0 8h0m0 18h0m0 18h0m0 14h0m1-68h0m0 11h0m0 3h0m0 15h0m0 9h0m0 2h0m0 18h0m1-77h0m0 22h0m0 1h0m0 1h0m0 32h0m0 11h0m0 11h0m0 4h0m1-46h0m0 1h0m0 6h0m0 3h0m0 3h0m0 4h0m0 19h0m0 19h0m1-81h0m0 26h0m0 2h0m0 16h0m0 5h0m0 21h0m1-77h0m0 12h0m0 6h0m0 10h0m0 19h0m0 12h0m0 5h0m0 9h0m1-74h0m0 29h0m0 2h0m0 12h0m0 4h0m0 18h0m1-58h0m0 1h0m0 12h0m0 8h0m0 1h0m0 15h0m0 2h0m1-42h0m0 12h0m0 9h0m0 16h0m0 20h0m0 3h0m0 14h0m1-102h0m0 45h0m0 7h0m0 24h0m0 7h0m0 5h0m0 14h0m0 7h0m1-88h0m0 28h0m0 10h0m0 1h0m0 7h0m0 7h0m1-41h0m0 2h0m0 16h0m0 8h0m0 6h0m0 10h0m1-23h0m0 3h0m0 3h0m0 7h0m0 5h0m0 19h0m0 10h0m1-44h0m0 25h0m0 4h0m0 14h0m0 5h0m0 7h0m0 15h0m1-95h0m0 4h0m0 5h0m0 4h0m0 3h0m0 36h0m0 9h0m1-85h0m0 59h0m0 1h0m0 5h0m0 14h0m0 11h0m0 23h0m1-63h0m0 8h0m0 1h0m0 6h0m0 3h0m0 8h0m0 2h0m0 3h0m1-47h0m0 2h0m0 6h0m0 4h0m0 12h0m0 6h0m0 13h0m1-46h0m0 12h0m0 2h0m0 17h0m0 5h0m0 1h0m0 6h0m1-44h0m0 1h0m0 18h0m0 22h0m0 5h0m0 3h0m0 16h0m1-75h0m0 18h0m0 9h0m0 8h0m0 2h0m0 1h0m0 23h0m1-45h0m0 4h0m0 4h0m0 8h0m0 19h0m0 11h0m0 8h0m0 2h0m1-56h0m0 10h0m0 10h0m0 10h0m0 2h0m0 18h0m0 5h0m1-53h0m0 11h0m0 3h0m0 18h0m0 4h0m0 3h0m0 10h0m0 1h0m1-60h0m0 24h0m0 7h0m0 3h0m0 15h0m0 28h0m0 4h0m1-68h0m0 4h0m0 5h0m0 10h0m0 12h0m0 1h0m0 25h0m0 1h0m1-72h0m0 8h0m0 1h0m0 5h0m0 26h0m0 1h0m0 22h0m0 10h0m1-100h0m0 41h0m0 5h0m0 10h0m0 1h0m0 1h0m0 27h0m1-64h0m0 23h0m0 5h0m0 11h0m0 9h0m0 6h0m0 26h0m1-78h0m0 16h0m0 6h0m0 9h0m0 31h0m0 13h0m0 9h0m1-66h0m0 16h0m0 3h0m0 4h0m0 7h0m0 5h0m0 34h0m1-85h0m0 32h0m0 1h0m0 2h0m0 3h0m0 6h0m0 6h0m0 24h0m1-75h0m0 27h0m0 2h0m0 9h0m0 14h0m0 12h0m0 4h0m1-80h0m0 8h0m0 9h0m0 9h0m0 21h0m0 3h0m0 1h0m0 5h0m1-42h0m0 26h0m0 21h0m0 6h0m0 5h0m0 19h0m1-86h0m0 35h0m0 3h0m0 19h0m0 6h0m0 5h0m0 2h0m0 4h0m1-78h0m0 8h0m0 6h0m0 6h0m0 16h0m0 5h0m0 4h0m1-44h0m0 3h0m0 24h0m0 12h0m0 5h0m0 34h0m0 23h0m1-90h0m0 21h0m0 1h0m0 28h0m0 7h0m0 6h0m0 23h0m1-90h0m0 10h0m0 23h0m0 2h0m0 3h0m0 5h0m0 20h0m0 14h0m1-49h0m0 12h0m0 1h0m0 1h0m0 2h0m0 1h0m0 47h0m1-72h0m0 8h0m0 1h0m0 4h0m0 11h0m0 8h0m0 29h0m1-63h0m0 15h0m0 8h0m0 2h0m0 3h0m0 7h0m0 9h0m0 4h0m1-43h0m0 1h0m0 1h0m0 11h0m0 4h0m0 11h0m0 9h0m1-47h0m0 11h0m0 14h0m0 1h0m0 14h0m0 15h0m0 3h0m1-70h0m0 31h0m0 3h0m0 1h0m0 12h0m0 12h0m0 16h0m0 4h0m1-65h0m0 9h0m0 10h0m0 3h0m0 5h0m0 5h0m0 3h0m0 15h0m1-84h0m0 11h0m0 38h0m0 23h0m0 20h0m0 5h0m1-54h0m0 15h0m0 1h0m0 7h0m0 3h0m1-28h0m0 2h0m0 11h0m0 6h0m0 3h0m0 4h0m0 9h0m0 12h0m1-65h0m0 14h0m0 17h0m0 12h0m0 16h0m0 2h0m0 19h0m1-96h0m0 30h0m0 6h0m0 11h0m0 18h0m0 9h0m0 1h0m1-49h0m0 6h0m0 5h0m0 17h0m0 3h0m0 16h0m0 7h0m1-59h0m0 21h0m0 13h0m0 5h0m0 23h0m0 11h0m1-79h0m0 6h0m0 28h0m0 3h0m0 4h0m0 34h0m0 2h0m1-61h0m0 2h0m0 2h0m0 1h0m0 14h0m0 11h0m0 5h0m0 11h0m1-59h0m0 20h0m0 7h0m0 6h0m0 7h0m0 3h0m0 7h0m0 34h0m1-68h0m0 20h0m0 3h0m0 1h0m0 14h0m0 6h0m1-25h0m0 4h0m0 10h0m0 6h0m0 6h0m0 6h0m0 4h0m1-71h0m0 9h0m0 1h0m0 5h0m0 4h0m0 2h0m0 13h0m0 14h0m1-50h0m0 9h0m0 18h0m0 2h0m0 2h0m0 8h0m0 40h0m1-88h0m0 25h0m0 2h0m0 17h0m0 1h0m0 11h0m0 9h0m1-44h0m0 15h0m0 6h0m0 15h0m0 5h0m0 7h0m0 7h0m1-50h0m0 5h0m0 12h0m0 9h0m0 4h0m0 6h0m0 3h0m1-34h0m0 12h0m0 3h0m0 15h0m0 9h0m0 4h0m0 16h0m0 2h0m1-106h0m0 53h0m0 3h0m0 6h0m0 1h0m0 20h0m0 3h0m0 24h0m1-102h0m0 33h0m0 13h0m0 1h0m0 9h0m0 12h0m0 2h0m0 8h0m1-77h0m0 36h0m0 1h0m0 7h0m0 10h0m0 2h0m0 10h0m1-54h0m0 7h0m0 6h0m0 13h0m0 12h0m0 6h0m0 20h0m0 7h0m1-61h0m0 8h0m0 13h0m0 15h0m0 9h0m0 12h0m0 1h0m0 9h0m1-67h0m0 11h0m0 6h0m0 4h0m0 9h0m0 6h0m0 1h0m1-29h0m0 9h0m0 4h0m0 10h0m0 1h0m0 5h0m0 21h0m0 16h0m1-105h0m0 59h0m0 8h0m0 3h0m0 1h0m0 12h0m0 1h0m0 7h0m1-46h0m0 5h0m0 6h0m0 13h0m0 17h0m0 5h0m0 3h0m1-101h0m0 50h0m0 5h0m0 7h0m0 9h0m0 2h0m0 13h0m0 7h0m1-57h0m0 4h0m0 4h0m0 12h0m0 10h0m0 1h0m0 15h0m0 9h0m1-67h0m0 42h0m0 2h0m0 3h0m0 2h0m0 4h0m0 21h0m1-79h0m0 25h0m0 7h0m0 3h0m0 4h0m0 15h0m1-42h0m0 7h0m0 5h0m0 10h0m0 18h0m0 14h0m0 7h0m0 1h0m1-58h0m0 5h0m0 10h0m0 7h0m0 4h0m0 5h0m0 15h0m0 10h0m1-73h0m0 29h0m0 18h0m0 4h0m0 7h0m0 8h0m0 12h0m1-60h0m0 7h0m0 14h0m0 13h0m0 1h0m0 6h0m0 1h0m0 28h0m1-63h0m0 3h0m0 1h0m0 1h0m0 10h0m0 3h0m0 1h0m1-22h0m0 5h0m0 19h0m0 10h0m0 7h0m0 16h0m0 7h0m1-75h0m0 30h0m0 9h0m0 1h0m0 11h0m0 8h0m0 5h0m0 10h0m1-68h0m0 3h0m0 14h0m0 2h0m0 4h0m0 1h0m0 19h0m0 32h0m1-73h0m0 6h0m0 18h0m0 13h0m0 12h0m0 8h0m0 8h0m1-85h0m0 7h0m0 11h0m0 21h0m0 8h0m0 2h0m0 12h0m0 27h0m1-57h0m0 18h0m0 8h0m0 10h0m0 16h0m0 2h0m0 5h0m0 12h0m1-65h0m0 12h0m0 1h0m0 3h0m0 4h0m0 11h0m0 3h0m1-56h0m0 15h0m0 11h0m0 20h0m0 10h0m0 6h0m0 5h0m1-70h0m0 8h0m0 1h0m0 16h0m0 2h0m0 16h0m0 10h0m0 2h0m1-31h0m0 3h0m0 2h0m0 11h0m0 9h0m0 7h0m0 3h0m0 18h0m1-65h0m0 6h0m0 6h0m0 2h0m0 6h0m0 2h0m0 26h0m1-60h0m0 8h0m0 7h0m0 2h0m0 11h0m0 1h0m0 13h0m0 36h0m1-63h0m0 21h0m0 1h0m0 6h0m0 2h0m0 5h0m0 17h0m1-73h0m0 13h0m0 5h0m0 14h0m0 11h0m0 14h0m0 18h0m1-64h0m0 5h0m0 25h0m0 6h0m0 2h0m0 9h0m0 8h0m1-42h0m0 4h0m0 6h0m0 6h0m0 13h0m0 24h0m1-90h0m0 33h0m0 19h0m0 1h0m0 4h0m0 17h0m0 23h0m0 9h0m1-64h0m0 7h0m0 4h0m0 5h0m0 8h0m0 10h0m0 3h0m1-48h0m0 13h0m0 2h0m0 9h0m0 11h0m0 2h0m0 7h0m0 37h0m1-85h0m0 7h0m0 8h0m0 13h0m0 12h0m0 8h0m0 8h0m0 3h0m1-37h0m0 4h0m0 1h0m0 4h0m0 4h0m0 10h0m0 9h0m1-69h0m0 21h0m0 2h0m0 22h0m0 32h0m0 1h0m0 5h0m0 4h0m1-63h0m0 3h0m0 12h0m0 1h0m0 1h0m0 17h0m0 5h0m1-51h0m0 1h0m0 49h0m0 4h0m0 14h0m0 1h0m0 7h0m1-79h0m0 26h0m0 10h0m0 6h0m0 2h0m0 4h0m0 5h0m0 19h0m1-75h0m0 20h0m0 5h0m0 4h0m0 8h0m0 4h0m0 32h0m1-73h0m0 12h0m0 12h0m0 12h0m0 1h0m0 35h0m1-62h0m0 21h0m0 1h0m0 10h0m0 11h0m0 4h0m0 15h0m0 8h0m1-67h0m0 18h0m0 19h0m0 1h0m0 6h0m0 2h0m0 32h0m1-101h0m0 13h0m0 8h0m0 21h0m0 3h0m0 13h0m0 5h0m1-43h0m0 14h0m0 3h0m0 2h0m0 5h0m0 35h0m1-72h0m0 31h0m0 1h0m0 2h0m0 15h0m0 6h0m0 14h0m1-42h0m0 15h0m0 10h0m0 8h0m0 3h0m0 2h0m0 23h0m1-81h0m0 21h0m0 8h0m0 3h0m0 10h0m0 7h0m1-51h0m0 19h0m0 13h0m0 18h0m0 7h0m0 4h0m0 7h0m0 12h0m1-50h0m0 7h0m0 1h0m0 4h0m0 2h0m0 1h0m0 32h0m1-50h0m0 4h0m0 10h0m0 1h0m0 6h0m0 1h0m0 33h0m1-94h0m0 31h0m0 9h0m0 1h0m0 8h0m0 20h0m0 3h0m0 5h0m1-73h0m0 39h0m0 1h0m0 3h0m0 5h0m0 12h0m0 9h0m0 3h0m1-46h0m0 5h0m0 1h0m0 5h0m0 21h0m0 8h0m0 32h0m1-98h0m0 1h0m0 29h0m0 5h0m0 8h0m0 3h0m0 7h0m1-57h0m0 26h0m0 6h0m0 24h0m0 4h0m0 7h0m0 9h0m0 4h0m1-50h0m0 11h0m0 1h0m0 5h0m0 2h0m0 5h0m0 13h0m1-61h0m0 17h0m0 5h0m0 15h0m0 12h0m0 9h0m0 9h0m1-41h0m0 1h0m0 11h0m0 3h0m0 4h0m0 2h0m0 38h0m0 4h0m1-53h0m0 11h0m0 5h0m0 4h0m0 3h0m0 27h0m0 5h0m1-68h0m0 3h0m0 5h0m0 3h0m0 14h0m0 1h0m1-45h0m0 11h0m0 24h0m0 6h0m0 5h0m0 22h0m0 2h0m0 11h0m1-49h0m0 1h0m0 8h0m0 15h0m0 12h0m0 7h0m0 1h0m0 2h0m1-89h0m0 28h0m0 7h0m0 6h0m0 9h0m0 22h0m0 20h0m1-94h0m0 31h0m0 12h0m0 8h0m0 1h0m0 12h0m0 17h0m1-90h0m0 48h0m0 4h0m0 2h0m0 1h0m0 14h0m0 11h0m0 12h0m1-56h0m0 1h0m0 11h0m0 9h0m0 6h0m0 22h0m0 2h0m0 4h0m1-40h0m0 1h0m0 42h0m0 3h0m0 7h0m0 1h0m0 3h0m1-75h0m0 25h0m0 2h0m0 5h0m0 2h0m0 10h0m0 9h0m0 20h0m1-93h0m0 5h0m0 19h0m0 4h0m0 6h0m0 7h0m0 2h0m0 31h0m1-34h0m0 16h0m0 3h0m0 2h0m0 3h0m0 22h0m1-92h0m0 23h0m0 12h0m0 12h0m0 4h0m0 15h0m0 2h0m0 16h0m1-45h0m0 2h0m0 4h0m0 6h0m0 3h0m0 13h0m0 1h0m0 22h0m1-73h0m0 21h0m0 17h0m0 2h0m0 2h0m0 11h0m0 6h0m1-62h0m0 8h0m0 7h0m0 9h0m0 10h0m0 12h0m0 3h0m0 6h0m1-65h0m0 21h0m0 1h0m0 17h0m0 6h0m0 5h0m0 39h0m0 15h0m1-73h0m0 2h0m0 19h0m0 2h0m0 1h0m0 9h0m0 10h0m1-36h0m0 8h0m0 8h0m0 5h0m0 19h0m0 4h0m0 17h0m1-66h0m0 3h0m0 5h0m0 9h0m0 4h0m0 4h0m0 1h0m0 32h0m1-79h0m0 13h0m0 12h0m0 12h0m0 9h0m0 3h0m1-48h0m0 13h0m0 10h0m0 1h0m0 12h0m0 6h0m0 10h0m1-38h0m0 4h0m0 4h0m0 13h0m0 6h0m0 9h0m0 15h0m0 9h0m1-101h0m0 42h0m0 16h0m0 7h0m0 2h0m0 8h0m0 2h0m0 13h0m1-91h0m0 40h0m0 3h0m0 10h0m0 8h0m0 15h0m0 36h0m1-87h0m0 9h0m0 15h0m0 7h0m0 10h0m0 10h0m0 12h0m1-69h0m0 26h0m0 4h0m0 1h0m0 4h0m0 10h0m0 4h0m0 3h0m1-52h0m0 8h0m0 2h0m0 13h0m0 4h0m0 21h0m0 12h0m0 15h0m1-65h0m0 20h0m0 5h0m0 6h0m0 2h0m0 5h0m1-40h0m0 18h0m0 6h0m0 7h0m0 41h0m0 2h0m0 9h0m1-83h0m0 3h0m0 27h0m0 7h0m0 4h0m0 11h0m0 1h0m0 39h0m1-81h0m0 7h0m0 3h0m0 6h0m0 7h0m0 8h0m0 10h0m1-35h0m0 10h0m0 1h0m0 3h0m0 11h0m0 1h0m0 2h0m0 2h0m1-38h0m0 9h0m0 1h0m0 11h0m0 23h0m0 1h0m0 12h0m1-60h0m0 19h0m0 7h0m0 4h0m0 3h0m0 20h0m0 15h0m1-68h0m0 6h0m0 19h0m0 8h0m0 1h0m0 5h0m0 9h0m0 7h0m1-69h0m0 21h0m0 1h0m0 9h0m0 6h0m0 1h0m0 45h0m1-75h0m0 36h0m0 2h0m0 1h0m0 2h0m0 10h0m0 1h0m1-43h0m0 7h0m0 11h0m0 5h0m0 15h0m0 7h0m0 9h0m0 7h0m1-48h0m0 1h0m0 5h0m0 2h0m0 3h0m0 4h0m0 3h0m0 24h0m1-63h0m0 18h0m0 1h0m0 26h0m0 10h0m0 4h0m0 7h0m0 17h0m1-58h0m0 4h0m0 14h0m0 5h0m0 13h0m0 5h0m0 28h0m1-73h0m0 5h0m0 3h0m0 10h0m0 32h0m0 6h0m0 3h0m0 1h0m1-52h0m0 8h0m0 3h0m0 8h0m0 4h0m0 2h0m0 15h0m0 9h0m1-68h0m0 11h0m0 16h0m0 8h0m0 1h0m0 7h0m0 6h0m1-59h0m0 33h0m0 3h0m0 3h0m0 12h0m0 8h0m0 19h0m1-73h0m0 13h0m0 7h0m0 15h0m0 1h0m0 2h0m0 25h0m1-43h0m0 5h0m0 9h0m0 2h0m0 10h0m0 40h0m1-70h0m0 7h0m0 15h0m0 1h0m0 19h0m0 3h0m0 4h0m0 3h0m1-61h0m0 20h0m0 2h0m0 3h0m0 6h0m0 5h0m0 14h0m0 18h0m1-87h0m0 10h0m0 31h0m0 2h0m0 20h0m0 9h0m0 14h0m1-68h0m0 12h0m0 16h0m0 4h0m0 11h0m0 7h0m1-43h0m0 13h0m0 3h0m0 4h0m0 6h0m0 3h0m0 1h0m0 38h0m1-83h0m0 6h0m0 19h0m0 34h0m0 6h0m0 11h0m1-68h0m0 9h0m0 6h0m0 24h0m0 9h0m0 12h0m0 23h0m1-76h0m0 5h0m0 10h0m0 17h0m0 1h0m0 6h0m0 7h0m0 12h0m1-67h0m0 10h0m0 8h0m0 1h0m0 2h0m0 3h0m0 17h0m0 16h0m1-83h0m0 24h0m0 20h0m0 4h0m0 1h0m0 7h0m0 3h0m1-55h0m0 3h0m0 25h0m0 8h0m0 4h0m0 12h0m0 3h0m0 29h0m1-72h0m0 25h0m0 5h0m0 19h0m0 8h0m0 2h0m0 5h0m0 31h0m1-71h0m0 14h0m0 21h0m0 1h0m0 2h0m0 4h0m0 1h0m1-41h0m0 1h0m0 15h0m0 9h0m0 8h0m0 5h0m0 5h0m1-46h0m0 3h0m0 13h0m0 11h0m0 5h0m0 1h0m0 1h0m0 7h0m1-74h0m0 18h0m0 17h0m0 4h0m0 13h0m0 1h0m0 17h0m1-59h0m0 7h0m0 11h0m0 12h0m0 28h0m0 1h0m0 11h0m1-81h0m0 43h0m0 2h0m0 6h0m0 6h0m0 2h0m0 13h0m0 33h0m1-72h0m0 13h0m0 1h0m0 11h0m0 14h0m0 27h0m1-85h0m0 5h0m0 27h0m0 2h0m0 5h0m0 2h0m0 9h0m1-44h0m0 12h0m0 2h0m0 24h0m0 1h0m0 9h0m0 3h0m1-49h0m0 25h0m0 1h0m0 7h0m0 15h0m0 17h0m0 6h0m0 4h0m1-46h0m0 6h0m0 1h0m0 6h0m0 1h0m0 15h0m1-59h0m0 25h0m0 5h0m0 4h0m0 3h0m0 5h0m0 4h0m0 9h0m1-51h0m0 27h0m0 22h0m0 4h0m0 1h0m0 12h0m0 5h0m0 8h0m1-104h0m0 22h0m0 3h0m0 12h0m0 7h0m0 2h0m1-23h0m0 15h0m0 3h0m0 3h0m0 11h0m0 9h0m0 11h0m1-51h0m0 15h0m0 10h0m0 4h0m0 12h0m0 1h0m0 1h0m0 31h0m1-88h0m0 7h0m0 2h0m0 17h0m0 15h0m0 13h0m0 16h0m1-62h0m0 19h0m0 17h0m0 8h0m0 31h0m0 11h0m1-84h0m0 21h0m0 1h0m0 14h0m0 6h0m0 20h0m0 12h0m1-81h0m0 4h0m0 17h0m0 1h0m0 10h0m0 22h0m0 27h0m1-83h0m0 18h0m0 6h0m0 18h0m0 15h0m1-62h0m0 14h0m0 17h0m0 6h0m0 7h0m0 1h0m0 10h0m0 16h0m1-74h0m0 17h0m0 3h0m0 2h0m0 24h0m0 10h0m1-58h0m0 14h0m0 4h0m0 16h0m0 1h0m0 14h0m0 4h0m0 1h0m1-46h0m0 14h0m0 18h0m0 3h0m0 4h0m0 16h0m0 17h0m1-37h0m0 6h0m0 3h0m0 10h0m0 3h0m0 14h0m0 9h0m0 2h0m1-102h0m0 25h0m0 6h0m0 6h0m0 24h0m0 2h0m0 10h0m0 43h0m1-94h0m0 34h0m0 1h0m0 8h0m0 9h0m0 14h0m0 17h0m1-102h0m0 27h0m0 14h0m0 13h0m0 2h0m0 13h0m0 2h0m1-24h0m0 6h0m0 4h0m0 8h0m0 5h0m0 4h0m0 2h0m0 12h0m1-61h0m0 19h0m0 4h0m0 6h0m0 15h0m0 4h0m0 5h0m1-38h0m0 7h0m0 9h0m0 6h0m0 9h0m0 2h0m0 9h0m0 8h0m1-57h0m0 17h0m0 2h0m0 5h0m0 18h0m0 7h0m0 19h0m1-65h0m0 21h0m0 3h0m0 2h0m0 19h0m0 4h0m0 22h0m1-110h0m0 37h0m0 21h0m0 14h0m0 5h0m0 2h0m0 2h0m0 5h0m1-59h0m0 6h0m0 11h0m0 6h0m0 6h0m0 9h0m0 8h0m0 6h0m1-47h0m0 12h0m0 10h0m0 4h0m0 1h0m0 29h0m1-48h0m0 17h0m0 5h0m0 3h0m0 10h0m0 11h0m0 16h0m1-74h0m0 8h0m0 4h0m0 9h0m0 11h0m0 8h0m1-25h0m0 1h0m0 11h0m0 23h0m0 6h0m0 10h0m0 1h0m1-89h0m0 42h0m0 6h0m0 3h0m0 2h0m0 2h0m0 3h0m1-32h0m0 2h0m0 13h0m0 17h0m0 11h0m0 6h0m0 2h0m0 12h0m1-80h0m0 13h0m0 10h0m0 2h0m0 2h0m0 2h0m0 37h0m0 6h0m1-51h0m0 1h0m0 7h0m0 7h0m0 6h0m0 4h0m0 18h0m1-47h0m0 18h0m0 3h0m0 1h0m0 9h0m0 16h0m0 10h0m0 1h0m1-36h0m0 5h0m0 5h0m0 2h0m0 10h0m0 3h0m0 6h0m0 13h0m1-75h0m0 9h0m0 21h0m0 8h0m0 17h0m0 3h0m0 3h0m1-43h0m0 2h0m0 33h0m0 4h0m0 4h0m0 8h0m0 13h0m1-96h0m0 14h0m0 19h0m0 16h0m0 3h0m0 12h0m0 20h0m1-44h0m0 4h0m0 3h0m0 14h0m0 2h0m0 5h0m0 6h0m0 29h0m1-68h0m0 5h0m0 13h0m0 4h0m0 10h0m0 1h0m1-46h0m0 5h0m0 15h0m0 8h0m0 2h0m0 30h0m1-62h0m0 9h0m0 1h0m0 1h0m0 15h0m0 5h0m0 1h0m0 34h0m1-67h0m0 7h0m0 14h0m0 14h0m0 21h0m0 2h0m0 20h0m1-94h0m0 28h0m0 5h0m0 8h0m0 16h0m0 1h0m0 13h0m0 3h0m1-52h0m0 11h0m0 15h0m0 1h0m0 6h0m0 7h0m0 9h0m0 7h0m1-72h0m0 13h0m0 23h0m0 5h0m0 23h0m0 1h0m0 3h0m1-58h0m0 24h0m0 7h0m0 2h0m0 5h0m0 17h0m0 22h0m1-76h0m0 21h0m0 8h0m0 16h0m0 5h0m0 10h0m1-72h0m0 26h0m0 13h0m0 1h0m0 6h0m0 2h0m0 26h0m0 22h0m1-113h0m0 13h0m0 29h0m0 4h0m0 4h0m0 11h0m0 6h0m1-24h0m0 8h0m0 11h0m0 4h0m0 7h0m0 4h0m0 2h0m0 10h0m1-70h0m0 6h0m0 14h0m0 2h0m0 26h0m0 15h0m0 11h0m1-69h0m0 23h0m0 2h0m0 3h0m0 15h0m0 14h0m0 4h0m1-67h0m0 3h0m0 20h0m0 11h0m0 2h0m0 16h0m0 12h0m0 16h0m1-52h0m0 1h0m0 21h0m0 3h0m0 18h0m0 2h0m0 8h0m0 11h0m1-89h0m0 8h0m0 19h0m0 5h0m0 4h0m0 15h0m0 15h0m1-38h0m0 1h0m0 3h0m0 10h0m0 7h0m0 11h0m0 25h0m1-68h0m0 4h0m0 2h0m0 11h0m0 3h0m0 18h0m0 5h0m0 7h0m1-49h0m0 10h0m0 4h0m0 8h0m0 1h0m0 1h0m0 28h0m1-34h0m0 3h0m0 1h0m0 3h0m0 2h0m0 1h0m0 17h0m1-55h0m0 19h0m0 5h0m0 11h0m0 5h0m0 24h0m0 1h0m0 12h0m1-99h0m0 11h0m0 49h0m0 5h0m0 14h0m0 2h0m0 11h0m0 3h0m1-68h0m0 16h0m0 19h0m0 1h0m0 9h0m0 3h0m0 17h0m1-59h0m0 11h0m0 2h0m0 4h0m0 4h0m0 7h0m0 10h0m1-34h0m0 1h0m0 12h0m0 2h0m0 10h0m0 5h0m0 5h0m0 7h0m1-54h0m0 4h0m0 3h0m0 41h0m0 2h0m0 1h0m1-64h0m0 3h0m0 26h0m0 1h0m0 3h0m0 3h0m0 14h0m0 14h0m1-45h0m0 3h0m0 3h0m0 1h0m0 6h0m0 22h0m0 1h0m0 6h0m1-51h0m0 20h0m0 4h0m0 2h0m0 3h0m0 7h0m0 7h0m0 22h0m1-90h0m0 10h0m0 11h0m0 3h0m0 7h0m0 3h0m0 28h0m1-32h0m0 12h0m0 13h0m0 17h0m0 20h0m0 4h0m1-61h0m0 13h0m0 7h0m0 3h0m0 15h0m0 5h0m0 5h0m0 15h0m1-66h0m0 7h0m0 7h0m0 9h0m0 6h0m0 19h0m0 3h0m1-46h0m0 16h0m0 2h0m0 11h0m0 2h0m0 24h0m0 1h0m0 6h0m1-94h0m0 37h0m0 2h0m0 2h0m0 1h0m0 26h0m0 1h0m1-64h0m0 7h0m0 6h0m0 12h0m0 20h0m0 4h0m0 32h0m1-68h0m0 2h0m0 9h0m0 2h0m0 6h0m0 28h0m0 4h0m1-50h0m0 3h0m0 3h0m0 2h0m0 4h0m0 3h0m0 21h0m1-18h0m0 9h0m0 7h0m0 4h0m0 11h0m0 12h0m0 9h0m1-54h0m0 3h0m0 5h0m0 3h0m0 3h0m0 24h0m0 13h0m1-61h0m0 1h0m0 22h0m0 16h0m0 16h0m0 15h0m1-69h0m0 3h0m0 21h0m0 3h0m0 14h0m0 14h0m1-78h0m0 17h0m0 5h0m0 8h0m0 11h0m0 9h0m0 12h0m1-47h0m0 5h0m0 15h0m0 9h0m0 17h0m0 1h0m0 3h0m0 32h0m1-63h0m0 3h0m0 1h0m0 4h0m0 5h0m0 5h0m0 16h0m1-62h0m0 4h0m0 6h0m0 3h0m0 2h0m0 10h0m0 6h0m1-14h0m0 6h0m0 7h0m0 5h0m0 8h0m0 19h0m0 8h0m0 9h0m1-60h0m0 4h0m0 3h0m0 2h0m0 11h0m0 13h0m0 5h0m0 4h0m1-56h0m0 28h0m0 4h0m0 18h0m0 9h0m0 3h0m1-35h0m0 5h0m0 21h0m0 5h0m0 3h0m0 1h0m0 7h0m0 5h0m1-84h0m0 22h0m0 1h0m0 5h0m0 8h0m0 4h0m0 3h0m0 17h0m1-57h0m0 12h0m0 16h0m0 8h0m0 21h0m0 2h0m0 6h0m0 21h0m1-56h0m0 2h0m0 7h0m0 8h0m0 7h0m0 2h0m0 31h0m1-84h0m0 17h0m0 8h0m0 12h0m0 7h0m0 4h0m0 24h0m1-98h0m0 42h0m0 10h0m0 11h0m0 24h0m0 2h0m0 9h0m1-68h0m0 16h0m0 13h0m0 3h0m0 29h0m0 11h0m0 12h0m1-71h0m0 14h0m0 18h0m0 6h0m0 6h0m0 13h0m1-49h0m0 8h0m0 4h0m0 2h0m0 17h0m0 7h0m0 10h0m1-57h0m0 16h0m0 2h0m0 10h0m0 3h0m0 15h0m0 5h0m1-40h0m0 1h0m0 1h0m0 17h0m0 1h0m0 18h0m1-64h0m0 1h0m0 12h0m0 6h0m0 6h0m0 3h0m0 11h0m0 12h0m1-51h0m0 11h0m0 9h0m0 21h0m0 10h0m0 8h0m0 19h0m1-67h0m0 14h0m0 3h0m0 3h0m0 1h0m0 3h0m0 3h0m0 4h0m1-23h0m0 7h0m0 10h0m0 2h0m0 3h0m0 8h0m0 12h0m0 22h0m1-114h0m0 16h0m0 36h0m0 4h0m0 6h0m0 10h0m0 7h0m1-34h0m0 18h0m0 13h0m0 3h0m0 7h0m0 5h0m0 6h0m1-81h0m0 36h0m0 6h0m0 4h0m0 2h0m0 4h0m0 6h0m0 11h0m1-56h0m0 33h0m0 9h0m0 8h0m0 6h0m0 2h0m0 18h0m1-62h0m0 5h0m0 7h0m0 7h0m0 11h0m0 5h0m0 2h0m1-44h0m0 3h0m0 27h0m0 4h0m0 3h0m0 4h0m0 10h0m0 26h0m1-66h0m0 8h0m0 7h0m0 4h0m0 6h0m0 3h0m0 6h0m0 36h0m1-88h0m0 42h0m0 3h0m0 1h0m0 35h0m0 2h0m0 10h0m1-100h0m0 24h0m0 12h0m0 11h0m0 17h0m0 1h0m0 30h0m1-79h0m0 10h0m0 4h0m0 14h0m0 13h0m0 5h0m0 5h0m0 11h0m1-51h0m0 13h0m0 2h0m0 23h0m0 7h0m0 7h0m0 7h0m0 1h0m1-46h0m0 6h0m0 8h0m0 3h0m0 19h0m0 1h0m0 6h0m1-68h0m0 7h0m0 12h0m0 3h0m0 9h0m0 13h0m0 14h0m0 1h0m1-55h0m0 25h0m0 4h0m0 10h0m0 27h0m0 3h0m0 3h0m1-59h0m0 4h0m0 2h0m0 2h0m0 12h0m0 4h0m0 17h0m1-52h0m0 11h0m0 6h0m0 18h0m0 7h0m0 6h0m0 9h0m0 14h0m1-97h0m0 12h0m0 8h0m0 16h0m0 1h0m0 7h0m0 3h0m0 25h0m1-55h0m0 11h0m0 5h0m0 13h0m0 13h0m0 4h0m0 22h0m1-36h0m0 3h0m0 3h0m0 5h0m0 2h0m0 2h0m0 13h0m0 3h0m1-44h0m0 1h0m0 9h0m0 1h0m0 1h0m0 7h0m0 3h0m0 20h0m1-59h0m0 38h0m0 1h0m0 1h0m0 3h0m0 5h0m0 1h0m0 4h0m1-50h0m0 24h0m0 6h0m0 13h0m0 1h0m0 6h0m1-60h0m0 15h0m0 3h0m0 21h0m0 1h0m0 2h0m0 39h0m1-77h0m0 3h0m0 11h0m0 6h0m0 2h0m0 11h0m0 11h0m0 8h0m1-58h0m0 25h0m0 8h0m0 1h0m0 5h0m0 12h0m0 8h0m1-52h0m0 6h0m0 4h0m0 9h0m0 11h0m0 3h0m0 30h0m1-62h0m0 25h0m0 5h0m0 4h0m0 6h0m0 22h0m1-50h0m0 5h0m0 7h0m0 5h0m0 7h0m0 11h0m0 6h0m1-37h0m0 3h0m0 4h0m0 8h0m0 7h0m0 6h0m0 5h0m0 13h0m1-59h0m0 14h0m0 3h0m0 8h0m0 4h0m0 6h0m0 13h0m0 29h0m1-101h0m0 43h0m0 9h0m0 5h0m0 3h0m0 20h0m0 13h0m1-83h0m0 10h0m0 32h0m0 8h0m0 6h0m0 16h0m0 6h0m0 1h0m1-63h0m0 1h0m0 9h0m0 23h0m0 4h0m0 13h0m0 3h0m0 21h0m1-89h0m0 13h0m0 23h0m0 4h0m0 4h0m0 1h0m0 13h0m1-52h0m0 7h0m0 11h0m0 3h0m0 54h0m0 3h0m1-77h0m0 2h0m0 19h0m0 9h0m0 8h0m0 2h0m0 14h0m0 25h0m1-44h0m0 3h0m0 1h0m0 3h0m0 1h0m0 4h0m0 5h0m0 14h0m1-38h0m0 13h0m0 3h0m0 4h0m0 2h0m0 4h0m1-47h0m0 5h0m0 6h0m0 9h0m0 19h0m0 3h0m0 9h0m0 4h0m1-52h0m0 6h0m0 1h0m0 7h0m0 6h0m0 6h0m0 5h0m0 26h0m1-63h0m0 12h0m0 1h0m0 17h0m0 7h0m0 31h0m0 7h0m1-77h0m0 12h0m0 7h0m0 3h0m0 10h0m0 4h0m0 4h0m0 7h0m1-31h0m0 1h0m0 16h0m0 4h0m0 11h0m0 2h0m0 2h0m1-35h0m0 6h0m0 14h0m0 3h0m0 9h0m0 3h0m0 1h0m0 9h0m1-75h0m0 34h0m0 8h0m0 1h0m0 7h0m0 16h0m0 11h0m1-76h0m0 27h0m0 13h0m0 4h0m0 1h0m0 1h0m0 21h0m0 1h0m1-47h0m0 9h0m0 6h0m0 5h0m0 12h0m0 6h0m0 5h0m0 19h0m1-77h0m0 7h0m0 27h0m0 4h0m0 18h0m0 4h0m0 12h0m1-63h0m0 10h0m0 4h0m0 14h0m0 9h0m0 19h0m0 10h0m1-86h0m0 24h0m0 20h0m0 1h0m0 1h0m0 6h0m0 20h0m0 4h0m1-68h0m0 4h0m0 15h0m0 12h0m0 5h0m0 36h0m0 2h0m1-64h0m0 7h0m0 11h0m0 6h0m0 26h0m0 14h0m0 4h0m0 2h0m1-62h0m0 4h0m0 2h0m0 14h0m0 19h0m0 1h0m0 17h0m0 4h0m1-75h0m0 18h0m0 5h0m0 2h0m0 6h0m0 24h0m0 3h0m0 1h0m1-38h0m0 8h0m0 3h0m0 7h0m0 2h0m0 14h0m0 38h0m1-103h0m0 23h0m0 15h0m0 11h0m0 7h0m0 8h0m0 8h0m0 22h0m1-89h0m0 28h0m0 4h0m0 8h0m0 9h0m0 4h0m0 31h0m1-54h0m0 8h0m0 2h0m0 2h0m0 5h0m0 4h0m0 33h0m1-77h0m0 5h0m0 1h0m0 8h0m0 4h0m0 5h0m0 1h0m0 43h0m1-75h0m0 14h0m0 28h0m0 2h0m0 5h0m0 2h0m0 13h0m0 19h0m1-86h0m0 8h0m0 32h0m0 14h0m0 3h0m0 10h0m0 9h0m1-92h0m0 10h0m0 12h0m0 10h0m0 28h0m0 8h0m0 6h0m0 5h0m1-58h0m0 10h0m0 10h0m0 16h0m0 6h0m0 8h0m0 14h0m0 22h0m1-76h0m0 29h0m0 10h0m0 3h0m0 4h0m0 1h0m1-49h0m0 6h0m0 19h0m0 2h0m0 7h0m0 9h0m0 1h0m1-43h0m0 1h0m0 8h0m0 7h0m0 12h0m0 1h0m0 28h0m1-54h0m0 20h0m0 11h0m0 6h0m0 3h0m0 6h0m0 25h0m0 5h0m1-85h0m0 14h0m0 21h0m0 4h0m0 4h0m0 4h0m0 17h0m1-50h0m0 23h0m0 5h0m0 8h0m0 6h0m0 1h0m0 2h0m0 11h0m1-57h0m0 17h0m0 6h0m0 2h0m0 6h0m0 25h0m0 5h0m0 5h0m1-56h0m0 5h0m0 6h0m0 4h0m0 5h0m0 2h0m0 2h0m1-48h0m0 11h0m0 11h0m0 2h0m0 15h0m0 7h0m0 8h0m0 10h0m1-52h0m0 25h0m0 9h0m0 14h0m0 2h0m0 2h0m0 6h0m0 11h0m1-55h0m0 6h0m0 7h0m0 1h0m0 11h0m0 3h0m0 7h0m1-46h0m0 13h0m0 4h0m0 8h0m0 4h0m0 5h0m0 15h0m1-45h0m0 4h0m0 5h0m0 6h0m0 7h0m0 5h0m0 5h0m0 6h0m1-48h0m0 21h0m0 4h0m0 6h0m0 4h0m0 19h0m0 11h0m0 22h0m1-84h0m0 7h0m0 11h0m0 1h0m0 8h0m0 23h0m0 6h0m1-41h0m0 8h0m0 5h0m0 13h0m0 1h0m0 16h0m0 14h0m0 4h0m1-80h0m0 7h0m0 9h0m0 4h0m0 8h0m0 26h0m0 17h0m1-59h0m0 8h0m0 3h0m0 6h0m0 4h0m0 1h0m0 9h0m1-46h0m0 27h0m0 1h0m0 8h0m0 1h0m0 16h0m0 10h0m1-72h0m0 12h0m0 5h0m0 3h0m0 2h0m0 14h0m0 13h0m0 22h0m1-59h0m0 12h0m0 9h0m0 13h0m0 6h0m0 9h0m0 2h0m1-32h0m0 3h0m0 9h0m0 2h0m0 3h0m0 8h0m0 11h0m1-50h0m0 10h0m0 5h0m0 4h0m0 4h0m0 2h0m0 17h0m0 16h0m1-45h0m0 2h0m0 2h0m0 3h0m0 1h0m0 29h0m0 16h0m1-89h0m0 24h0m0 11h0m0 13h0m0 2h0m0 2h0m0 2h0m0 4h0m1-37h0m0 19h0m0 6h0m0 9h0m0 2h0m0 8h0m0 2h0m0 3h0m1-46h0m0 17h0m0 5h0m0 5h0m0 1h0m0 6h0m0 3h0m0 23h0m1-68h0m0 21h0m0 25h0m0 5h0m0 7h0m0 8h0m1-73h0m0 23h0m0 12h0m0 5h0m0 2h0m0 5h0m0 7h0m0 12h0m1-58h0m0 18h0m0 8h0m0 2h0m0 12h0m0 5h0m0 12h0m1-66h0m0 4h0m0 1h0m0 15h0m0 12h0m0 4h0m0 4h0m1-52h0m0 34h0m0 4h0m0 1h0m0 2h0m0 16h0m0 47h0m0 4h0m1-75h0m0 5h0m0 1h0m0 10h0m0 25h0m0 20h0m0 1h0m1-53h0m0 2h0m0 6h0m0 4h0m0 18h0m0 13h0m1-69h0m0 26h0m0 5h0m0 1h0m0 12h0m0 3h0m0 17h0m1-77h0m0 23h0m0 9h0m0 5h0m0 10h0m0 1h0m0 2h0m1-44h0m0 29h0m0 13h0m0 1h0m0 2h0m0 17h0m0 32h0m1-73h0m0 2h0m0 8h0m0 13h0m0 12h0m0 8h0m0 4h0m1-77h0m0 40h0m0 5h0m0 5h0m0 5h0m0 11h0m0 5h0m1-45h0m0 10h0m0 11h0m0 1h0m0 10h0m0 6h0m0 16h0m1-84h0m0 30h0m0 5h0m0 7h0m0 2h0m0 4h0m0 60h0m1-78h0m0 3h0m0 1h0m0 53h0m0 3h0m0 3h0m0 10h0m0 9h0m1-84h0m0 22h0m0 6h0m0 1h0m0 9h0m0 4h0m0 1h0m0 16h0m1-88h0m0 22h0m0 6h0m0 1h0m0 13h0m0 8h0m0 22h0m1-75h0m0 34h0m0 26h0m0 2h0m0 12h0m0 9h0m0 10h0m0 2h0m1-62h0m0 17h0m0 3h0m0 4h0m0 7h0m0 21h0m0 4h0m1-49h0m0 1h0m0 6h0m0 13h0m0 9h0m0 2h0m0 16h0m0 10h0m1-66h0m0 15h0m0 6h0m0 3h0m0 2h0m0 22h0m0 18h0m1-47h0m0 13h0m0 2h0m0 1h0m0 12h0m0 6h0m0 6h0m0 8h0m1-93h0m0 23h0m0 26h0m0 1h0m0 4h0m0 10h0m0 12h0m1-24h0m0 6h0m0 6h0m0 7h0m0 8h0m0 8h0m1-62h0m0 12h0m0 1h0m0 3h0m0 3h0m0 1h0m0 28h0m0 24h0m1-72h0m0 9h0m0 8h0m0 4h0m0 6h0m0 3h0m0 11h0m0 23h0m1-74h0m0 25h0m0 2h0m0 3h0m0 33h0m0 19h0m1-97h0m0 47h0m0 1h0m0 2h0m0 10h0m0 12h0m0 31h0m1-70h0m0 10h0m0 5h0m0 2h0m0 28h0m0 1h0m0 1h0m1-67h0m0 10h0m0 19h0m0 10h0m0 14h0m0 2h0m0 4h0m1-65h0m0 1h0m0 6h0m0 10h0m0 19h0m0 13h0m0 4h0m0 28h0m1-79h0m0 26h0m0 15h0m0 6h0m0 8h0m0 4h0m0 14h0m0 27h0m1-68h0m0 5h0m0 1h0m0 1h0m0 17h0m0 6h0m0 2h0m0 33h0m1-101h0m0 17h0m0 12h0m0 5h0m0 4h0m0 14h0m0 31h0m1-60h0m0 4h0m0 11h0m0 5h0m0 13h0m0 21h0m0 4h0m1-54h0m0 31h0m0 3h0m0 3h0m0 4h0m0 5h0m0 1h0m1-52h0m0 20h0m0 7h0m0 3h0m0 23h0m0 6h0m0 4h0m1-58h0m0 8h0m0 7h0m0 10h0m0 12h0m0 6h0m1-47h0m0 7h0m0 28h0m0 3h0m0 4h0m0 26h0m1-59h0m0 16h0m0 17h0m0 3h0m0 4h0m0 5h0m0 6h0m1-58h0m0 1h0m0 22h0m0 2h0m0 6h0m0 6h0m0 4h0m1-58h0m0 1h0m0 18h0m0 39h0m0 5h0m0 22h0m0 3h0m0 6h0m1-86h0m0 11h0m0 10h0m0 3h0m0 17h0m0 2h0m0 4h0m0 3h0m1-39h0m0 14h0m0 21h0m0 3h0m0 10h0m0 1h0m0 17h0m1-86h0m0 35h0m0 12h0m0 4h0m0 3h0m0 6h0m0 2h0m1-42h0m0 3h0m0 14h0m0 7h0m0 8h0m0 16h0m0 2h0m0 21h0m1-84h0m0 24h0m0 8h0m0 8h0m0 11h0m0 12h0m0 4h0m1-51h0m0 7h0m0 4h0m0 1h0m0 9h0m0 17h0m0 20h0m0 5h0m1-65h0m0 2h0m0 4h0m0 7h0m0 12h0m0 12h0m0 10h0m0 1h0m1-35h0m0 3h0m0 2h0m0 10h0m0 4h0m0 10h0m0 3h0m1-38h0m0 3h0m0 1h0m0 9h0m0 1h0m0 11h0m0 4h0m0 7h0m1-63h0m0 31h0m0 2h0m0 6h0m0 6h0m0 4h0m0 3h0m0 4h0m1-48h0m0 4h0m0 6h0m0 10h0m0 1h0m0 19h0m0 10h0m1-68h0m0 35h0m0 7h0m0 15h0m0 10h0m0 5h0m0 2h0m0 3h0m1-46h0m0 4h0m0 4h0m0 18h0m0 22h0m0 8h0m0 7h0m0 3h0m1-71h0m0 4h0m0 22h0m0 2h0m0 1h0m0 4h0m1-39h0m0 10h0m0 14h0m0 9h0m0 13h0m0 1h0m0 14h0m1-71h0m0 17h0m0 6h0m0 9h0m0 1h0m0 8h0m0 1h0m0 12h0m1-29h0m0 12h0m0 1h0m0 7h0m0 3h0m0 2h0m0 8h0m1-35h0m0 5h0m0 6h0m0 12h0m0 5h0m0 3h0m0 8h0m1-19h0m0 1h0m0 2h0m0 4h0m0 4h0m0 8h0m0 5h0m0 17h0m1-75h0m0 3h0m0 19h0m0 6h0m0 8h0m0 4h0m0 7h0m0 15h0m1-83h0m0 40h0m0 2h0m0 5h0m0 19h0m0 21h0m1-63h0m0 1h0m0 14h0m0 15h0m0 1h0m0 17h0m0 3h0m0 17h0m1-51h0m0 4h0m0 12h0m0 1h0m0 17h0m0 7h0m0 3h0m0 10h0m1-58h0m0 15h0m0 3h0m0 5h0m0 5h0m0 6h0m0 5h0m1-46h0m0 12h0m0 24h0m0 3h0m0 6h0m0 8h0m0 2h0m1-49h0m0 17h0m0 5h0m0 5h0m0 6h0m0 22h0m0 15h0m1-91h0m0 28h0m0 12h0m0 5h0m0 2h0m0 5h0m0 1h0m0 2h0m1-73h0m0 48h0m0 11h0m0 1h0m0 15h0m0 1h0m0 15h0m1-64h0m0 20h0m0 6h0m0 10h0m0 16h0m0 14h0m0 12h0m1-77h0m0 26h0m0 8h0m0 9h0m0 15h0m0 17h0m1-56h0m0 12h0m0 1h0m0 8h0m0 8h0m0 11h0m0 17h0m1-63h0m0 11h0m0 11h0m0 6h0m0 1h0m0 1h0m0 24h0m1-47h0m0 13h0m0 2h0m0 3h0m0 11h0m0 7h0m0 2h0m0 18h0m1-87h0m0 12h0m0 9h0m0 4h0m0 10h0m0 7h0m0 2h0m1-22h0m0 15h0m0 1h0m0 2h0m0 1h0m0 9h0m0 9h0m1-30h0m0 1h0m0 1h0m0 25h0m0 5h0m0 19h0m0 3h0m1-77h0m0 14h0m0 5h0m0 22h0m0 5h0m0 2h0m0 2h0m0 9h0m1-52h0m0 2h0m0 3h0m0 9h0m0 21h0m0 17h0m0 28h0m1-56h0m0 1h0m0 2h0m0 4h0m0 7h0m0 6h0m0 28h0m0 2h0m1-79h0m0 45h0m0 2h0m0 1h0m0 1h0m0 12h0m0 1h0m0 25h0m1-59h0m0 1h0m0 12h0m0 11h0m0 3h0m0 3h0m0 4h0m1-54h0m0 2h0m0 6h0m0 7h0m0 4h0m0 1h0m0 6h0m0 45h0m1-73h0m0 7h0m0 18h0m0 19h0m0 3h0m0 5h0m1-20h0m0 12h0m0 6h0m0 6h0m0 2h0m0 7h0m0 13h0m1-73h0m0 11h0m0 5h0m0 1h0m0 1h0m0 15h0m0 2h0m0 3h0m1-36h0m0 13h0m0 7h0m0 7h0m0 2h0m0 9h0m0 19h0m1-67h0m0 13h0m0 6h0m0 6h0m0 4h0m0 11h0m0 13h0m0 12h0m1-39h0m0 11h0m0 17h0m0 9h0m0 2h0m0 1h0m0 5h0m1-70h0m0 5h0m0 9h0m0 17h0m0 4h0m0 9h0m0 31h0m0 5h0m1-82h0m0 7h0m0 15h0m0 16h0m0 8h0m0 8h0m0 8h0m0 7h0m1-74h0m0 17h0m0 18h0m0 3h0m0 10h0m0 5h0m0 4h0m1-31h0m0 8h0m0 3h0m0 1h0m0 22h0m0 7h0m0 3h0m0 10h0m1-98h0m0 7h0m0 34h0m0 4h0m0 15h0m0 6h0m0 7h0m0 7h0m1-83h0m0 38h0m0 10h0m0 6h0m0 10h0m0 7h0m0 11h0m1-24h0m0 19h0m0 6h0m0 9h0m0 1h0m0 3h0m0 9h0m1-68h0m0 4h0m0 8h0m0 10h0m0 3h0m0 7h0m0 14h0m0 6h0m1-87h0m0 28h0m0 5h0m0 1h0m0 7h0m0 22h0m0 8h0m0 3h0m1-15h0m0 1h0m0 17h0m0 2h0m0 2h0m0 2h0m1-30h0m0 6h0m0 3h0m0 4h0m0 8h0m0 7h0m0 11h0m0 7h0m1-77h0m0 14h0m0 3h0m0 1h0m0 33h0m0 9h0m1-43h0m0 1h0m0 2h0m0 4h0m0 9h0m0 27h0m0 4h0m1-67h0m0 7h0m0 5h0m0 14h0m0 31h0m0 5h0m0 1h0m0 4h0m1-59h0m0 13h0m0 11h0m0 7h0m0 4h0m0 2h0m0 5h0m1-39h0m0 16h0m0 5h0m0 7h0m0 7h0m0 20h0m1-51h0m0 2h0m0 8h0m0 3h0m0 8h0m0 5h0m0 26h0m1-48h0m0 20h0m0 1h0m0 11h0m0 7h0m0 1h0m0 19h0m0 5h0m1-91h0m0 38h0m0 3h0m0 2h0m0 30h0m0 2h0m0 6h0m1-75h0m0 18h0m0 13h0m0 13h0m0 3h0m0 1h0m0 5h0m1-53h0m0 14h0m0 8h0m0 1h0m0 4h0m0 18h0m0 1h0m1-23h0m0 17h0m0 8h0m0 24h0m0 6h0m0 2h0m0 4h0m1-92h0m0 38h0m0 21h0m0 1h0m0 1h0m0 26h0m1-83h0m0 34h0m0 22h0m0 2h0m0 1h0m0 11h0m0 15h0m1-57h0m0 13h0m0 12h0m0 6h0m0 8h0m0 17h0m0 6h0m1-63h0m0 10h0m0 4h0m0 18h0m0 4h0m0 1h0m0 5h0m1-61h0m0 31h0m0 18h0m0 1h0m0 1h0m0 5h0m0 14h0m1-89h0m0 10h0m0 16h0m0 7h0m0 13h0m0 3h0m0 14h0m0 12h0m1-39h0m0 9h0m0 7h0m0 6h0m0 10h0m0 12h0m0 2h0m1-43h0m0 3h0m0 1h0m0 24h0m0 4h0m0 7h0m0 26h0m1-68h0m0 4h0m0 6h0m0 8h0m0 9h0m0 10h0m0 5h0m1-45h0m0 4h0m0 8h0m0 7h0m0 3h0m0 11h0m0 24h0m1-86h0m0 38h0m0 9h0m0 4h0m0 13h0m0 8h0m0 10h0m1-55h0m0 19h0m0 7h0m0 1h0m0 4h0m0 5h0m0 2h0m0 9h0m1-52h0m0 15h0m0 15h0m0 16h0m0 8h0m0 7h0m0 6h0m0 1h0m1-62h0m0 5h0m0 3h0m0 19h0m0 16h0m0 1h0m0 11h0m1-45h0m0 1h0m0 2h0m0 6h0m0 12h0m0 27h0m0 8h0m1-52h0m0 3h0m0 2h0m0 3h0m0 12h0m0 7h0m0 8h0m1-43h0m0 9h0m0 2h0m0 9h0m0 4h0m0 18h0m0 12h0m1-56h0m0 10h0m0 5h0m0 4h0m0 17h0m0 3h0m0 7h0m0 13h0m1-59h0m0 9h0m0 19h0m0 11h0m0 7h0m0 3h0m0 4h0m0 14h0m1-82h0m0 4h0m0 10h0m0 26h0m0 3h0m0 7h0m0 9h0m1-42h0m0 8h0m0 17h0m0 16h0m0 16h0m0 2h0m0 14h0m1-88h0m0 3h0m0 1h0m0 28h0m0 4h0m0 18h0m0 1h0m0 15h0m1-71h0m0 6h0m0 18h0m0 23h0m0 1h0m0 7h0m0 7h0m0 4h0m1-64h0m0 17h0m0 8h0m0 3h0m0 2h0m0 46h0m1-52h0m0 2h0m0 2h0m0 4h0m0 4h0m0 2h0m0 15h0m0 14h0m1-76h0m0 1h0m0 17h0m0 15h0m0 14h0m0 6h0m0 1h0m0 16h0m1-59h0m0 13h0m0 19h0m0 2h0m0 8h0m0 3h0m0 5h0m1-36h0m0 10h0m0 3h0m0 1h0m0 2h0m0 9h0m0 11h0m0 2h0m1-47h0m0 3h0m0 12h0m0 5h0m0 4h0m0 2h0m0 5h0m0 27h0m1-70h0m0 30h0m0 8h0m0 30h0m0 4h0m0 5h0m1-43h0m0 9h0m0 6h0m0 1h0m0 3h0m0 1h0m0 20h0m0 4h0m1-81h0m0 8h0m0 11h0m0 1h0m0 34h0m0 3h0m0 15h0m0 5h0m1-61h0m0 3h0m0 20h0m0 2h0m0 7h0m0 12h0m0 9h0m1-72h0m0 36h0m0 1h0m0 6h0m0 9h0m0 26h0m0 6h0m1-52h0m0 6h0m0 1h0m0 17h0m0 1h0m0 5h0m0 21h0m1-76h0m0 25h0m0 14h0m0 5h0m0 1h0m0 16h0m0 4h0m0 15h0m1-45h0m0 26h0" stroke="#000" stroke-width="3.74" stroke-linecap="round" fill="none"/>
</g>
<path d="M267.2 660.2h6.6l-3.3 6.8zM351.2 660.2h6.6l-3.3 6.8zM370.2 660.2h6.6l-3.3 6.8zM421.2 660.2h6.6l-3.3 6.8zM513.2 660.2h6.6l-3.3 6.8zM566.2 660.2h6.6l-3.3 6.8zM714.2 660.2h6.6l-3.3 6.8zM974.2 660.2h6.6l-3.3 6.8zM1039.2 660.2h6.6l-3.3 6.8zM1250.2 660.2h6.6l-3.3 6.8z" fill="#ffa500"/>
<rect x="102.5" y="499" width="1248.5" height="49" fill="#f00" fill-opacity="0.1" stroke="#f00" stroke-opacity="0.1" stroke-width="1.389"/>
<rect x="162" y="498.3" width="1131.5" height="50" fill="#ffa500" fill-opacity="0.1" stroke="#ffa500" stroke-opacity="0.1" stroke-width="1.389"/>
<path d="M162.2 523.5H1294.4" stroke="#ffa500" stroke-width="2.778"/>
<path d="M162 665.9V380.5" stroke="#800080" stroke-width="2.083" stroke-dasharray="2.083 3.4375" fill="none"/>
<path d="M1293 665.9V380.5" stroke="#800080" stroke-width="2.083" stroke-dasharray="2.083 3.4375" fill="none"/>
<path d="M105.5 523H1351" stroke="#f00" stroke-width="2.083"/>
</g>
<rect x="105.5" y="380.5" width="1369.0" height="286.0" fill="none" stroke="#000" stroke-width="1.111"/>
<path d="M162.5 666.5v4.861" stroke="#000" stroke-width="1.111"/>
<text x="158" y="687">0</text>
<path d="M422.5 666.5v4.861" stroke="#000" stroke-width="1.111"/>
<text x="404" y="687">2000</text>
<path d="M681.5 666.5v4.861" stroke="#000" stroke-width="1.111"/>
<text x="664" y="687">4000</text>
<path d="M941.5 666.5v4.861" stroke="#000" stroke-width="1.111"/>
<text x="924" y="687">6000</text>
<path d="M1201.5 666.5v4.861" stroke="#000" stroke-width="1.111"/>
<text x="1184" y="687">8000</text>
<path d="M1461.5 666.5v4.861" stroke="#000" stroke-width="1.111"/>
<text x="1439" y="687">10000</text>
<path d="M105.5 403.5h-4.861" stroke="#000" stroke-width="1.111"/>
<text x="95.3" y="408" text-anchor="end">9.48</text>
<path d="M105.5 450.5h-4.861" stroke="#000" stroke-width="1.111"/>
<text x="95.3" y="456" text-anchor="end">9.46</text>
<path d="M105.5 498.5h-4.861" stroke="#000" stroke-width="1.111"/>
<text x="95.3" y="504" text-anchor="end">9.44</text>
<path d="M105.5 546.5h-4.861" stroke="#000" stroke-width="1.111"/>
<text x="95.3" y="551" text-anchor="end">9.42</text>
<path d="M105.5 593.5h-4.861" stroke="#000" stroke-width="1.111"/>
<text x="95.3" y="599" text-anchor="end">9.40</text>
<path d="M105.5 641.5h-4.861" stroke="#000" stroke-width="1.111"/>
<text x="95.3" y="646" text-anchor="end">9.38</text>
<text transform="translate(702 372) scale(1 1.08)" font-size="16.667">Magnitude Estimates</text>
<text x="705" y="657">59727</text>
<rect x="1354.3" y="387.4" width="113.3" height="48.1" rx="2.78" fill="#fff" fill-opacity="0.8" stroke="#ccc" stroke-opacity="0.8" stroke-width="1.389"/>
<path d="M1357.9 399.5H1388.6" stroke="#ffa500" stroke-width="2.778"/>
<text x="1398.4" y="404">mag<tspan font-size="9.9" font-style="italic" dy="1.9">OBSID</tspan></text>
<path d="M1358.2 422H1388.1" stroke="#f00" stroke-width="2.083"/>
<text x="1398.4" y="426.7">mag</text>
<rect x="1337.6" y="613.4" width="130" height="46.1" rx="2.78" fill="#fff" fill-opacity="0.8" stroke="#ccc" stroke-opacity="0.8" stroke-width="1.389"/>
<circle cx="1357.5" cy="626.4" r="1.9" fill="#ffa500"/>
<text x="1381.4" y="630.2">Highlighted</text>
<circle cx="1357.5" cy="647.3" r="1.9" fill="#000"/>
<text x="1381.4" y="651.1">OK</text>
<text x="1439" y="975">10000</text>
<rect x="105.5" y="954.5" width="1369.0" height="57.0" fill="#fff"/>
<g clip-path="url(#c3)">
<g transform="translate(.5 .5)"><path d="M224 856h0m0 33h0m24-33h0m0 33h0m130-33h0m0 33h0m144-33h0m0 33h0m70 0h0m4-33h0m0 33h0m197-33h0m0 33h0m25-33h0m0 33h0m31-33h0m0 33h0m54-33h0m0 33h0m71-33h0m0 33h0m214-33h0m0 33h0m79-33h0m0 33h0m26-131h0" stroke="#000" stroke-width="3" stroke-linecap="round" fill="none"/></g>
<path d="M105.5 921.9H1474.5" stroke="#b0b0b0" stroke-width="1.111" stroke-dasharray="1.111 1.833"/>
<path d="M105.5 889.3H1474.5" stroke="#b0b0b0" stroke-width="1.111" stroke-dasharray="1.111 1.833"/>
<path d="M105.5 856.6H1474.5" stroke="#b0b0b0" stroke-width="1.111" stroke-dasharray="1.111 1.833"/>
<path d="M105.5 824H1474.5" stroke="#b0b0b0" stroke-width="1.111" stroke-dasharray="1.111 1.833"/>
<path d="M105.5 791.3H1474.5" stroke="#b0b0b0" stroke-width="1.111" stroke-dasharray="1.111 1.833"/>
<path d="M105.5 758.7H1474.5" stroke="#b0b0b0" stroke-width="1.111" stroke-dasharray="1.111 1.833"/>
<path d="M162 953.9V725.5" stroke="#800080" stroke-width="2.083" stroke-dasharray="2.083 3.4375" fill="none"/>
<path d="M1293 953.9V725.5" stroke="#800080" stroke-width="2.083" stroke-dasharray="2.083 3.4375" fill="none"/>
</g>
<g clip-path="url(#c4)">
<g transform="translate(.5 .5)">
<path d="M162 1006h0m1-1h0m0 1h0m1-1h0m0 1h0m1 0h0m0 1h0m0 1h0m1 0h0m1 0h0m1-1h0m0 1h0m1-2h0m0 1h0m1-1h0m0 1h0m1-1h0m0 1h0m1-1h0m1 0h0m1 0h0m1 0h0m0 1h0m1-1h0m0 1h0m1-1h0m0 1h0m1-1h0m1 0h0m1 0h0m1 0h0m1 0h0m1 0h0m0 1h0m1-1h0m1 0h0m1 0h0m0 1h0m1-1h0m0 1h0m1 0h0m1 0h0m1-1h0m0 1h0m1-1h0m0 1h0m1-1h0m0 1h0m1 0h0m1 0h0m0 1h0m1 0h0m1-1h0m0 1h0m1-2h0m0 1h0m1-1h0m0 1h0m1-1h0m1-1h0m0 1h0m1-1h0m0 1h0m1-1h0m0 1h0m1-1h0m0 1h0m1 0h0m1 0h0m0 1h0m1-1h0m0 1h0m1-1h0m0 1h0m1-1h0m1-1h0m0 1h0m1-1h0m0 1h0m1-1h0m0 1h0m1 0h0m0 1h0m1-1h0m0 1h0m1 0h0m0 1h0m1 0h0m1-1h0m0 1h0m1-2h0m0 1h0m1-1h0m1-1h0m0 1h0m1 0h0m0 1h0m1-1h0m0 1h0m1 0h0m1-1h0m0 1h0m1-2h0m0 1h0m1-1h0m1 0h0m0 1h0m1 0h0m1 0h0m1 0h0m0 1h0m1-1h0m0 1h0m1-1h0m0 1h0m1 0h0m1-1h0m0 1h0m1-1h0m0 1h0m1-1h0m1 0h0m0 1h0m1-1h0m0 1h0m1-1h0m0 1h0m1-1h0m0 1h0m1-1h0m0 1h0m1 0h0m1 0h0m1-1h0m0 1h0m1-1h0m1-1h0m0 1h0m1-1h0m0 1h0m1 0h0m1 0h0m1 0h0m0 1h0m1 0h0m0 1h0m1 0h0m1-1h0m0 1h0m1-1h0m0 1h0m1-2h0m0 1h0m1-2h0m0 1h0m1 0h0m1 0h0m1 0h0m1 0h0m1 0h0m0 1h0m1-1h0m0 1h0m1 0h0m0 1h0m1-1h0m1-1h0m0 1h0m1-1h0m1-1h0m0 1h0m1-2h0m0 1h0m1-1h0m0 1h0m1 0h0m0 1h0m1 0h0m0 1h0m1 0h0m0 1h0m1 0h0m0 1h0m1-1h0m0 1h0m1-2h0m0 1h0m1-2h0m0 1h0m1-1h0m1 0h0m1 0h0m1 0h0m0 1h0m1-1h0m0 1h0m1-1h0m0 1h0m1 0h0m1-1h0m0 1h0m1-1h0m0 1h0m1-1h0m0 1h0m1-1h0m1 0h0m1 0h0m1 0h0m1 0h0m0 1h0m1-1h0m0 1h0m1-1h0m0 1h0m1-1h0m0 1h0m1-1h0m1 0h0m1 0h0m1 0h0m0 1h0m1 0h0m1 0h0m1-1h0m0 1h0m1-1h0m0 1h0m1-1h0m0 1h0m1-1h0m0 1h0m1-1h0m0 1h0m1 0h0m1 0h0m1 0h0m0 1h0m1-1h0m0 1h0m1-1h0m1-1h0m0 1h0m1-1h0m1-1h0m0 1h0m1-1h0m0 1h0m1-1h0m0 1h0m1 0h0m1 0h0m1 0h0m1 0h0m1 0h0m0 1h0m1-1h0m0 1h0m1 0h0m1-1h0m0 1h0m1-1h0m0 1h0m1-1h0m0 1h0m1-1h0m0 1h0m1-1h0m0 1h0m1-1h0m0 1h0m1-1h0m0 1h0m1-1h0m0 1h0m1-1h0m0 1h0m1-1h0m0 1h0m1-1h0m1 0h0m0 1h0m1-1h0m0 1h0m1-1h0m0 1h0m1-1h0m0 1h0m1-1h0m0 1h0m1-1h0m0 1h0m1-1h0m0 1h0m1-1h0m0 1h0m1-1h0m0 1h0m1-1h0m0 1h0m1-1h0m1 0h0m1 0h0m1 0h0m1 0h0m1 0h0m1 0h0m0 1h0m1 0h0m1 0h0m1 0h0m1 0h0m1-1h0m0 1h0m1-1h0m0 1h0m1-1h0m0 1h0m1-1h0m1 0h0m0 1h0m1-1h0m0 1h0m1 0h0m1-1h0m0 1h0m1-1h0m0 1h0m1-1h0m0 1h0m1-1h0m1 0h0m1 0h0m0 1h0m1-1h0m0 1h0m1 0h0m1 0h0m1-1h0m0 1h0m1-1h0m1 0h0m1 0h0m1 0h0m1 0h0m1 0h0m0 1h0m1-1h0m0 1h0m1-1h0m0 1h0m1-1h0m1 0h0m1 0h0m0 1h0m1-1h0m0 1h0m1-1h0m0 1h0m1-1h0m0 1h0m1-1h0m0 1h0m1-1h0m0 1h0m1-1h0m0 1h0m1-1h0m1 0h0m1 0h0m0 1h0m1-1h0m0 1h0m1-1h0m0 1h0m1-1h0m0 1h0m1-1h0m0 1h0m1-1h0m1 0h0m1 0h0m1 0h0m1 0h0m1-1h0m0 1h0m1 0h0m1 0h0m1 0h0m0 1h0m1-1h0m0 1h0m1 0h0m1 0h0m1 0h0m1 0h0m1 0h0m1-1h0m0 1h0m1-1h0m0 1h0m1-1h0m1 0h0m1 0h0m1 0h0m1 0h0m1 0h0m0 1h0m1-1h0m1 0h0m1 0h0m1 0h0m1 0h0m1 0h0m1 0h0m1 0h0m0 1h0m1-1h0m0 1h0m1 0h0m0 1h0m1-1h0m1-1h0m0 1h0m1-1h0m0 1h0m1-1h0m1 0h0m1 0h0m0 1h0m1-1h0m0 1h0m1-1h0m0 1h0m1-1h0m0 1h0m1-1h0m0 1h0m1-1h0m0 1h0m1-1h0m0 1h0m1-1h0m0 1h0m1-1h0m0 1h0m1-1h0m0 1h0m1-1h0m1-1h0m0 1h0m1-1h0m0 1h0m1-1h0m0 1h0m1 0h0m1 0h0m0 1h0m1 0h0m0 1h0m1-1h0m0 1h0m1-1h0m0 1h0m1-1h0m0 1h0m1-1h0m0 1h0m1-1h0m0 1h0m1-2h0m0 1h0m1-1h0m0 1h0m1-2h0m1-1h0m1 0h0m1 0h0m0 1h0m1 0h0m0 1h0m1 0h0m0 1h0m1 0h0m1 0h0m0 1h0m1-1h0m0 1h0m1 0h0m1 0h0m1 0h0m1 0h0m1-2h0m0 1h0m0 1h0m1-3h0m0 1h0m1-2h0m0 1h0m1-1h0m1 0h0m1 0h0m0 1h0m1-1h0m0 1h0m1 0h0m0 1h0m1 0h0m0 1h0m1 1h0m0 1h0m1 0h0m0 1h0m1 0h0m1-1h0m0 1h0m1-3h0m0 1h0m0 1h0m1-3h0m0 1h0m1-3h0m0 1h0m1-2h0m0 1h0m1-1h0m0 1h0m1 0h0m1 1h0m1 0h0m0 1h0m1 0h0m1 0h0m1 0h0m0 1h0m1-1h0m0 1h0m1 0h0m1 0h0m1 0h0m1 0h0m0 1h0m1 0h0m1 0h0m1 0h0m0 1h0m1-1h0m0 1h0m1-1h0m0 1h0m1-2h0m0 1h0m1-2h0m0 1h0m1-2h0m0 1h0m1-2h0m0 1h0m1-1h0m0 1h0m1 0h0m0 1h0m1 0h0m1 0h0m1 0h0m1 0h0m1 0h0m1 0h0m0 1h0m1 0h0m1-1h0m0 1h0m1-1h0m1-1h0m0 1h0m1 0h0m1 0h0m1 0h0m1 0h0m1-1h0m0 1h0m1-1h0m0 1h0m1 0h0m0 1h0m1 0h0m0 1h0m1 0h0m0 1h0m1-1h0m0 1h0m1-1h0m0 1h0m1-2h0m0 1h0m1-2h0m0 1h0m1-1h0m1-1h0m1 0h0m1 0h0m1 0h0m0 1h0m1 0h0m1 0h0m0 1h0m1-1h0m1-1h0m0 1h0m1-1h0m0 1h0m1-1h0m0 1h0m1 0h0m1 0h0m0 1h0m1 0h0m0 1h0m1-1h0m0 1h0m1-1h0m0 1h0m1-1h0m0 1h0m1-2h0m0 1h0m1-1h0m0 1h0m1-1h0m0 1h0m1-1h0m0 1h0m1-1h0m0 1h0m1-1h0m0 1h0m1-1h0m0 1h0m1-1h0m0 1h0m1-1h0m0 1h0m1-1h0m0 1h0m1-1h0m0 1h0m1-1h0m0 1h0m1-1h0m1 0h0m1 0h0m1 0h0m1 0h0m0 1h0m1-1h0m0 1h0m1-1h0m0 1h0m1-1h0m0 1h0m1-1h0m1 0h0m1 0h0m0 1h0m1-1h0m0 1h0m1 0h0m1 0h0m1-1h0m0 1h0m1-1h0m0 1h0m1-1h0m1 0h0m1-1h0m0 1h0m1 0h0m1 0h0m1 0h0m1 0h0m1 0h0m0 1h0m1-1h0m0 1h0m1 0h0m1-1h0m0 1h0m1-1h0m0 1h0m1-1h0m0 1h0m1-1h0m1 0h0m1 0h0m0 1h0m1-1h0m0 1h0m1 0h0m1 0h0m1 0h0m1-1h0m0 1h0m1-1h0m0 1h0m1-1h0m0 1h0m1-1h0m0 1h0m1-1h0m0 1h0m1-1h0m0 1h0m1-1h0m0 1h0m1-1h0m0 1h0m1-1h0m0 1h0m1-1h0m1 0h0m0 1h0m1-1h0m0 1h0m1-1h0m0 1h0m1-1h0m1 0h0m1 0h0m1 0h0m1 0h0m1 0h0m1 0h0m0 1h0m1-1h0m0 1h0m1-1h0m0 1h0m1-1h0m0 1h0m1 0h0m1 0h0m1-1h0m0 1h0m1-1h0m0 1h0m1-1h0m1 0h0m1 0h0m0 1h0m1-1h0m0 1h0m1-1h0m0 1h0m1-1h0m0 1h0m1-1h0m0 1h0m1-1h0m1 0h0m1 0h0m1 0h0m0 1h0m1-1h0m0 1h0m1-1h0m0 1h0m1-1h0m1 0h0m0 1h0m1-1h0m0 1h0m1 0h0m1-1h0m0 1h0m1-1h0m0 1h0m1-1h0m0 1h0m1-1h0m0 1h0m1 0h0m1 0h0m1-1h0m0 1h0m1-1h0m1 0h0m1 0h0m1 0h0m1 0h0m0 1h0m1-1h0m0 1h0m1-1h0m1 0h0m1 0h0m1 0h0m1 0h0m0 1h0m1-1h0m0 1h0m1-1h0m0 1h0m1 0h0m1-1h0m0 1h0m1-1h0m0 1h0m1-1h0m1 0h0m1 0h0m1 0h0m0 1h0m1-1h0m0 1h0m1-1h0m0 1h0m1-1h0m0 1h0m1-1h0m0 1h0m1-1h0m0 1h0m1 0h0m1-1h0m0 1h0m1-1h0m0 1h0m1-1h0m1 0h0m1 0h0m1 0h0m1 0h0m0 1h0m1 0h0m1 0h0m1 0h0m1-1h0m0 1h0m1-1h0m0 1h0m1-1h0m0 1h0m1-1h0m1 0h0m1 0h0m0 1h0m1-1h0m1 0h0m1 0h0m0 1h0m1-1h0m0 1h0m1-1h0m1 0h0m0 1h0m1 0h0m1 0h0m1-1h0m0 1h0m1-1h0m0 1h0m1-1h0m0 1h0m1-1h0m1 0h0m0 1h0m1-1h0m0 1h0m1-1h0m1 0h0m1-1h0m0 1h0m1-1h0m0 1h0m1 0h0m1 0h0m1 0h0m0 1h0m1-1h0m0 1h0m1-1h0m0 1h0m1 0h0m1 0h0m0 1h0m1-1h0m1 0h0m1-1h0m0 1h0m1-1h0m1 0h0m1 0h0m0 1h0m1-1h0m0 1h0m1 0h0m1 0h0m1-1h0m0 1h0m1-1h0m0 1h0m1-1h0m1 0h0m1 0h0m1 0h0m1 0h0m0 1h0m1 0h0m0 1h0m1-1h0m0 1h0m1-1h0m1-1h0m0 1h0m1-1h0m1-1h0m0 1h0m1-1h0m0 1h0m1 0h0m1 0h0m0 1h0m1-1h0m0 1h0m1 0h0m1 0h0m1-1h0m0 1h0m1-2h0m0 1h0m1-1h0m0 1h0m1-1h0m1 0h0m0 1h0m1-1h0m0 1h0m0 1h0m1-1h0m0 1h0m1 0h0m1 0h0m1 0h0m1 0h0m1 0h0m0 1h0m1-1h0m1 0h0m1 0h0m1 0h0m1-1h0m0 1h0m1-1h0m0 1h0m1-1h0m0 1h0m1 0h0m1 0h0m1-1h0m0 1h0m1-2h0m0 1h0m1-1h0m0 1h0m1-1h0m0 1h0m1-1h0m1 0h0m0 1h0m1-1h0m0 1h0m1 0h0m0 1h0m1 0h0m0 1h0m1-1h0m0 1h0m1-1h0m0 1h0m1-2h0m0 1h0m1-1h0m1 0h0m1 0h0m1-1h0m0 1h0m1 0h0m1 0h0m0 1h0m1-1h0m0 1h0m1 0h0m1-1h0m0 1h0m1-1h0m1-1h0m0 1h0m1-1h0m0 1h0m1 0h0m1 0h0m0 1h0m1-1h0m0 1h0m1-1h0m0 1h0m1 0h0m1 0h0m1 0h0m1 0h0m1 0h0m0 1h0m1-1h0m0 1h0m1-1h0m1-1h0m0 1h0m1-2h0m0 1h0m1-2h0m0 1h0m1-1h0m0 1h0m1 0h0m0 1h0m1 0h0m0 1h0m1 0h0m1 0h0m0 1h0m1-1h0m0 1h0m1-1h0m1-1h0m0 1h0m1-1h0m0 1h0m1-1h0m0 1h0m1 0h0m1 0h0m1 0h0m1-1h0m1-1h0m0 1h0m1-1h0m1 0h0m1 0h0m1 0h0m0 1h0m1 0h0m1 0h0m0 1h0m1 0h0m0 1h0m1 0h0m1 0h0m0 1h0m1-1h0m1-2h0m0 1h0m1-2h0m0 1h0m1-2h0m0 1h0m1 0h0m1 0h0m1 0h0m0 1h0m1 0h0m1 0h0m1 0h0m0 1h0m1 0h0m1 0h0m0 1h0m1-1h0m0 1h0m1-1h0m0 1h0m1-1h0m0 1h0m1-1h0m1-1h0m0 1h0m1-1h0m1 0h0m1 0h0m1 0h0m0 1h0m1-1h0m0 1h0m1-1h0m0 1h0m1 0h0m1 0h0m0 1h0m1-1h0m0 1h0m1-1h0m0 1h0m1-2h0m0 1h0m1-1h0m0 1h0m1-2h0m0 1h0m1-1h0m1-1h0m0 1h0m1-1h0m0 1h0m1 0h0m0 1h0m1 0h0m1 0h0m0 1h0m1 0h0m0 1h0m1-1h0m0 1h0m1-1h0m0 1h0m1-2h0m0 1h0m1-2h0m0 1h0m1-1h0m0 1h0m1-1h0m1 0h0m0 1h0m1 0h0m1 0h0m0 1h0m1 0h0m1 0h0m1 0h0m1 0h0m1 0h0m1 0h0m1 0h0m1 0h0m0 1h0m1-1h0m1 0h0m1-1h0m0 1h0m1-1h0m1-1h0m0 1h0m1-2h0m0 1h0m1 0h0m1 0h0m1 0h0m0 1h0m1 0h0m0 1h0m1-1h0m0 1h0m1-1h0m0 1h0m1 0h0m0 1h0m1 0h0m1 0h0m1-1h0m0 1h0m1-1h0m0 1h0m1-1h0m1-1h0m0 1h0m1-1h0m1-1h0m0 1h0m1-1h0m1 0h0m0 1h0m1 0h0m1 0h0m1 0h0m1 0h0m1 0h0m1 0h0m0 1h0m1 0h0m1 0h0m1 0h0m1-1h0m1-1h0m1 0h0m1 0h0m0 1h0m1 0h0m0 1h0m1 0h0m0 1h0m1 0h0m1 0h0m0 1h0m1-1h0m1-1h0m0 1h0m1-2h0m0 1h0m1-1h0m1 0h0m1 0h0m0 1h0m1 0h0m1-1h0m0 1h0m1-1h0m1-1h0m0 1h0m1-1h0m1 0h0m1 0h0m0 1h0m1 0h0m1 0h0m0 1h0m1-1h0m0 1h0m1-2h0m0 1h0m1-1h0m1 0h0m1 0h0m0 1h0m0 1h0m1-1h0m0 1h0m0 1h0m1 0h0m0 1h0m1 0h0m1-1h0m0 1h0m1-2h0m0 1h0m1-3h0m0 1h0m0 1h0m1-2h0m1-1h0m0 1h0m1 0h0m0 1h0m1-1h0m0 1h0m1 0h0m0 1h0m1-1h0m0 1h0m1-1h0m1-1h0m0 1h0m1 0h0m1 0h0m0 1h0m1 0h0m1 0h0m0 1h0m1 0h0m1-1h0m0 1h0m1-2h0m0 1h0m1-1h0m0 1h0m1 0h0m1 0h0m0 1h0m1-2h0m0 1h0m1-2h0m0 1h0m1-1h0m1 0h0m0 1h0m1-1h0m0 1h0m1 0h0m1 0h0m1 0h0m1 0h0m1 0h0m0 1h0m1 0h0m1 0h0m1 0h0m1 0h0m1 0h0m1 0h0m0 1h0m1-1h0m0 1h0m1-2h0m0 1h0m1-1h0m0 1h0m1-1h0m0 1h0m1-1h0m0 1h0m1-1h0m0 1h0m1-1h0m1-1h0m0 1h0m1-1h0m0 1h0m1-1h0m0 1h0m1 0h0m1 0h0m0 1h0m1 0h0m1-1h0m0 1h0m1-2h0m0 1h0m1-1h0m0 1h0m1-1h0m1 0h0m1 0h0m0 1h0m1 0h0m0 1h0m1 0h0m0 1h0m1 0h0m0 1h0m1 0h0m1-1h0m0 1h0m1-2h0m0 1h0m1-2h0m0 1h0m1-2h0m0 1h0m1-2h0m0 1h0m1-1h0m0 1h0m1 0h0m1 0h0m0 1h0m0 1h0m1-1h0m0 1h0m1 0h0m0 1h0m1-1h0m0 1h0m1-1h0m1 0h0m1-1h0m0 1h0m1-1h0m1-1h0m0 1h0m1-1h0m1 0h0m1 0h0m0 1h0m1 0h0m0 1h0m1 0h0m0 1h0m1-1h0m0 1h0m1-1h0m1 0h0m1-1h0m0 1h0m1-1h0m1 0h0m1 0h0m1 0h0m1 0h0m0 1h0m1-1h0m0 1h0m1-1h0m0 1h0m1-1h0m1-1h0m0 1h0m1 0h0m0 1h0m1 0h0m0 1h0m1-1h0m0 1h0m1-1h0m0 1h0m1-1h0m1-1h0m0 1h0m1-1h0m1 0h0m1 0h0m1 0h0m0 1h0m1-1h0m0 1h0m1-1h0m1-1h0m0 1h0m1-1h0m1-1h0m0 1h0m1-1h0m0 1h0m1 0h0m0 1h0m1 0h0m0 1h0m1 0h0m0 1h0m1 0h0m1 0h0m1-1h0m0 1h0m1-1h0m1-1h0m0 1h0m1-1h0m0 1h0m1-1h0m0 1h0m1-1h0m0 1h0m1-1h0m0 1h0m1-1h0m0 1h0m1-1h0m1-1h0m0 1h0m1-1h0m0 1h0m1-1h0m1 0h0m0 1h0m1 0h0m1 0h0m0 1h0m1-1h0m0 1h0m1-1h0m0 1h0m1-1h0m1 0h0m1 0h0m1 0h0m0 1h0m1 0h0m1 0h0m0 1h0m1 0h0m1 0h0m1-1h0m0 1h0m1-1h0m1 0h0m1 0h0m1 0h0m1 0h0m1-1h0m0 1h0m1-1h0m0 1h0m1-1h0m1-1h0m0 1h0m1-2h0m0 1h0m1-1h0m1 0h0m0 1h0m1 0h0m0 1h0m0 1h0m1 0h0m0 1h0m1 0h0m1-1h0m0 1h0m1-1h0m0 1h0m1-2h0m0 1h0m1-2h0m0 1h0m1-1h0m0 1h0m1-1h0m0 1h0m1-1h0m0 1h0m1-1h0m0 1h0m1 0h0m0 1h0m1 0h0m0 1h0m1 0h0m1 0h0m1 0h0m1-1h0m0 1h0m1-1h0m1-1h0m0 1h0m1-2h0m0 1h0m1-1h0m1 0h0m1 0h0m1 0h0m1 1h0m1 0h0m1 0h0m0 1h0m1-1h0m1 0h0m0 1h0m1-1h0m0 1h0m1 0h0m1 0h0m1 0h0m0 1h0m1-1h0m0 1h0m1-1h0m0 1h0m1-1h0m1 0h0m1-1h0m0 1h0m1-1h0m1-1h0m0 1h0m1-2h0m0 1h0m1 0h0m1 0h0m1 0h0m0 1h0m1 0h0m1 0h0m0 1h0m1 0h0m0 1h0m1-1h0m0 1h0m1-1h0m0 1h0m1-1h0m1-2h0m0 1h0m1-1h0m1 0h0m0 1h0m1 0h0m1 0h0m0 1h0m1 0h0m1 0h0m0 1h0m1-1h0m0 1h0m1-1h0m1-1h0m1-1h0m0 1h0m1-1h0m0 1h0m1 0h0m0 1h0m1 0h0m0 1h0m1 0h0m1-1h0m0 1h0m1-2h0m0 1h0m1-1h0m1-1h0m0 1h0m1-1h0m0 1h0m1-1h0m1 0h0m0 1h0m1-1h0m0 1h0m1 0h0m0 1h0m1 0h0m1 0h0m0 1h0m1-1h0m0 1h0m1-1h0m0 1h0m1-1h0m0 1h0m1-1h0m0 1h0m1-2h0m0 1h0m1-1h0m1-1h0m0 1h0m1-1h0m1 0h0m0 1h0m1-1h0m0 1h0m1 0h0m0 1h0m1 0h0m1-1h0m0 1h0m1 0h0m1-1h0m0 1h0m1-1h0m0 1h0m1-1h0m0 1h0m1-1h0m1 0h0m1 0h0m1 0h0m1 0h0m1 0h0m1 0h0m1 0h0m1 0h0m1 0h0m0 1h0m1-1h0m0 1h0m1 0h0m1 0h0m0 1h0m1-1h0m0 1h0m1-1h0m0 1h0m1-1h0m0 1h0m1-2h0m0 1h0m1-1h0m0 1h0m1-1h0m0 1h0m1-1h0m1 0h0m0 1h0m1 0h0m1 0h0m1-1h0m0 1h0m1-2h0m0 1h0m1-2h0m0 1h0m1-1h0m0 1h0m1 0h0m1 0h0m0 1h0m1 0h0m0 1h0m1 0h0m1 0h0m0 1h0m1-1h0m0 1h0m1-1h0m1 0h0m1 0h0m1 0h0m0 1h0m1-1h0m1-2h0m0 1h0m0 1h0m1-2h0m0 1h0m1-1h0m1 0h0m0 1h0m1 0h0m0 1h0m1 0h0m0 1h0m1-1h0m0 1h0m1-1h0m1-2h0m0 1h0m0 1h0m1-2h0m0 1h0m1-1h0m1 0h0m1 0h0m0 1h0m1 0h0m0 1h0m1 0h0m0 1h0m1 0h0m1-1h0m0 1h0m1-2h0m0 1h0m1-2h0m0 1h0m1-1h0m1 0h0m0 1h0m1 0h0m1 0h0m0 1h0m1 0h0m1 0h0m0 1h0m1-1h0m0 1h0m1-1h0m0 1h0m1-1h0m1-1h0m0 1h0m1-1h0m1 0h0m1-1h0m0 1h0m1 0h0m1-1h0m0 1h0m1 0h0m0 1h0m1 0h0m1 0h0m0 1h0m1 0h0m1-1h0m0 1h0m1-1h0m0 1h0m1-2h0m0 1h0m1-2h0m0 1h0m1-1h0m0 1h0m1-1h0m1 0h0m1 0h0m0 1h0m1 0h0m0 1h0m1 0h0m1 0h0m0 1h0m1-1h0m0 1h0m1-1h0m1-1h0m0 1h0m1 0h0m1-1h0m0 1h0m1 0h0m1 0h0m1-1h0m0 1h0m1-1h0m1-1h0m0 1h0m1-1h0m1 0h0m0 1h0m1 0h0m1 0h0m0 1h0m1-1h0m0 1h0m1-1h0m0 1h0m1-1h0" stroke="#000" stroke-width="3.74" stroke-linecap="round" fill="none"/>
<path d="M354 1003h0m19-3h0m51 0h0m92 0h0m53 1h0m408-3h0m276 3h0" stroke="#000" stroke-width="3" stroke-linecap="round" fill="none"/>
<path d="M592 966h0m125 22h0m325 3h0m251-34h0" stroke="#f00" stroke-width="3" stroke-linecap="round" fill="none"/>
</g>
<path d="M105.5 1009.5H1474.5" stroke="#b0b0b0" stroke-width="1.111" stroke-dasharray="1.111 1.833"/>
<path d="M105.5 983.5H1474.5" stroke="#b0b0b0" stroke-width="1.111" stroke-dasharray="1.111 1.833"/>
<path d="M105.5 957.5H1474.5" stroke="#b0b0b0" stroke-width="1.111" stroke-dasharray="1.111 1.833"/>
<path d="M222.3 959.7h4.4l-2.2 -4.4zM246.3 959.7h4.4l-2.2 -4.4zM376.3 959.7h4.4l-2.2 -4.4zM520.3 959.7h4.4l-2.2 -4.4zM594.3 959.7h4.4l-2.2 -4.4zM791.3 959.7h4.4l-2.2 -4.4zM816.3 959.7h4.4l-2.2 -4.4zM847.3 959.7h4.4l-2.2 -4.4zM901.3 959.7h4.4l-2.2 -4.4zM972.3 959.7h4.4l-2.2 -4.4zM1186.3 959.7h4.4l-2.2 -4.4zM1265.3 959.7h4.4l-2.2 -4.4z" fill="#f00"/>
<path d="M162 1010.9V954.5" stroke="#800080" stroke-width="2.083" stroke-dasharray="2.083 3.4375" fill="none"/>
<path d="M1293 1010.9V954.5" stroke="#800080" stroke-width="2.083" stroke-dasharray="2.083 3.4375" fill="none"/>
</g>
<rect x="105.5" y="725.5" width="1369.0" height="229.0" fill="none" stroke="#000" stroke-width="1.111"/>
<rect x="105.5" y="954.5" width="1369.0" height="57.0" fill="none" stroke="#000" stroke-width="1.111"/>
<path d="M162.5 1011.5v4.861" stroke="#000" stroke-width="1.111"/>
<text x="158" y="1032">0</text>
<path d="M422.5 1011.5v4.861" stroke="#000" stroke-width="1.111"/>
<text x="404" y="1032">2000</text>
<path d="M681.5 1011.5v4.861" stroke="#000" stroke-width="1.111"/>
<text x="664" y="1032">4000</text>
<path d="M941.5 1011.5v4.861" stroke="#000" stroke-width="1.111"/>
<text x="924" y="1032">6000</text>
<path d="M1201.5 1011.5v4.861" stroke="#000" stroke-width="1.111"/>
<text x="1184" y="1032">8000</text>
<path d="M1461.5 1011.5v4.861" stroke="#000" stroke-width="1.111"/>
<text x="1439" y="1032">10000</text>
<path d="M105.5 921.5h-4.861" stroke="#000" stroke-width="1.111"/>
<text x="95.3" y="927" text-anchor="end">OBS not OK</text>
<path d="M105.5 889.5h-4.861" stroke="#000" stroke-width="1.111"/>
<text x="95.3" y="894" text-anchor="end">dr &gt; 5</text>
<path d="M105.5 856.5h-4.861" stroke="#000" stroke-width="1.111"/>
<text x="95.3" y="862" text-anchor="end">Ion. rad.</text>
<path d="M105.5 823.5h-4.861" stroke="#000" stroke-width="1.111"/>
<text x="95.3" y="829" text-anchor="end">Sat. pixel.</text>
<path d="M105.5 791.5h-4.861" stroke="#000" stroke-width="1.111"/>
<text x="95.3" y="796" text-anchor="end">not track</text>
<path d="M105.5 758.5h-4.861" stroke="#000" stroke-width="1.111"/>
<text x="95.3" y="764" text-anchor="end">not Kalman</text>
<path d="M105.5 1009.5h-4.861" stroke="#000" stroke-width="1.111"/>
<text x="95.3" y="1014" text-anchor="end">0</text>
<path d="M105.5 983.5h-4.861" stroke="#000" stroke-width="1.111"/>
<text x="95.3" y="988" text-anchor="end">5</text>
<path d="M105.5 957.5h-4.861" stroke="#000" stroke-width="1.111"/>
<text x="95.3" y="962" text-anchor="end">10</text>
<path d="M105.5 996.5h-2.778" stroke="#000" stroke-width="0.833"/>
<path d="M105.5 970.5h-2.778" stroke="#000" stroke-width="0.833"/>
<text transform="translate(69,983.5) rotate(-90)" text-anchor="middle">dr</text>
</svg>
</body></html>
